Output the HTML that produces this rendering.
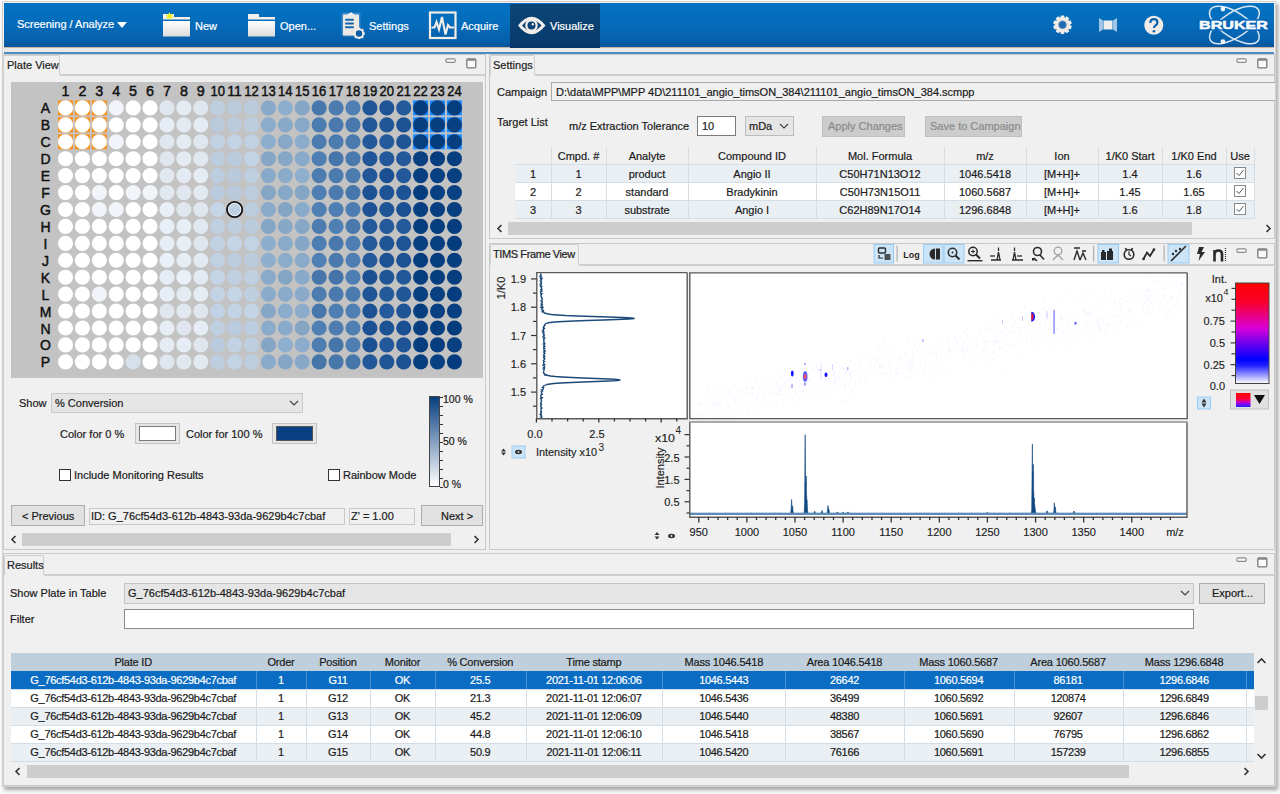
<!DOCTYPE html><html><head><meta charset="utf-8"><style>
*{box-sizing:border-box}
html,body{margin:0;padding:0;width:1280px;height:794px;overflow:hidden;background:#fbfbfb;font-family:"Liberation Sans", sans-serif;font-size:11px;color:#1a1a1a}
.a{position:absolute}
.t{position:absolute;white-space:nowrap;line-height:1;-webkit-text-stroke:0.2px currentColor}
.hb{position:absolute;white-space:nowrap;color:#fff;font-size:11px;line-height:1;-webkit-text-stroke:0.2px #fff}
.panel{position:absolute;border:1px solid #c9c9c9;background:#f0f0f0}
.tab{position:absolute;background:#f0f0f0;border:1px solid #cfcfcf;border-bottom:none;border-radius:2px 2px 0 0}
.tabline{position:absolute;height:2px;background:#d0d0d0}
.field{position:absolute;background:#f0f0f0;border:1px solid #c8c8c8}
.btn{position:absolute;background:#e1e1e1;border:1px solid #adadad;text-align:center}
.sb{position:absolute;background:#f0f0f0}
.thumb{position:absolute;background:#cdcdcd}
</style></head><body>
<div class="a" style="left:2px;top:1px;width:1274px;height:786px;background:#f0f0f0;border:1px solid #d9d2ce;box-shadow:2px 3px 4px rgba(0,0,0,0.35)"></div><div class="a" style="left:4px;top:3px;width:1270px;height:44px;background:linear-gradient(#0372c3 0%,#046cbb 45%,#0760ac 85%,#08559c 100%)"></div><div class="a" style="left:4px;top:47px;width:1270px;height:1px;background:#c9b8a8"></div><div class="a" style="left:4px;top:48px;width:1270px;height:4px;background:#e9e9e9"></div><div class="a" style="left:4px;top:52px;width:1270px;height:2px;background:#4a8cc4"></div><div class="a" style="left:510px;top:4px;width:90px;height:44px;background:linear-gradient(#0b4576,#083c6e 80%,#05346a)"></div><div class="hb" style="left:17px;top:19px">Screening / Analyze</div><svg class="a" style="left:117px;top:22px" width="10" height="6"><path d="M0 0H10L5 6Z" fill="#fff"/></svg><svg class="a" style="left:162px;top:12px" width="30" height="26"><defs><linearGradient id="fg" x1="0" y1="0" x2="0" y2="1"><stop offset="0" stop-color="#ffffff"/><stop offset="1" stop-color="#dcdcdc"/></linearGradient></defs><rect x="1" y="2" width="11" height="4" fill="#f4f0ec"/><rect x="1" y="5" width="27" height="2.5" fill="#f4efe9"/><rect x="1" y="9" width="27" height="15.5" fill="url(#fg)"/><path d="M7.5 0L8.6 2.6 11.3 1.8 9.6 4 11.8 5.6 9 5.6 8.4 8.3 7 6 4.6 7.2 5.6 4.8 3.4 3.2 6 3.1Z" fill="#e8f020"/></svg><div class="hb" style="left:195px;top:21px">New</div><svg class="a" style="left:247px;top:12px" width="30" height="26"><defs><linearGradient id="fg" x1="0" y1="0" x2="0" y2="1"><stop offset="0" stop-color="#ffffff"/><stop offset="1" stop-color="#dcdcdc"/></linearGradient></defs><rect x="1" y="2" width="11" height="4" fill="#f4f0ec"/><rect x="1" y="5" width="27" height="2.5" fill="#f4efe9"/><rect x="1" y="9" width="27" height="15.5" fill="url(#fg)"/></svg><div class="hb" style="left:280px;top:21px">Open...</div><svg class="a" style="left:340px;top:11px" width="26" height="28">
<rect x="1.5" y="1.5" width="19" height="24" rx="2" fill="#7fb0dc" opacity="0.45"/>
<rect x="3" y="3.5" width="16" height="21" rx="1" fill="#ece8e4"/>
<path d="M7 4L11 1.3 15 4Z" fill="#f4f4f4"/>
<rect x="5" y="7.8" width="9" height="2" rx="1" fill="#1466b0"/>
<rect x="5" y="11.6" width="9" height="2" rx="1" fill="#1466b0"/>
<rect x="5" y="15.3" width="9" height="2" rx="1" fill="#1466b0"/>
<g transform="translate(19,22.5)"><rect x="-1" y="-5.9" width="2" height="2" transform="rotate(0)" fill="#f0ebe6"/><rect x="-1" y="-5.9" width="2" height="2" transform="rotate(45)" fill="#f0ebe6"/><rect x="-1" y="-5.9" width="2" height="2" transform="rotate(90)" fill="#f0ebe6"/><rect x="-1" y="-5.9" width="2" height="2" transform="rotate(135)" fill="#f0ebe6"/><rect x="-1" y="-5.9" width="2" height="2" transform="rotate(180)" fill="#f0ebe6"/><rect x="-1" y="-5.9" width="2" height="2" transform="rotate(225)" fill="#f0ebe6"/><rect x="-1" y="-5.9" width="2" height="2" transform="rotate(270)" fill="#f0ebe6"/><rect x="-1" y="-5.9" width="2" height="2" transform="rotate(315)" fill="#f0ebe6"/><circle r="4.2" fill="#0a5ea8" stroke="#f0ebe6" stroke-width="2"/></g>
</svg><div class="hb" style="left:369px;top:21px">Settings</div><svg class="a" style="left:428px;top:11px" width="30" height="29">
<rect x="2" y="1.5" width="25.5" height="25.5" fill="none" stroke="#f3ede8" stroke-width="2.2"/>
<path d="M3.5 16.5H6.5L8.5 11 11 18.5 14 6 17.5 23.5 20 14 22 16.5H26" fill="none" stroke="#f3ede8" stroke-width="2.1" stroke-linejoin="miter"/>
</svg><div class="hb" style="left:461px;top:21px">Acquire</div><svg class="a" style="left:517px;top:16px" width="30" height="19">
<path d="M1 9.5Q14.5 -8 28.5 9.5Q14.5 27 1 9.5Z" fill="#f2eeeb"/>
<path d="M5 9.5Q14.5 -1.5 24.5 9.5Q14.5 20.5 5 9.5Z" fill="#0a4173"/>
<circle cx="14.5" cy="9.5" r="6.3" fill="#f2eeeb"/>
<circle cx="14.5" cy="9.5" r="4" fill="#0a4173"/>
<circle cx="15.8" cy="8.3" r="1.2" fill="#f2eeeb"/>
</svg><div class="hb" style="left:550px;top:21px">Visualize</div><svg class="a" style="left:1052px;top:14px" width="22" height="22"><g transform="translate(10.5,10.8)">
<path d="M-1.6 -9.3H1.6L2.4 -6H-2.4Z" transform="rotate(0)" fill="#f0ebe6"/><path d="M-1.6 -9.3H1.6L2.4 -6H-2.4Z" transform="rotate(36)" fill="#f0ebe6"/><path d="M-1.6 -9.3H1.6L2.4 -6H-2.4Z" transform="rotate(72)" fill="#f0ebe6"/><path d="M-1.6 -9.3H1.6L2.4 -6H-2.4Z" transform="rotate(108)" fill="#f0ebe6"/><path d="M-1.6 -9.3H1.6L2.4 -6H-2.4Z" transform="rotate(144)" fill="#f0ebe6"/><path d="M-1.6 -9.3H1.6L2.4 -6H-2.4Z" transform="rotate(180)" fill="#f0ebe6"/><path d="M-1.6 -9.3H1.6L2.4 -6H-2.4Z" transform="rotate(216)" fill="#f0ebe6"/><path d="M-1.6 -9.3H1.6L2.4 -6H-2.4Z" transform="rotate(252)" fill="#f0ebe6"/><path d="M-1.6 -9.3H1.6L2.4 -6H-2.4Z" transform="rotate(288)" fill="#f0ebe6"/><path d="M-1.6 -9.3H1.6L2.4 -6H-2.4Z" transform="rotate(324)" fill="#f0ebe6"/><circle r="7" fill="#f0ebe6"/><circle r="4" fill="#1c6cb2"/><circle r="4" fill="none" stroke="#9aa8b8" stroke-width="0.8"/></g></svg><svg class="a" style="left:1098px;top:17px" width="20" height="16">
<path d="M1 1L5 3.5V12.5L1 15Z" fill="#9fc6e8"/><path d="M19 1L15 3.5V12.5L19 15Z" fill="#9fc6e8"/>
<rect x="5.5" y="3.5" width="9" height="9" fill="#eeeeee"/></svg><svg class="a" style="left:1143px;top:15px" width="22" height="22">
<circle cx="10.8" cy="10.3" r="9.5" fill="#efebe7"/>
<path d="M7.3 8Q7.3 4.2 10.9 4.2Q14.4 4.2 14.4 7.4Q14.4 9.3 12.3 10.6Q11 11.4 11 13" fill="none" stroke="#0a62ad" stroke-width="2.2"/>
<circle cx="11" cy="16.2" r="1.3" fill="#0a62ad"/></svg><svg class="a" style="left:1190px;top:2px" width="86" height="46" viewBox="1190 2 86 46">
<g fill="none" stroke="#d8e6f4" stroke-width="1.5">
<ellipse cx="1234.4" cy="25" rx="28.5" ry="12.5" transform="rotate(33 1234.4 25)"/>
<ellipse cx="1234.4" cy="25" rx="28.5" ry="12.5" transform="rotate(-33 1234.4 25)"/>
</g>
<circle cx="1222.9" cy="9.1" r="2.3" fill="#f4f8fc"/><circle cx="1222.9" cy="41.6" r="2.3" fill="#f4f8fc"/>
<text x="1199" y="29.3" font-family="Liberation Sans" font-weight="bold" font-size="10.8" fill="#0865b5" stroke="#0865b5" stroke-width="3" textLength="69" lengthAdjust="spacingAndGlyphs">BRUKER</text><text x="1199" y="29.3" font-family="Liberation Sans" font-weight="bold" font-size="10.8" fill="#fafcff" stroke="#fafcff" stroke-width="0.45" textLength="69" lengthAdjust="spacingAndGlyphs">BRUKER</text>
</svg><div class="panel" style="left:3px;top:54px;width:483px;height:496px"></div><div class="tab" style="left:3px;top:55px;width:57px;height:20px"></div><div class="t" style="left:7px;top:60px;color:#222">Plate View</div><div class="a" style="left:60px;top:74px;width:425px;height:2px;background:#cfcfcf"></div><svg class="a" style="left:445px;top:58px" width="32" height="11"><rect x="0.8" y="0.8" width="9.5" height="3.6" rx="1.6" fill="#fafafa" stroke="#8a8a8a" stroke-width="1.2"/><rect x="21.8" y="0.8" width="9" height="9" rx="1" fill="#fafafa" stroke="#7a7a7a" stroke-width="1.3"/><rect x="22" y="1" width="8.6" height="1.8" fill="#8a8a8a"/></svg><div class="a" style="left:11px;top:82px;width:472px;height:296px;background:#c3c3c3"></div><svg class="a" style="left:11px;top:82px" width="472" height="296"><text x="54.5" y="13.700000000000003" text-anchor="middle" font-size="14.5" font-family="Liberation Sans" fill="#111" stroke="#111" stroke-width="0.45" textLength="8" lengthAdjust="spacingAndGlyphs">1</text><text x="71.4" y="13.700000000000003" text-anchor="middle" font-size="14.5" font-family="Liberation Sans" fill="#111" stroke="#111" stroke-width="0.45" textLength="8" lengthAdjust="spacingAndGlyphs">2</text><text x="88.3" y="13.700000000000003" text-anchor="middle" font-size="14.5" font-family="Liberation Sans" fill="#111" stroke="#111" stroke-width="0.45" textLength="8" lengthAdjust="spacingAndGlyphs">3</text><text x="105.2" y="13.700000000000003" text-anchor="middle" font-size="14.5" font-family="Liberation Sans" fill="#111" stroke="#111" stroke-width="0.45" textLength="8" lengthAdjust="spacingAndGlyphs">4</text><text x="122.1" y="13.700000000000003" text-anchor="middle" font-size="14.5" font-family="Liberation Sans" fill="#111" stroke="#111" stroke-width="0.45" textLength="8" lengthAdjust="spacingAndGlyphs">5</text><text x="139.1" y="13.700000000000003" text-anchor="middle" font-size="14.5" font-family="Liberation Sans" fill="#111" stroke="#111" stroke-width="0.45" textLength="8" lengthAdjust="spacingAndGlyphs">6</text><text x="156.0" y="13.700000000000003" text-anchor="middle" font-size="14.5" font-family="Liberation Sans" fill="#111" stroke="#111" stroke-width="0.45" textLength="8" lengthAdjust="spacingAndGlyphs">7</text><text x="172.9" y="13.700000000000003" text-anchor="middle" font-size="14.5" font-family="Liberation Sans" fill="#111" stroke="#111" stroke-width="0.45" textLength="8" lengthAdjust="spacingAndGlyphs">8</text><text x="189.8" y="13.700000000000003" text-anchor="middle" font-size="14.5" font-family="Liberation Sans" fill="#111" stroke="#111" stroke-width="0.45" textLength="8" lengthAdjust="spacingAndGlyphs">9</text><text x="206.7" y="13.700000000000003" text-anchor="middle" font-size="14.5" font-family="Liberation Sans" fill="#111" stroke="#111" stroke-width="0.45" textLength="14.5" lengthAdjust="spacingAndGlyphs">10</text><text x="223.6" y="13.700000000000003" text-anchor="middle" font-size="14.5" font-family="Liberation Sans" fill="#111" stroke="#111" stroke-width="0.45" textLength="14.5" lengthAdjust="spacingAndGlyphs">11</text><text x="240.5" y="13.700000000000003" text-anchor="middle" font-size="14.5" font-family="Liberation Sans" fill="#111" stroke="#111" stroke-width="0.45" textLength="14.5" lengthAdjust="spacingAndGlyphs">12</text><text x="257.4" y="13.700000000000003" text-anchor="middle" font-size="14.5" font-family="Liberation Sans" fill="#111" stroke="#111" stroke-width="0.45" textLength="14.5" lengthAdjust="spacingAndGlyphs">13</text><text x="274.3" y="13.700000000000003" text-anchor="middle" font-size="14.5" font-family="Liberation Sans" fill="#111" stroke="#111" stroke-width="0.45" textLength="14.5" lengthAdjust="spacingAndGlyphs">14</text><text x="291.2" y="13.700000000000003" text-anchor="middle" font-size="14.5" font-family="Liberation Sans" fill="#111" stroke="#111" stroke-width="0.45" textLength="14.5" lengthAdjust="spacingAndGlyphs">15</text><text x="308.1" y="13.700000000000003" text-anchor="middle" font-size="14.5" font-family="Liberation Sans" fill="#111" stroke="#111" stroke-width="0.45" textLength="14.5" lengthAdjust="spacingAndGlyphs">16</text><text x="325.1" y="13.700000000000003" text-anchor="middle" font-size="14.5" font-family="Liberation Sans" fill="#111" stroke="#111" stroke-width="0.45" textLength="14.5" lengthAdjust="spacingAndGlyphs">17</text><text x="342.0" y="13.700000000000003" text-anchor="middle" font-size="14.5" font-family="Liberation Sans" fill="#111" stroke="#111" stroke-width="0.45" textLength="14.5" lengthAdjust="spacingAndGlyphs">18</text><text x="358.9" y="13.700000000000003" text-anchor="middle" font-size="14.5" font-family="Liberation Sans" fill="#111" stroke="#111" stroke-width="0.45" textLength="14.5" lengthAdjust="spacingAndGlyphs">19</text><text x="375.8" y="13.700000000000003" text-anchor="middle" font-size="14.5" font-family="Liberation Sans" fill="#111" stroke="#111" stroke-width="0.45" textLength="14.5" lengthAdjust="spacingAndGlyphs">20</text><text x="392.7" y="13.700000000000003" text-anchor="middle" font-size="14.5" font-family="Liberation Sans" fill="#111" stroke="#111" stroke-width="0.45" textLength="14.5" lengthAdjust="spacingAndGlyphs">21</text><text x="409.6" y="13.700000000000003" text-anchor="middle" font-size="14.5" font-family="Liberation Sans" fill="#111" stroke="#111" stroke-width="0.45" textLength="14.5" lengthAdjust="spacingAndGlyphs">22</text><text x="426.5" y="13.700000000000003" text-anchor="middle" font-size="14.5" font-family="Liberation Sans" fill="#111" stroke="#111" stroke-width="0.45" textLength="14.5" lengthAdjust="spacingAndGlyphs">23</text><text x="443.4" y="13.700000000000003" text-anchor="middle" font-size="14.5" font-family="Liberation Sans" fill="#111" stroke="#111" stroke-width="0.45" textLength="14.5" lengthAdjust="spacingAndGlyphs">24</text><text x="34.5" y="31.4" text-anchor="middle" font-size="14" font-family="Liberation Sans" fill="#111" stroke="#111" stroke-width="0.45">A</text><text x="34.5" y="48.3" text-anchor="middle" font-size="14" font-family="Liberation Sans" fill="#111" stroke="#111" stroke-width="0.45">B</text><text x="34.5" y="65.3" text-anchor="middle" font-size="14" font-family="Liberation Sans" fill="#111" stroke="#111" stroke-width="0.45">C</text><text x="34.5" y="82.2" text-anchor="middle" font-size="14" font-family="Liberation Sans" fill="#111" stroke="#111" stroke-width="0.45">D</text><text x="34.5" y="99.1" text-anchor="middle" font-size="14" font-family="Liberation Sans" fill="#111" stroke="#111" stroke-width="0.45">E</text><text x="34.5" y="116.1" text-anchor="middle" font-size="14" font-family="Liberation Sans" fill="#111" stroke="#111" stroke-width="0.45">F</text><text x="34.5" y="133.0" text-anchor="middle" font-size="14" font-family="Liberation Sans" fill="#111" stroke="#111" stroke-width="0.45">G</text><text x="34.5" y="149.9" text-anchor="middle" font-size="14" font-family="Liberation Sans" fill="#111" stroke="#111" stroke-width="0.45">H</text><text x="34.5" y="166.8" text-anchor="middle" font-size="14" font-family="Liberation Sans" fill="#111" stroke="#111" stroke-width="0.45">I</text><text x="34.5" y="183.8" text-anchor="middle" font-size="14" font-family="Liberation Sans" fill="#111" stroke="#111" stroke-width="0.45">J</text><text x="34.5" y="200.7" text-anchor="middle" font-size="14" font-family="Liberation Sans" fill="#111" stroke="#111" stroke-width="0.45">K</text><text x="34.5" y="217.6" text-anchor="middle" font-size="14" font-family="Liberation Sans" fill="#111" stroke="#111" stroke-width="0.45">L</text><text x="34.5" y="234.6" text-anchor="middle" font-size="14" font-family="Liberation Sans" fill="#111" stroke="#111" stroke-width="0.45">M</text><text x="34.5" y="251.5" text-anchor="middle" font-size="14" font-family="Liberation Sans" fill="#111" stroke="#111" stroke-width="0.45">N</text><text x="34.5" y="268.4" text-anchor="middle" font-size="14" font-family="Liberation Sans" fill="#111" stroke="#111" stroke-width="0.45">O</text><text x="34.5" y="285.4" text-anchor="middle" font-size="14" font-family="Liberation Sans" fill="#111" stroke="#111" stroke-width="0.45">P</text><rect x="47.0" y="18.4" width="15" height="15" fill="#f7931e"/><circle cx="54.50" cy="25.90" r="7.55" fill="#ffffff"/><rect x="63.9" y="18.4" width="15" height="15" fill="#f7931e"/><circle cx="71.41" cy="25.90" r="7.55" fill="#ffffff"/><rect x="80.8" y="18.4" width="15" height="15" fill="#f7931e"/><circle cx="88.32" cy="25.90" r="7.55" fill="#ffffff"/><circle cx="105.23" cy="25.90" r="7.55" fill="#f1f5f9"/><circle cx="122.14" cy="25.90" r="7.55" fill="#ffffff"/><circle cx="139.05" cy="25.90" r="7.55" fill="#ffffff"/><circle cx="155.96" cy="25.90" r="7.55" fill="#dfe6ed"/><circle cx="172.87" cy="25.90" r="7.55" fill="#e4ebf2"/><circle cx="189.78" cy="25.90" r="7.55" fill="#dfe6ed"/><circle cx="206.69" cy="25.90" r="7.55" fill="#becfe1"/><circle cx="223.60" cy="25.90" r="7.55" fill="#bacbdd"/><circle cx="240.51" cy="25.90" r="7.55" fill="#bacbdd"/><circle cx="257.42" cy="25.90" r="7.55" fill="#89a9c9"/><circle cx="274.33" cy="25.90" r="7.55" fill="#8eaece"/><circle cx="291.24" cy="25.90" r="7.55" fill="#86a6c6"/><circle cx="308.15" cy="25.90" r="7.55" fill="#4777ab"/><circle cx="325.06" cy="25.90" r="7.55" fill="#4b7baf"/><circle cx="341.97" cy="25.90" r="7.55" fill="#4f7fb3"/><circle cx="358.88" cy="25.90" r="7.55" fill="#205697"/><circle cx="375.79" cy="25.90" r="7.55" fill="#1e5495"/><circle cx="392.70" cy="25.90" r="7.55" fill="#245a9b"/><rect x="402.1" y="18.4" width="15" height="15" fill="#1a8cff"/><circle cx="409.61" cy="25.90" r="7.55" fill="#053c7e"/><rect x="419.0" y="18.4" width="15" height="15" fill="#1a8cff"/><circle cx="426.52" cy="25.90" r="7.55" fill="#094082"/><rect x="435.9" y="18.4" width="15" height="15" fill="#1a8cff"/><circle cx="443.43" cy="25.90" r="7.55" fill="#063d7f"/><rect x="47.0" y="35.3" width="15" height="15" fill="#f7931e"/><circle cx="54.50" cy="42.83" r="7.55" fill="#ffffff"/><rect x="63.9" y="35.3" width="15" height="15" fill="#f7931e"/><circle cx="71.41" cy="42.83" r="7.55" fill="#ffffff"/><rect x="80.8" y="35.3" width="15" height="15" fill="#f7931e"/><circle cx="88.32" cy="42.83" r="7.55" fill="#ffffff"/><circle cx="105.23" cy="42.83" r="7.55" fill="#ffffff"/><circle cx="122.14" cy="42.83" r="7.55" fill="#ffffff"/><circle cx="139.05" cy="42.83" r="7.55" fill="#ffffff"/><circle cx="155.96" cy="42.83" r="7.55" fill="#e6edf4"/><circle cx="172.87" cy="42.83" r="7.55" fill="#e3eaf1"/><circle cx="189.78" cy="42.83" r="7.55" fill="#e5ecf3"/><circle cx="206.69" cy="42.83" r="7.55" fill="#bacbdd"/><circle cx="223.60" cy="42.83" r="7.55" fill="#bacbdd"/><circle cx="240.51" cy="42.83" r="7.55" fill="#bccddf"/><circle cx="257.42" cy="42.83" r="7.55" fill="#8caccc"/><circle cx="274.33" cy="42.83" r="7.55" fill="#89a9c9"/><circle cx="291.24" cy="42.83" r="7.55" fill="#88a8c8"/><circle cx="308.15" cy="42.83" r="7.55" fill="#4b7baf"/><circle cx="325.06" cy="42.83" r="7.55" fill="#4979ad"/><circle cx="341.97" cy="42.83" r="7.55" fill="#4878ac"/><circle cx="358.88" cy="42.83" r="7.55" fill="#225899"/><circle cx="375.79" cy="42.83" r="7.55" fill="#215798"/><circle cx="392.70" cy="42.83" r="7.55" fill="#1c5293"/><rect x="402.1" y="35.3" width="15" height="15" fill="#1a8cff"/><circle cx="409.61" cy="42.83" r="7.55" fill="#073e80"/><rect x="419.0" y="35.3" width="15" height="15" fill="#1a8cff"/><circle cx="426.52" cy="42.83" r="7.55" fill="#073e80"/><rect x="435.9" y="35.3" width="15" height="15" fill="#1a8cff"/><circle cx="443.43" cy="42.83" r="7.55" fill="#094082"/><rect x="47.0" y="52.3" width="15" height="15" fill="#f7931e"/><circle cx="54.50" cy="59.76" r="7.55" fill="#ffffff"/><rect x="63.9" y="52.3" width="15" height="15" fill="#f7931e"/><circle cx="71.41" cy="59.76" r="7.55" fill="#ffffff"/><rect x="80.8" y="52.3" width="15" height="15" fill="#f7931e"/><circle cx="88.32" cy="59.76" r="7.55" fill="#ffffff"/><circle cx="105.23" cy="59.76" r="7.55" fill="#f1f5f9"/><circle cx="122.14" cy="59.76" r="7.55" fill="#ffffff"/><circle cx="139.05" cy="59.76" r="7.55" fill="#ffffff"/><circle cx="155.96" cy="59.76" r="7.55" fill="#e0e7ee"/><circle cx="172.87" cy="59.76" r="7.55" fill="#e4ebf2"/><circle cx="189.78" cy="59.76" r="7.55" fill="#dfe6ed"/><circle cx="206.69" cy="59.76" r="7.55" fill="#c1d2e4"/><circle cx="223.60" cy="59.76" r="7.55" fill="#c2d3e5"/><circle cx="240.51" cy="59.76" r="7.55" fill="#c0d1e3"/><circle cx="257.42" cy="59.76" r="7.55" fill="#8eaece"/><circle cx="274.33" cy="59.76" r="7.55" fill="#88a8c8"/><circle cx="291.24" cy="59.76" r="7.55" fill="#8caccc"/><circle cx="308.15" cy="59.76" r="7.55" fill="#4b7baf"/><circle cx="325.06" cy="59.76" r="7.55" fill="#4b7baf"/><circle cx="341.97" cy="59.76" r="7.55" fill="#4a7aae"/><circle cx="358.88" cy="59.76" r="7.55" fill="#23599a"/><circle cx="375.79" cy="59.76" r="7.55" fill="#245a9b"/><circle cx="392.70" cy="59.76" r="7.55" fill="#1f5596"/><rect x="402.1" y="52.3" width="15" height="15" fill="#1a8cff"/><circle cx="409.61" cy="59.76" r="7.55" fill="#083f81"/><rect x="419.0" y="52.3" width="15" height="15" fill="#1a8cff"/><circle cx="426.52" cy="59.76" r="7.55" fill="#053c7e"/><rect x="435.9" y="52.3" width="15" height="15" fill="#1a8cff"/><circle cx="443.43" cy="59.76" r="7.55" fill="#083f81"/><circle cx="54.50" cy="76.69" r="7.55" fill="#ffffff"/><circle cx="71.41" cy="76.69" r="7.55" fill="#ffffff"/><circle cx="88.32" cy="76.69" r="7.55" fill="#ffffff"/><circle cx="105.23" cy="76.69" r="7.55" fill="#ffffff"/><circle cx="122.14" cy="76.69" r="7.55" fill="#ffffff"/><circle cx="139.05" cy="76.69" r="7.55" fill="#ffffff"/><circle cx="155.96" cy="76.69" r="7.55" fill="#dfe6ed"/><circle cx="172.87" cy="76.69" r="7.55" fill="#e4ebf2"/><circle cx="189.78" cy="76.69" r="7.55" fill="#e0e7ee"/><circle cx="206.69" cy="76.69" r="7.55" fill="#bbccde"/><circle cx="223.60" cy="76.69" r="7.55" fill="#bacbdd"/><circle cx="240.51" cy="76.69" r="7.55" fill="#c2d3e5"/><circle cx="257.42" cy="76.69" r="7.55" fill="#86a6c6"/><circle cx="274.33" cy="76.69" r="7.55" fill="#87a7c7"/><circle cx="291.24" cy="76.69" r="7.55" fill="#89a9c9"/><circle cx="308.15" cy="76.69" r="7.55" fill="#4e7eb2"/><circle cx="325.06" cy="76.69" r="7.55" fill="#4575a9"/><circle cx="341.97" cy="76.69" r="7.55" fill="#4979ad"/><circle cx="358.88" cy="76.69" r="7.55" fill="#205697"/><circle cx="375.79" cy="76.69" r="7.55" fill="#23599a"/><circle cx="392.70" cy="76.69" r="7.55" fill="#23599a"/><circle cx="409.61" cy="76.69" r="7.55" fill="#094082"/><circle cx="426.52" cy="76.69" r="7.55" fill="#063d7f"/><circle cx="443.43" cy="76.69" r="7.55" fill="#073e80"/><circle cx="54.50" cy="93.62" r="7.55" fill="#ffffff"/><circle cx="71.41" cy="93.62" r="7.55" fill="#ffffff"/><circle cx="88.32" cy="93.62" r="7.55" fill="#ffffff"/><circle cx="105.23" cy="93.62" r="7.55" fill="#ffffff"/><circle cx="122.14" cy="93.62" r="7.55" fill="#ffffff"/><circle cx="139.05" cy="93.62" r="7.55" fill="#ffffff"/><circle cx="155.96" cy="93.62" r="7.55" fill="#e1e8ef"/><circle cx="172.87" cy="93.62" r="7.55" fill="#e4ebf2"/><circle cx="189.78" cy="93.62" r="7.55" fill="#e5ecf3"/><circle cx="206.69" cy="93.62" r="7.55" fill="#bccddf"/><circle cx="223.60" cy="93.62" r="7.55" fill="#b9cadc"/><circle cx="240.51" cy="93.62" r="7.55" fill="#becfe1"/><circle cx="257.42" cy="93.62" r="7.55" fill="#89a9c9"/><circle cx="274.33" cy="93.62" r="7.55" fill="#8babcb"/><circle cx="291.24" cy="93.62" r="7.55" fill="#8fafcf"/><circle cx="308.15" cy="93.62" r="7.55" fill="#4c7cb0"/><circle cx="325.06" cy="93.62" r="7.55" fill="#4a7aae"/><circle cx="341.97" cy="93.62" r="7.55" fill="#4b7baf"/><circle cx="358.88" cy="93.62" r="7.55" fill="#215798"/><circle cx="375.79" cy="93.62" r="7.55" fill="#1a5091"/><circle cx="392.70" cy="93.62" r="7.55" fill="#23599a"/><circle cx="409.61" cy="93.62" r="7.55" fill="#083f81"/><circle cx="426.52" cy="93.62" r="7.55" fill="#094082"/><circle cx="443.43" cy="93.62" r="7.55" fill="#094082"/><circle cx="54.50" cy="110.55" r="7.55" fill="#ffffff"/><circle cx="71.41" cy="110.55" r="7.55" fill="#ffffff"/><circle cx="88.32" cy="110.55" r="7.55" fill="#f1f5f9"/><circle cx="105.23" cy="110.55" r="7.55" fill="#ffffff"/><circle cx="122.14" cy="110.55" r="7.55" fill="#f1f5f9"/><circle cx="139.05" cy="110.55" r="7.55" fill="#f1f5f9"/><circle cx="155.96" cy="110.55" r="7.55" fill="#e1e8ef"/><circle cx="172.87" cy="110.55" r="7.55" fill="#e0e7ee"/><circle cx="189.78" cy="110.55" r="7.55" fill="#e2e9f0"/><circle cx="206.69" cy="110.55" r="7.55" fill="#bacbdd"/><circle cx="223.60" cy="110.55" r="7.55" fill="#b9cadc"/><circle cx="240.51" cy="110.55" r="7.55" fill="#bbccde"/><circle cx="257.42" cy="110.55" r="7.55" fill="#86a6c6"/><circle cx="274.33" cy="110.55" r="7.55" fill="#88a8c8"/><circle cx="291.24" cy="110.55" r="7.55" fill="#85a5c5"/><circle cx="308.15" cy="110.55" r="7.55" fill="#4e7eb2"/><circle cx="325.06" cy="110.55" r="7.55" fill="#4b7baf"/><circle cx="341.97" cy="110.55" r="7.55" fill="#4676aa"/><circle cx="358.88" cy="110.55" r="7.55" fill="#1c5293"/><circle cx="375.79" cy="110.55" r="7.55" fill="#1d5394"/><circle cx="392.70" cy="110.55" r="7.55" fill="#1d5394"/><circle cx="409.61" cy="110.55" r="7.55" fill="#053c7e"/><circle cx="426.52" cy="110.55" r="7.55" fill="#094082"/><circle cx="443.43" cy="110.55" r="7.55" fill="#0a4183"/><circle cx="54.50" cy="127.48" r="7.55" fill="#ffffff"/><circle cx="71.41" cy="127.48" r="7.55" fill="#ffffff"/><circle cx="88.32" cy="127.48" r="7.55" fill="#f1f5f9"/><circle cx="105.23" cy="127.48" r="7.55" fill="#f1f5f9"/><circle cx="122.14" cy="127.48" r="7.55" fill="#ffffff"/><circle cx="139.05" cy="127.48" r="7.55" fill="#ffffff"/><circle cx="155.96" cy="127.48" r="7.55" fill="#e8eff6"/><circle cx="172.87" cy="127.48" r="7.55" fill="#e0e7ee"/><circle cx="189.78" cy="127.48" r="7.55" fill="#dfe6ed"/><circle cx="206.69" cy="127.48" r="7.55" fill="#c4d5e7"/><circle cx="223.60" cy="127.48" r="7.55" fill="#bfd0e2"/><circle cx="240.51" cy="127.48" r="7.55" fill="#bbccde"/><circle cx="257.42" cy="127.48" r="7.55" fill="#8aaaca"/><circle cx="274.33" cy="127.48" r="7.55" fill="#85a5c5"/><circle cx="291.24" cy="127.48" r="7.55" fill="#8aaaca"/><circle cx="308.15" cy="127.48" r="7.55" fill="#4f7fb3"/><circle cx="325.06" cy="127.48" r="7.55" fill="#4e7eb2"/><circle cx="341.97" cy="127.48" r="7.55" fill="#4c7cb0"/><circle cx="358.88" cy="127.48" r="7.55" fill="#1c5293"/><circle cx="375.79" cy="127.48" r="7.55" fill="#1e5495"/><circle cx="392.70" cy="127.48" r="7.55" fill="#1b5192"/><circle cx="409.61" cy="127.48" r="7.55" fill="#083f81"/><circle cx="426.52" cy="127.48" r="7.55" fill="#073e80"/><circle cx="443.43" cy="127.48" r="7.55" fill="#083f81"/><circle cx="54.50" cy="144.41" r="7.55" fill="#ffffff"/><circle cx="71.41" cy="144.41" r="7.55" fill="#ffffff"/><circle cx="88.32" cy="144.41" r="7.55" fill="#ffffff"/><circle cx="105.23" cy="144.41" r="7.55" fill="#ffffff"/><circle cx="122.14" cy="144.41" r="7.55" fill="#ffffff"/><circle cx="139.05" cy="144.41" r="7.55" fill="#ffffff"/><circle cx="155.96" cy="144.41" r="7.55" fill="#e8eff6"/><circle cx="172.87" cy="144.41" r="7.55" fill="#e7eef5"/><circle cx="189.78" cy="144.41" r="7.55" fill="#e1e8ef"/><circle cx="206.69" cy="144.41" r="7.55" fill="#bfd0e2"/><circle cx="223.60" cy="144.41" r="7.55" fill="#bdcee0"/><circle cx="240.51" cy="144.41" r="7.55" fill="#bacbdd"/><circle cx="257.42" cy="144.41" r="7.55" fill="#85a5c5"/><circle cx="274.33" cy="144.41" r="7.55" fill="#88a8c8"/><circle cx="291.24" cy="144.41" r="7.55" fill="#87a7c7"/><circle cx="308.15" cy="144.41" r="7.55" fill="#4c7cb0"/><circle cx="325.06" cy="144.41" r="7.55" fill="#4f7fb3"/><circle cx="341.97" cy="144.41" r="7.55" fill="#4979ad"/><circle cx="358.88" cy="144.41" r="7.55" fill="#245a9b"/><circle cx="375.79" cy="144.41" r="7.55" fill="#245a9b"/><circle cx="392.70" cy="144.41" r="7.55" fill="#245a9b"/><circle cx="409.61" cy="144.41" r="7.55" fill="#063d7f"/><circle cx="426.52" cy="144.41" r="7.55" fill="#063d7f"/><circle cx="443.43" cy="144.41" r="7.55" fill="#063d7f"/><circle cx="54.50" cy="161.34" r="7.55" fill="#ffffff"/><circle cx="71.41" cy="161.34" r="7.55" fill="#ffffff"/><circle cx="88.32" cy="161.34" r="7.55" fill="#ffffff"/><circle cx="105.23" cy="161.34" r="7.55" fill="#ffffff"/><circle cx="122.14" cy="161.34" r="7.55" fill="#ffffff"/><circle cx="139.05" cy="161.34" r="7.55" fill="#ffffff"/><circle cx="155.96" cy="161.34" r="7.55" fill="#e6edf4"/><circle cx="172.87" cy="161.34" r="7.55" fill="#e7eef5"/><circle cx="189.78" cy="161.34" r="7.55" fill="#dfe6ed"/><circle cx="206.69" cy="161.34" r="7.55" fill="#c1d2e4"/><circle cx="223.60" cy="161.34" r="7.55" fill="#c4d5e7"/><circle cx="240.51" cy="161.34" r="7.55" fill="#c2d3e5"/><circle cx="257.42" cy="161.34" r="7.55" fill="#8dadcd"/><circle cx="274.33" cy="161.34" r="7.55" fill="#8aaaca"/><circle cx="291.24" cy="161.34" r="7.55" fill="#86a6c6"/><circle cx="308.15" cy="161.34" r="7.55" fill="#4d7db1"/><circle cx="325.06" cy="161.34" r="7.55" fill="#4878ac"/><circle cx="341.97" cy="161.34" r="7.55" fill="#4d7db1"/><circle cx="358.88" cy="161.34" r="7.55" fill="#245a9b"/><circle cx="375.79" cy="161.34" r="7.55" fill="#1e5495"/><circle cx="392.70" cy="161.34" r="7.55" fill="#1e5495"/><circle cx="409.61" cy="161.34" r="7.55" fill="#094082"/><circle cx="426.52" cy="161.34" r="7.55" fill="#083f81"/><circle cx="443.43" cy="161.34" r="7.55" fill="#053c7e"/><circle cx="54.50" cy="178.27" r="7.55" fill="#ffffff"/><circle cx="71.41" cy="178.27" r="7.55" fill="#ffffff"/><circle cx="88.32" cy="178.27" r="7.55" fill="#ffffff"/><circle cx="105.23" cy="178.27" r="7.55" fill="#ffffff"/><circle cx="122.14" cy="178.27" r="7.55" fill="#ffffff"/><circle cx="139.05" cy="178.27" r="7.55" fill="#ffffff"/><circle cx="155.96" cy="178.27" r="7.55" fill="#e9f0f7"/><circle cx="172.87" cy="178.27" r="7.55" fill="#e6edf4"/><circle cx="189.78" cy="178.27" r="7.55" fill="#e2e9f0"/><circle cx="206.69" cy="178.27" r="7.55" fill="#c0d1e3"/><circle cx="223.60" cy="178.27" r="7.55" fill="#bbccde"/><circle cx="240.51" cy="178.27" r="7.55" fill="#bacbdd"/><circle cx="257.42" cy="178.27" r="7.55" fill="#8fafcf"/><circle cx="274.33" cy="178.27" r="7.55" fill="#8caccc"/><circle cx="291.24" cy="178.27" r="7.55" fill="#8aaaca"/><circle cx="308.15" cy="178.27" r="7.55" fill="#4f7fb3"/><circle cx="325.06" cy="178.27" r="7.55" fill="#4979ad"/><circle cx="341.97" cy="178.27" r="7.55" fill="#4e7eb2"/><circle cx="358.88" cy="178.27" r="7.55" fill="#23599a"/><circle cx="375.79" cy="178.27" r="7.55" fill="#1c5293"/><circle cx="392.70" cy="178.27" r="7.55" fill="#1c5293"/><circle cx="409.61" cy="178.27" r="7.55" fill="#063d7f"/><circle cx="426.52" cy="178.27" r="7.55" fill="#063d7f"/><circle cx="443.43" cy="178.27" r="7.55" fill="#073e80"/><circle cx="54.50" cy="195.20" r="7.55" fill="#ffffff"/><circle cx="71.41" cy="195.20" r="7.55" fill="#ffffff"/><circle cx="88.32" cy="195.20" r="7.55" fill="#ffffff"/><circle cx="105.23" cy="195.20" r="7.55" fill="#ffffff"/><circle cx="122.14" cy="195.20" r="7.55" fill="#ffffff"/><circle cx="139.05" cy="195.20" r="7.55" fill="#ffffff"/><circle cx="155.96" cy="195.20" r="7.55" fill="#e5ecf3"/><circle cx="172.87" cy="195.20" r="7.55" fill="#e9f0f7"/><circle cx="189.78" cy="195.20" r="7.55" fill="#e3eaf1"/><circle cx="206.69" cy="195.20" r="7.55" fill="#c4d5e7"/><circle cx="223.60" cy="195.20" r="7.55" fill="#bfd0e2"/><circle cx="240.51" cy="195.20" r="7.55" fill="#bfd0e2"/><circle cx="257.42" cy="195.20" r="7.55" fill="#8aaaca"/><circle cx="274.33" cy="195.20" r="7.55" fill="#85a5c5"/><circle cx="291.24" cy="195.20" r="7.55" fill="#89a9c9"/><circle cx="308.15" cy="195.20" r="7.55" fill="#4676aa"/><circle cx="325.06" cy="195.20" r="7.55" fill="#4474a8"/><circle cx="341.97" cy="195.20" r="7.55" fill="#4d7db1"/><circle cx="358.88" cy="195.20" r="7.55" fill="#1b5192"/><circle cx="375.79" cy="195.20" r="7.55" fill="#1f5596"/><circle cx="392.70" cy="195.20" r="7.55" fill="#225899"/><circle cx="409.61" cy="195.20" r="7.55" fill="#073e80"/><circle cx="426.52" cy="195.20" r="7.55" fill="#063d7f"/><circle cx="443.43" cy="195.20" r="7.55" fill="#073e80"/><circle cx="54.50" cy="212.13" r="7.55" fill="#ffffff"/><circle cx="71.41" cy="212.13" r="7.55" fill="#ffffff"/><circle cx="88.32" cy="212.13" r="7.55" fill="#f1f5f9"/><circle cx="105.23" cy="212.13" r="7.55" fill="#ffffff"/><circle cx="122.14" cy="212.13" r="7.55" fill="#ffffff"/><circle cx="139.05" cy="212.13" r="7.55" fill="#ffffff"/><circle cx="155.96" cy="212.13" r="7.55" fill="#e7eef5"/><circle cx="172.87" cy="212.13" r="7.55" fill="#e4ebf2"/><circle cx="189.78" cy="212.13" r="7.55" fill="#e5ecf3"/><circle cx="206.69" cy="212.13" r="7.55" fill="#c2d3e5"/><circle cx="223.60" cy="212.13" r="7.55" fill="#c4d5e7"/><circle cx="240.51" cy="212.13" r="7.55" fill="#becfe1"/><circle cx="257.42" cy="212.13" r="7.55" fill="#8babcb"/><circle cx="274.33" cy="212.13" r="7.55" fill="#8aaaca"/><circle cx="291.24" cy="212.13" r="7.55" fill="#8aaaca"/><circle cx="308.15" cy="212.13" r="7.55" fill="#4c7cb0"/><circle cx="325.06" cy="212.13" r="7.55" fill="#4979ad"/><circle cx="341.97" cy="212.13" r="7.55" fill="#4a7aae"/><circle cx="358.88" cy="212.13" r="7.55" fill="#1f5596"/><circle cx="375.79" cy="212.13" r="7.55" fill="#245a9b"/><circle cx="392.70" cy="212.13" r="7.55" fill="#215798"/><circle cx="409.61" cy="212.13" r="7.55" fill="#094082"/><circle cx="426.52" cy="212.13" r="7.55" fill="#094082"/><circle cx="443.43" cy="212.13" r="7.55" fill="#063d7f"/><circle cx="54.50" cy="229.06" r="7.55" fill="#ffffff"/><circle cx="71.41" cy="229.06" r="7.55" fill="#ffffff"/><circle cx="88.32" cy="229.06" r="7.55" fill="#ffffff"/><circle cx="105.23" cy="229.06" r="7.55" fill="#ffffff"/><circle cx="122.14" cy="229.06" r="7.55" fill="#ffffff"/><circle cx="139.05" cy="229.06" r="7.55" fill="#ffffff"/><circle cx="155.96" cy="229.06" r="7.55" fill="#dfe6ed"/><circle cx="172.87" cy="229.06" r="7.55" fill="#e1e8ef"/><circle cx="189.78" cy="229.06" r="7.55" fill="#dfe6ed"/><circle cx="206.69" cy="229.06" r="7.55" fill="#c1d2e4"/><circle cx="223.60" cy="229.06" r="7.55" fill="#c2d3e5"/><circle cx="240.51" cy="229.06" r="7.55" fill="#c3d4e6"/><circle cx="257.42" cy="229.06" r="7.55" fill="#86a6c6"/><circle cx="274.33" cy="229.06" r="7.55" fill="#8caccc"/><circle cx="291.24" cy="229.06" r="7.55" fill="#8caccc"/><circle cx="308.15" cy="229.06" r="7.55" fill="#4676aa"/><circle cx="325.06" cy="229.06" r="7.55" fill="#4e7eb2"/><circle cx="341.97" cy="229.06" r="7.55" fill="#4f7fb3"/><circle cx="358.88" cy="229.06" r="7.55" fill="#1c5293"/><circle cx="375.79" cy="229.06" r="7.55" fill="#245a9b"/><circle cx="392.70" cy="229.06" r="7.55" fill="#1e5495"/><circle cx="409.61" cy="229.06" r="7.55" fill="#073e80"/><circle cx="426.52" cy="229.06" r="7.55" fill="#094082"/><circle cx="443.43" cy="229.06" r="7.55" fill="#094082"/><circle cx="54.50" cy="245.99" r="7.55" fill="#ffffff"/><circle cx="71.41" cy="245.99" r="7.55" fill="#ffffff"/><circle cx="88.32" cy="245.99" r="7.55" fill="#ffffff"/><circle cx="105.23" cy="245.99" r="7.55" fill="#ffffff"/><circle cx="122.14" cy="245.99" r="7.55" fill="#ffffff"/><circle cx="139.05" cy="245.99" r="7.55" fill="#ffffff"/><circle cx="155.96" cy="245.99" r="7.55" fill="#e6edf4"/><circle cx="172.87" cy="245.99" r="7.55" fill="#dfe6ed"/><circle cx="189.78" cy="245.99" r="7.55" fill="#e5ecf3"/><circle cx="206.69" cy="245.99" r="7.55" fill="#becfe1"/><circle cx="223.60" cy="245.99" r="7.55" fill="#bacbdd"/><circle cx="240.51" cy="245.99" r="7.55" fill="#bdcee0"/><circle cx="257.42" cy="245.99" r="7.55" fill="#8babcb"/><circle cx="274.33" cy="245.99" r="7.55" fill="#8aaaca"/><circle cx="291.24" cy="245.99" r="7.55" fill="#85a5c5"/><circle cx="308.15" cy="245.99" r="7.55" fill="#4f7fb3"/><circle cx="325.06" cy="245.99" r="7.55" fill="#4d7db1"/><circle cx="341.97" cy="245.99" r="7.55" fill="#4f7fb3"/><circle cx="358.88" cy="245.99" r="7.55" fill="#1b5192"/><circle cx="375.79" cy="245.99" r="7.55" fill="#1c5293"/><circle cx="392.70" cy="245.99" r="7.55" fill="#1a5091"/><circle cx="409.61" cy="245.99" r="7.55" fill="#083f81"/><circle cx="426.52" cy="245.99" r="7.55" fill="#063d7f"/><circle cx="443.43" cy="245.99" r="7.55" fill="#053c7e"/><circle cx="54.50" cy="262.92" r="7.55" fill="#ffffff"/><circle cx="71.41" cy="262.92" r="7.55" fill="#ffffff"/><circle cx="88.32" cy="262.92" r="7.55" fill="#ffffff"/><circle cx="105.23" cy="262.92" r="7.55" fill="#ffffff"/><circle cx="122.14" cy="262.92" r="7.55" fill="#ffffff"/><circle cx="139.05" cy="262.92" r="7.55" fill="#ffffff"/><circle cx="155.96" cy="262.92" r="7.55" fill="#e5ecf3"/><circle cx="172.87" cy="262.92" r="7.55" fill="#e6edf4"/><circle cx="189.78" cy="262.92" r="7.55" fill="#dfe6ed"/><circle cx="206.69" cy="262.92" r="7.55" fill="#bacbdd"/><circle cx="223.60" cy="262.92" r="7.55" fill="#c1d2e4"/><circle cx="240.51" cy="262.92" r="7.55" fill="#becfe1"/><circle cx="257.42" cy="262.92" r="7.55" fill="#85a5c5"/><circle cx="274.33" cy="262.92" r="7.55" fill="#8fafcf"/><circle cx="291.24" cy="262.92" r="7.55" fill="#8caccc"/><circle cx="308.15" cy="262.92" r="7.55" fill="#4d7db1"/><circle cx="325.06" cy="262.92" r="7.55" fill="#4575a9"/><circle cx="341.97" cy="262.92" r="7.55" fill="#4e7eb2"/><circle cx="358.88" cy="262.92" r="7.55" fill="#1a5091"/><circle cx="375.79" cy="262.92" r="7.55" fill="#23599a"/><circle cx="392.70" cy="262.92" r="7.55" fill="#1e5495"/><circle cx="409.61" cy="262.92" r="7.55" fill="#063d7f"/><circle cx="426.52" cy="262.92" r="7.55" fill="#073e80"/><circle cx="443.43" cy="262.92" r="7.55" fill="#094082"/><circle cx="54.50" cy="279.85" r="7.55" fill="#ffffff"/><circle cx="71.41" cy="279.85" r="7.55" fill="#ffffff"/><circle cx="88.32" cy="279.85" r="7.55" fill="#ffffff"/><circle cx="105.23" cy="279.85" r="7.55" fill="#ffffff"/><circle cx="122.14" cy="279.85" r="7.55" fill="#d6e0ea"/><circle cx="139.05" cy="279.85" r="7.55" fill="#ffffff"/><circle cx="155.96" cy="279.85" r="7.55" fill="#dfe6ed"/><circle cx="172.87" cy="279.85" r="7.55" fill="#e1e8ef"/><circle cx="189.78" cy="279.85" r="7.55" fill="#e2e9f0"/><circle cx="206.69" cy="279.85" r="7.55" fill="#bdcee0"/><circle cx="223.60" cy="279.85" r="7.55" fill="#c2d3e5"/><circle cx="240.51" cy="279.85" r="7.55" fill="#bdcee0"/><circle cx="257.42" cy="279.85" r="7.55" fill="#8aaaca"/><circle cx="274.33" cy="279.85" r="7.55" fill="#86a6c6"/><circle cx="291.24" cy="279.85" r="7.55" fill="#88a8c8"/><circle cx="308.15" cy="279.85" r="7.55" fill="#4575a9"/><circle cx="325.06" cy="279.85" r="7.55" fill="#4777ab"/><circle cx="341.97" cy="279.85" r="7.55" fill="#4575a9"/><circle cx="358.88" cy="279.85" r="7.55" fill="#225899"/><circle cx="375.79" cy="279.85" r="7.55" fill="#205697"/><circle cx="392.70" cy="279.85" r="7.55" fill="#1c5293"/><circle cx="409.61" cy="279.85" r="7.55" fill="#073e80"/><circle cx="426.52" cy="279.85" r="7.55" fill="#094082"/><circle cx="443.43" cy="279.85" r="7.55" fill="#053c7e"/><circle cx="223.60" cy="127.48" r="7.6" fill="none" stroke="#111" stroke-width="1.9"/><circle cx="223.60" cy="127.48" r="6.2" fill="none" stroke="#e6eef6" stroke-width="1"/></svg><div class="t" style="left:19px;top:398px">Show</div><div class="a" style="left:51px;top:393px;width:252px;height:20px;background:#e5e5e5;border:1px solid #cacaca"></div><div class="t" style="left:55px;top:398px">% Conversion</div><svg class="a" style="left:289px;top:400px" width="10" height="6"><path d="M1 1L5 5 9 1" fill="none" stroke="#444" stroke-width="1.2"/></svg><div class="t" style="left:60px;top:429px">Color for 0 %</div><div class="a" style="left:135px;top:423px;width:45px;height:21px;background:#e5e5e5;border:1px solid #c4c4c4"></div><div class="a" style="left:139px;top:426px;width:37px;height:15px;background:#fff;border:1px solid #7a7a7a"></div><div class="t" style="left:186px;top:429px">Color for 100 %</div><div class="a" style="left:272px;top:423px;width:45px;height:21px;background:#e5e5e5;border:1px solid #c4c4c4"></div><div class="a" style="left:276px;top:426px;width:37px;height:15px;background:#0b3f84;border:1px solid #555"></div><div class="a" style="left:59px;top:469px;width:12px;height:12px;background:#fff;border:1px solid #333"></div><div class="t" style="left:74px;top:470px">Include Monitoring Results</div><div class="a" style="left:328px;top:469px;width:12px;height:12px;background:#fff;border:1px solid #333"></div><div class="t" style="left:343px;top:470px">Rainbow Mode</div><div class="a" style="left:429px;top:396px;width:11px;height:91px;background:linear-gradient(#073e80,#ffffff);border:1px solid #444"></div><svg class="a" style="left:440px;top:396px" width="4" height="92"><rect x="0" y="1.0" width="3" height="1" fill="#333"/><rect x="0" y="10.0" width="3" height="1" fill="#333"/><rect x="0" y="19.0" width="3" height="1" fill="#333"/><rect x="0" y="28.0" width="3" height="1" fill="#333"/><rect x="0" y="37.0" width="3" height="1" fill="#333"/><rect x="0" y="46.0" width="3" height="1" fill="#333"/><rect x="0" y="55.0" width="3" height="1" fill="#333"/><rect x="0" y="64.0" width="3" height="1" fill="#333"/><rect x="0" y="73.0" width="3" height="1" fill="#333"/><rect x="0" y="82.0" width="3" height="1" fill="#333"/><rect x="0" y="91.0" width="3" height="1" fill="#333"/></svg><div class="t" style="left:443px;top:394px;font-size:10.5px">100 %</div><div class="t" style="left:443px;top:436px;font-size:10.5px">50 %</div><div class="t" style="left:443px;top:479px;font-size:10.5px">0 %</div><div class="btn" style="left:11px;top:505px;width:74px;height:21px"></div><div class="t" style="left:22px;top:511px">&lt; Previous</div><div class="field" style="left:89px;top:508px;width:256px;height:17px"></div><div class="t" style="left:91px;top:511px">ID: G_76cf54d3-612b-4843-93da-9629b4c7cbaf</div><div class="field" style="left:349px;top:508px;width:66px;height:17px"></div><div class="t" style="left:351px;top:511px">Z' = 1.00</div><div class="btn" style="left:421px;top:505px;width:62px;height:21px"></div><div class="t" style="left:441px;top:511px">Next &gt;</div><div class="a" style="left:4px;top:532px;width:481px;height:15px;background:#f0f0f0"></div><div class="thumb" style="left:22px;top:533px;width:429px;height:13px"></div><svg class="a" style="left:10px;top:535px" width="8" height="9"><path d="M5.5 1L2 4.5 5.5 8" fill="none" stroke="#333" stroke-width="1.6"/></svg><svg class="a" style="left:472px;top:535px" width="8" height="9"><path d="M2.5 1L6 4.5 2.5 8" fill="none" stroke="#333" stroke-width="1.6"/></svg><div class="panel" style="left:489px;top:54px;width:786px;height:185px"></div><div class="tab" style="left:490px;top:55px;width:45px;height:20px"></div><div class="t" style="left:493px;top:60px;color:#222">Settings</div><div class="a" style="left:535px;top:74px;width:739px;height:2px;background:#cfcfcf"></div><svg class="a" style="left:1236px;top:58px" width="32" height="11"><rect x="0.8" y="0.8" width="9.5" height="3.6" rx="1.6" fill="#fafafa" stroke="#8a8a8a" stroke-width="1.2"/><rect x="21.8" y="0.8" width="9" height="9" rx="1" fill="#fafafa" stroke="#7a7a7a" stroke-width="1.3"/><rect x="22" y="1" width="8.6" height="1.8" fill="#8a8a8a"/></svg><div class="t" style="left:497px;top:87px">Campaign</div><div class="a" style="left:551px;top:82px;width:724px;height:19px;background:#f0f0f0;border:1px solid #a9a9a9;border-right:none"></div><div class="t" style="left:556px;top:87px">D:\data\MPP\MPP 4D\211101_angio_timsON_384\211101_angio_timsON_384.scmpp</div><div class="t" style="left:497px;top:117px">Target List</div><div class="t" style="left:569px;top:121px">m/z Extraction Tolerance</div><div class="a" style="left:697px;top:116px;width:39px;height:20px;background:#fff;border:1px solid #7a7a7a"></div><div class="t" style="left:702px;top:121px">10</div><div class="a" style="left:745px;top:116px;width:49px;height:20px;background:#e5e5e5;border:1px solid #bdbdbd"></div><div class="t" style="left:749px;top:121px">mDa</div><svg class="a" style="left:779px;top:123px" width="10" height="6"><path d="M1 1L5 5 9 1" fill="none" stroke="#444" stroke-width="1.2"/></svg><div class="a" style="left:822px;top:116px;width:83px;height:21px;background:#cccccc;border:1px solid #bfbfbf"></div><div class="t" style="left:828px;top:121px;color:#8a8a8a">Apply Changes</div><div class="a" style="left:925px;top:116px;width:97px;height:21px;background:#cccccc;border:1px solid #bfbfbf"></div><div class="t" style="left:930px;top:121px;color:#8a8a8a">Save to Campaign</div><div class="a" style="left:515px;top:164px;width:739px;height:55px;background:#fff"></div><div class="a" style="left:515px;top:164px;width:739px;height:18px;background:#eaeff3"></div><div class="a" style="left:515px;top:200px;width:739px;height:19px;background:#eaeff3"></div><div class="a" style="left:515px;top:164px;width:739px;height:1px;background:#d6dee5"></div><div class="a" style="left:515px;top:182px;width:739px;height:1px;background:#d6dee5"></div><div class="a" style="left:515px;top:200px;width:739px;height:1px;background:#d6dee5"></div><div class="a" style="left:515px;top:218px;width:739px;height:1px;background:#d6dee5"></div><div class="a" style="left:551px;top:147px;width:1px;height:72px;background:#d6dee5"></div><div class="a" style="left:606px;top:147px;width:1px;height:72px;background:#d6dee5"></div><div class="a" style="left:688px;top:147px;width:1px;height:72px;background:#d6dee5"></div><div class="a" style="left:816px;top:147px;width:1px;height:72px;background:#d6dee5"></div><div class="a" style="left:944px;top:147px;width:1px;height:72px;background:#d6dee5"></div><div class="a" style="left:1026px;top:147px;width:1px;height:72px;background:#d6dee5"></div><div class="a" style="left:1098px;top:147px;width:1px;height:72px;background:#d6dee5"></div><div class="a" style="left:1162px;top:147px;width:1px;height:72px;background:#d6dee5"></div><div class="a" style="left:1226px;top:147px;width:1px;height:72px;background:#d6dee5"></div><div class="a" style="left:1254px;top:147px;width:1px;height:72px;background:#d6dee5"></div><div class="t" style="left:473.0px;width:120px;text-align:center;top:151px"></div><div class="t" style="left:518.5px;width:120px;text-align:center;top:151px">Cmpd. #</div><div class="t" style="left:587.0px;width:120px;text-align:center;top:151px">Analyte</div><div class="t" style="left:692.0px;width:120px;text-align:center;top:151px">Compound ID</div><div class="t" style="left:820.0px;width:120px;text-align:center;top:151px">Mol. Formula</div><div class="t" style="left:925.0px;width:120px;text-align:center;top:151px">m/z</div><div class="t" style="left:1002.0px;width:120px;text-align:center;top:151px">Ion</div><div class="t" style="left:1070.0px;width:120px;text-align:center;top:151px">1/K0 Start</div><div class="t" style="left:1134.0px;width:120px;text-align:center;top:151px">1/K0 End</div><div class="t" style="left:1180.0px;width:120px;text-align:center;top:151px">Use</div><div class="t" style="left:473.0px;width:120px;text-align:center;top:169px">1</div><div class="t" style="left:518.5px;width:120px;text-align:center;top:169px">1</div><div class="t" style="left:587.0px;width:120px;text-align:center;top:169px">product</div><div class="t" style="left:692.0px;width:120px;text-align:center;top:169px">Angio II</div><div class="t" style="left:820.0px;width:120px;text-align:center;top:169px">C50H71N13O12</div><div class="t" style="left:925.0px;width:120px;text-align:center;top:169px">1046.5418</div><div class="t" style="left:1002.0px;width:120px;text-align:center;top:169px">[M+H]+</div><div class="t" style="left:1070.0px;width:120px;text-align:center;top:169px">1.4</div><div class="t" style="left:1134.0px;width:120px;text-align:center;top:169px">1.6</div><svg class="a" style="left:1234px;top:167px" width="13" height="13"><rect x="0.5" y="0.5" width="11" height="11" fill="#fff" stroke="#8a8a8a"/><path d="M2.5 6L5 8.5 9.5 3" fill="none" stroke="#555" stroke-width="1"/></svg><div class="t" style="left:473.0px;width:120px;text-align:center;top:187px">2</div><div class="t" style="left:518.5px;width:120px;text-align:center;top:187px">2</div><div class="t" style="left:587.0px;width:120px;text-align:center;top:187px">standard</div><div class="t" style="left:692.0px;width:120px;text-align:center;top:187px">Bradykinin</div><div class="t" style="left:820.0px;width:120px;text-align:center;top:187px">C50H73N15O11</div><div class="t" style="left:925.0px;width:120px;text-align:center;top:187px">1060.5687</div><div class="t" style="left:1002.0px;width:120px;text-align:center;top:187px">[M+H]+</div><div class="t" style="left:1070.0px;width:120px;text-align:center;top:187px">1.45</div><div class="t" style="left:1134.0px;width:120px;text-align:center;top:187px">1.65</div><svg class="a" style="left:1234px;top:185px" width="13" height="13"><rect x="0.5" y="0.5" width="11" height="11" fill="#fff" stroke="#8a8a8a"/><path d="M2.5 6L5 8.5 9.5 3" fill="none" stroke="#555" stroke-width="1"/></svg><div class="t" style="left:473.0px;width:120px;text-align:center;top:205px">3</div><div class="t" style="left:518.5px;width:120px;text-align:center;top:205px">3</div><div class="t" style="left:587.0px;width:120px;text-align:center;top:205px">substrate</div><div class="t" style="left:692.0px;width:120px;text-align:center;top:205px">Angio I</div><div class="t" style="left:820.0px;width:120px;text-align:center;top:205px">C62H89N17O14</div><div class="t" style="left:925.0px;width:120px;text-align:center;top:205px">1296.6848</div><div class="t" style="left:1002.0px;width:120px;text-align:center;top:205px">[M+H]+</div><div class="t" style="left:1070.0px;width:120px;text-align:center;top:205px">1.6</div><div class="t" style="left:1134.0px;width:120px;text-align:center;top:205px">1.8</div><svg class="a" style="left:1234px;top:203px" width="13" height="13"><rect x="0.5" y="0.5" width="11" height="11" fill="#fff" stroke="#8a8a8a"/><path d="M2.5 6L5 8.5 9.5 3" fill="none" stroke="#555" stroke-width="1"/></svg><div class="thumb" style="left:508px;top:222px;width:684px;height:13px"></div><svg class="a" style="left:496px;top:224px" width="8" height="9"><path d="M5.5 1L2 4.5 5.5 8" fill="none" stroke="#333" stroke-width="1.6"/></svg><svg class="a" style="left:1264px;top:224px" width="8" height="9"><path d="M2.5 1L6 4.5 2.5 8" fill="none" stroke="#333" stroke-width="1.6"/></svg><div class="panel" style="left:489px;top:243px;width:786px;height:307px"></div><div class="tab" style="left:490px;top:244px;width:89px;height:21px"></div><div class="t" style="left:493px;top:249px;color:#222;letter-spacing:-0.4px">TIMS Frame View</div><div class="a" style="left:579px;top:264px;width:695px;height:2px;background:#cfcfcf"></div><svg class="a" style="left:860px;top:243px" width="415" height="22" viewBox="860 243 415 22"><rect x="874.0" y="244.5" width="19.5" height="18.5" fill="#cce4f7" stroke="#99ccf5" stroke-width="1"/><rect x="923.5" y="244.5" width="19.5" height="18.5" fill="#cce4f7" stroke="#99ccf5" stroke-width="1"/><rect x="944.0" y="244.5" width="20.0" height="18.5" fill="#cce4f7" stroke="#99ccf5" stroke-width="1"/><rect x="1098.0" y="244.5" width="20.5" height="18.5" fill="#cce4f7" stroke="#99ccf5" stroke-width="1"/><rect x="1168.0" y="244.5" width="21.0" height="18.5" fill="#cce4f7" stroke="#99ccf5" stroke-width="1"/><rect x="896.5" y="245.5" width="1.2" height="16" fill="#b0b0b0"/><rect x="1093" y="245.5" width="1.2" height="16" fill="#b0b0b0"/><rect x="1163.5" y="245.5" width="1.2" height="16" fill="#b0b0b0"/><rect x="878.5" y="248" width="7" height="5" rx="1" fill="none" stroke="#2a2a2a" stroke-width="1.4"/><rect x="884.5" y="254" width="6" height="6" fill="#2a2a2a" opacity="0.8"/><path d="M879 255V258H883" fill="none" stroke="#2a2a2a" stroke-width="1.2"/><text x="911.5" y="258" text-anchor="middle" font-family="Liberation Sans" font-weight="bold" font-size="9" fill="#2a2a2a">Log</text><path d="M936 248.5H940V259.5H936Z" fill="#2a2a2a"/><path d="M935 248.5A5.5 5.5 0 0 0 935 259.5Z" fill="#2a2a2a"/><path d="M936 249.5A4.5 5 0 0 1 936 258.5" fill="none" stroke="#2a2a2a" stroke-width="1.6"/><circle cx="952.5" cy="252.5" r="4.2" fill="none" stroke="#2a2a2a" stroke-width="1.5"/><path d="M955.5 255.5L959.5 259.5" stroke="#2a2a2a" stroke-width="2"/><circle cx="952.5" cy="252.5" r="0.9" fill="#2a2a2a"/><circle cx="973" cy="251.5" r="4.2" fill="none" stroke="#2a2a2a" stroke-width="1.5"/><path d="M976 254.5L980 258.5" stroke="#2a2a2a" stroke-width="2"/><path d="M971 251.5H975M973 249.5V253.5" stroke="#2a2a2a" stroke-width="1"/><rect x="967.5" y="260" width="15" height="1.4" fill="#2a2a2a"/><path d="M991 260H1001M997 260L998.5 252 1000 260" fill="none" stroke="#2a2a2a" stroke-width="1.3"/><path d="M998.5 247.5V251" stroke="#2a2a2a" stroke-width="1.3"/><path d="M990 256H995" stroke="#2a2a2a" stroke-width="1.3"/><path d="M1012 260H1023M1013 260L1014.5 252 1016 260" fill="none" stroke="#2a2a2a" stroke-width="1.3"/><path d="M1014.5 247.5V251" stroke="#2a2a2a" stroke-width="1.3"/><path d="M1017 256H1022" stroke="#2a2a2a" stroke-width="1.3"/><circle cx="1037.5" cy="251.5" r="4" fill="none" stroke="#2a2a2a" stroke-width="1.6"/><path d="M1040 255L1044 259.5M1034 258L1037 261" stroke="#2a2a2a" stroke-width="1.6"/><rect x="1032" y="258" width="2.5" height="2.5" fill="#2a2a2a"/><circle cx="1058" cy="251" r="3.8" fill="none" stroke="#a0a0a0" stroke-width="1.3"/><path d="M1053 260L1058 255 1063 260" fill="none" stroke="#a0a0a0" stroke-width="1.3"/><path d="M1074 260L1077 251 1080 260M1080 260L1083 253 1086 260M1074 248H1080M1082 251H1086" fill="none" stroke="#2a2a2a" stroke-width="1.4"/><rect x="1101" y="252" width="5" height="8" fill="#2a2a2a"/><rect x="1107" y="251" width="6" height="9" fill="#2a2a2a"/><rect x="1109" y="248.5" width="3" height="2.5" fill="#2a2a2a"/><rect x="1102" y="250" width="2.5" height="2" fill="#2a2a2a"/><circle cx="1129" cy="254.5" r="4.8" fill="none" stroke="#2a2a2a" stroke-width="1.6"/><path d="M1129 251.5V254.5L1131 256" fill="none" stroke="#2a2a2a" stroke-width="1.2"/><path d="M1125 248.5L1127 249.5M1133 248.5L1131 249.5" stroke="#2a2a2a" stroke-width="1.4"/><path d="M1143.5 259L1147 252.5 1150 256 1154 249.5" fill="none" stroke="#2a2a2a" stroke-width="1.8"/><circle cx="1143.5" cy="259" r="1.3" fill="#2a2a2a"/><circle cx="1154" cy="249.5" r="1.3" fill="#2a2a2a"/><path d="M1171 261L1186 246" stroke="#2a2a2a" stroke-width="1.6"/><circle cx="1173" cy="254" r="1.2" fill="#2a2a2a"/><circle cx="1176" cy="251" r="1.2" fill="#2a2a2a"/><circle cx="1180" cy="249" r="1.2" fill="#2a2a2a"/><path d="M1199 247H1204L1201.5 252H1205L1198.5 261 1200 254H1197Z" fill="#2a2a2a"/><path d="M1214.5 261.5V250M1214.5 254Q1215 250.5 1218.5 250.5Q1222 250.5 1222 254V261.5" fill="none" stroke="#2a2a2a" stroke-width="2.6"/><path d="M1225.5 248V262" stroke="#2a2a2a" stroke-width="1.2" stroke-dasharray="1 1"/></svg><svg class="a" style="left:1236px;top:248px" width="32" height="11"><rect x="0.8" y="0.8" width="9.5" height="3.6" rx="1.6" fill="#fafafa" stroke="#8a8a8a" stroke-width="1.2"/><rect x="21.8" y="0.8" width="9" height="9" rx="1" fill="#fafafa" stroke="#7a7a7a" stroke-width="1.3"/><rect x="22" y="1" width="8.6" height="1.8" fill="#8a8a8a"/></svg><svg class="a" style="left:489px;top:266px" width="786" height="283" viewBox="489 266 786 283"><rect x="536.5" y="273" width="150.5" height="145.5" fill="#fff"/><polyline points="540.4,273.5 540.9,274.0 540.6,274.5 541.1,275.0 541.1,275.5 540.1,276.0 540.0,276.5 541.5,277.0 540.5,277.5 540.4,278.0 541.8,278.5 540.9,279.0 541.5,279.5 540.9,280.0 541.2,280.5 540.3,281.0 541.2,281.5 541.6,282.0 541.0,282.5 541.4,283.0 541.3,283.5 540.2,284.0 541.4,284.5 541.2,285.0 540.6,285.5 540.2,286.0 541.7,286.5 541.0,287.0 541.4,287.5 541.7,288.0 541.4,288.5 541.8,289.0 540.9,289.5 541.6,290.0 541.0,290.5 541.9,291.0 541.8,291.5 540.4,292.0 540.5,292.5 540.7,293.0 542.0,293.5 541.1,294.0 541.4,294.5 540.9,295.0 541.3,295.5 541.1,296.0 541.0,296.5 541.5,297.0 541.5,297.5 542.1,298.0 541.7,298.5 542.2,299.0 542.0,299.5 542.3,300.0 541.8,300.5 540.9,301.0 542.1,301.5 542.3,302.0 542.3,302.5 541.7,303.0 542.0,303.5 541.1,304.0 542.3,304.5 541.8,305.0 541.3,305.5 541.0,306.0 542.5,306.5 542.8,307.0 541.2,307.5 542.6,308.0 542.0,308.5 541.6,309.0 542.0,309.5 543.0,310.0 543.4,310.5 542.1,311.0 543.3,311.5 542.6,312.0 544.2,312.5 544.2,313.0 546.3,313.5 548.5,314.0 551.2,314.5 557.9,315.0 565.6,315.5 577.4,316.0 593.2,316.5 608.0,317.0 622.3,317.5 631.9,318.0 634.6,318.5 628.6,319.0 617.0,319.5 603.5,320.0 586.8,320.5 574.1,321.0 563.2,321.5 554.7,322.0 550.1,322.5 547.4,323.0 546.1,323.5 545.2,324.0 544.7,324.5 544.5,325.0 544.9,325.5 544.0,326.0 543.7,326.5 544.1,327.0 543.2,327.5 543.3,328.0 544.4,328.5 543.6,329.0 543.6,329.5 542.7,330.0 543.4,330.5 543.7,331.0 542.7,331.5 543.8,332.0 543.9,332.5 542.9,333.0 543.9,333.5 543.7,334.0 544.1,334.5 543.5,335.0 544.2,335.5 544.3,336.0 543.0,336.5 543.1,337.0 544.3,337.5 544.8,338.0 543.5,338.5 543.9,339.0 544.2,339.5 543.7,340.0 543.8,340.5 543.8,341.0 543.9,341.5 544.3,342.0 543.8,342.5 544.0,343.0 544.7,343.5 543.4,344.0 544.4,344.5 544.7,345.0 543.9,345.5 543.8,346.0 544.8,346.5 543.8,347.0 543.7,347.5 544.2,348.0 544.7,348.5 543.6,349.0 544.0,349.5 544.0,350.0 544.9,350.5 544.2,351.0 544.9,351.5 543.7,352.0 544.0,352.5 544.5,353.0 545.0,353.5 544.2,354.0 543.8,354.5 543.6,355.0 544.3,355.5 543.7,356.0 544.8,356.5 544.8,357.0 543.6,357.5 543.7,358.0 544.7,358.5 544.4,359.0 544.6,359.5 543.8,360.0 543.4,360.5 543.6,361.0 544.5,361.5 543.6,362.0 543.7,362.5 543.8,363.0 543.7,363.5 543.7,364.0 544.6,364.5 543.2,365.0 542.9,365.5 544.5,366.0 544.4,366.5 544.6,367.0 543.6,367.5 544.5,368.0 544.4,368.5 543.2,369.0 544.1,369.5 544.3,370.0 544.0,370.5 543.8,371.0 543.5,371.5 543.7,372.0 543.6,372.5 543.5,373.0 544.6,373.5 544.4,374.0 545.8,374.5 545.2,375.0 548.2,375.5 550.5,376.0 555.4,376.5 562.3,377.0 572.0,377.5 583.5,378.0 595.7,378.5 609.3,379.0 617.0,379.5 620.3,380.0 617.8,380.5 608.7,381.0 596.2,381.5 583.8,382.0 571.1,382.5 560.8,383.0 553.6,383.5 550.2,384.0 546.8,384.5 545.8,385.0 544.1,385.5 543.3,386.0 543.5,386.5 543.8,387.0 542.4,387.5 543.3,388.0 543.4,388.5 543.0,389.0 542.9,389.5 541.3,390.0 542.3,390.5 542.7,391.0 541.2,391.5 541.5,392.0 541.4,392.5 541.9,393.0 541.6,393.5 541.7,394.0 542.2,394.5 540.8,395.0 540.8,395.5 540.9,396.0 540.9,396.5 540.8,397.0 542.4,397.5 542.1,398.0 540.7,398.5 541.5,399.0 541.1,399.5 541.1,400.0 541.1,400.5 541.6,401.0 541.5,401.5 541.1,402.0 540.8,402.5 541.0,403.0 540.6,403.5 541.4,404.0 541.6,404.5 541.0,405.0 540.5,405.5 540.6,406.0 541.0,406.5 541.4,407.0 541.7,407.5 540.9,408.0 541.7,408.5 541.3,409.0 541.0,409.5 540.9,410.0 541.1,410.5 541.4,411.0 540.9,411.5 541.4,412.0 541.0,412.5 540.6,413.0 541.1,413.5 541.4,414.0 540.2,414.5 540.9,415.0 540.8,415.5 541.7,416.0 541.7,416.5 540.7,417.0 541.7,417.5 541.5,418.0" fill="none" stroke="#1b4a78" stroke-width="1.3"/><path d="M536.8 272.5V418.8H687.2V272.5" fill="none" stroke="#5a5a5a" stroke-width="1.4"/><path d="M536 272.6H687" stroke="#5a5a5a" stroke-width="1.2"/><path d="M531 278.9H536.5" stroke="#333" stroke-width="1.2"/><text x="526" y="282.9" text-anchor="end" font-family="Liberation Sans" font-size="11" fill="#222" stroke="#222" stroke-width="0.15">1.9</text><path d="M531 307.2H536.5" stroke="#333" stroke-width="1.2"/><text x="526" y="311.2" text-anchor="end" font-family="Liberation Sans" font-size="11" fill="#222" stroke="#222" stroke-width="0.15">1.8</text><path d="M531 335.5H536.5" stroke="#333" stroke-width="1.2"/><text x="526" y="339.5" text-anchor="end" font-family="Liberation Sans" font-size="11" fill="#222" stroke="#222" stroke-width="0.15">1.7</text><path d="M531 363.8H536.5" stroke="#333" stroke-width="1.2"/><text x="526" y="367.8" text-anchor="end" font-family="Liberation Sans" font-size="11" fill="#222" stroke="#222" stroke-width="0.15">1.6</text><path d="M531 392.1H536.5" stroke="#333" stroke-width="1.2"/><text x="526" y="396.1" text-anchor="end" font-family="Liberation Sans" font-size="11" fill="#222" stroke="#222" stroke-width="0.15">1.5</text><path d="M533 293.1H536.5" stroke="#333" stroke-width="1.2"/><path d="M533 321.4H536.5" stroke="#333" stroke-width="1.2"/><path d="M533 349.6H536.5" stroke="#333" stroke-width="1.2"/><path d="M533 377.9H536.5" stroke="#333" stroke-width="1.2"/><path d="M533 406.2H536.5" stroke="#333" stroke-width="1.2"/><text transform="translate(505,288) rotate(-90)" text-anchor="middle" font-family="Liberation Sans" font-size="11" fill="#222" stroke="#222" stroke-width="0.15">1/K0</text><path d="M536.4 418.5V422.5" stroke="#333" stroke-width="1.3"/><path d="M552.0 418.5V421.5" stroke="#333" stroke-width="1.3"/><path d="M567.6 418.5V421.5" stroke="#333" stroke-width="1.3"/><path d="M583.2 418.5V421.5" stroke="#333" stroke-width="1.3"/><path d="M598.8 418.5V422.5" stroke="#333" stroke-width="1.3"/><path d="M614.4 418.5V421.5" stroke="#333" stroke-width="1.3"/><path d="M630.0 418.5V421.5" stroke="#333" stroke-width="1.3"/><path d="M645.6 418.5V421.5" stroke="#333" stroke-width="1.3"/><path d="M661.2 418.5V422.5" stroke="#333" stroke-width="1.3"/><path d="M676.8 418.5V421.5" stroke="#333" stroke-width="1.3"/><text x="535" y="437.5" text-anchor="middle" font-family="Liberation Sans" font-size="11" fill="#222" stroke="#222" stroke-width="0.15">0.0</text><text x="597" y="437.5" text-anchor="middle" font-family="Liberation Sans" font-size="11" fill="#222" stroke="#222" stroke-width="0.15">2.5</text><text x="536" y="455.5" font-family="Liberation Sans" font-size="11" fill="#222" stroke="#222" stroke-width="0.15" textLength="61" lengthAdjust="spacingAndGlyphs">Intensity x10</text><text x="598.5" y="450.5" font-family="Liberation Sans" font-size="10" fill="#222">3</text><rect x="512" y="446" width="13" height="12" fill="#cce4f7" stroke="#99ccf5"/><path d="M503.5 448.5L501 451.5H506ZM503.5 455.5L501 452.5H506Z" fill="#333"/><ellipse cx="518.5" cy="452" rx="3.5" ry="2.2" fill="#333"/><circle cx="518.5" cy="452" r="0.9" fill="#cce4f7"/><rect x="689.5" y="273" width="498" height="145.5" fill="#fff"/><rect x="915.5" y="333.4" width="1" height="2" fill="#5050ff" opacity="0.043"/><rect x="783.2" y="379.0" width="1" height="2" fill="#5050ff" opacity="0.046"/><rect x="738.5" y="397.3" width="1" height="1" fill="#5050ff" opacity="0.060"/><rect x="986.1" y="344.3" width="1" height="3" fill="#5050ff" opacity="0.040"/><rect x="1015.0" y="328.0" width="1" height="1" fill="#5050ff" opacity="0.021"/><rect x="721.4" y="398.7" width="1" height="2" fill="#5050ff" opacity="0.030"/><rect x="988.2" y="341.0" width="1" height="2" fill="#5050ff" opacity="0.050"/><rect x="948.4" y="339.1" width="1" height="3" fill="#5050ff" opacity="0.052"/><rect x="892.9" y="370.2" width="1" height="1" fill="#5050ff" opacity="0.048"/><rect x="1041.7" y="323.3" width="1" height="1" fill="#5050ff" opacity="0.034"/><rect x="970.2" y="350.8" width="1" height="1" fill="#5050ff" opacity="0.025"/><rect x="1110.2" y="289.2" width="1" height="1" fill="#5050ff" opacity="0.062"/><rect x="797.5" y="402.9" width="1" height="1" fill="#5050ff" opacity="0.066"/><rect x="924.2" y="365.5" width="1" height="2" fill="#5050ff" opacity="0.024"/><rect x="1076.6" y="316.8" width="1" height="1" fill="#5050ff" opacity="0.033"/><rect x="845.7" y="384.5" width="1" height="2" fill="#5050ff" opacity="0.066"/><rect x="813.7" y="382.0" width="1" height="1" fill="#5050ff" opacity="0.025"/><rect x="921.7" y="338.5" width="1" height="2" fill="#5050ff" opacity="0.029"/><rect x="1178.7" y="295.1" width="1" height="3" fill="#5050ff" opacity="0.058"/><rect x="1010.0" y="342.6" width="1" height="2" fill="#5050ff" opacity="0.031"/><rect x="1119.0" y="315.7" width="1" height="2" fill="#5050ff" opacity="0.069"/><rect x="1185.0" y="299.3" width="1" height="1" fill="#5050ff" opacity="0.070"/><rect x="712.8" y="405.9" width="1" height="3" fill="#5050ff" opacity="0.027"/><rect x="819.6" y="380.9" width="1" height="1" fill="#5050ff" opacity="0.035"/><rect x="728.7" y="391.5" width="1" height="2" fill="#5050ff" opacity="0.030"/><rect x="699.7" y="397.8" width="1" height="3" fill="#5050ff" opacity="0.026"/><rect x="1103.2" y="323.1" width="1" height="3" fill="#5050ff" opacity="0.027"/><rect x="782.3" y="402.1" width="1" height="2" fill="#5050ff" opacity="0.061"/><rect x="1050.3" y="344.2" width="1" height="2" fill="#5050ff" opacity="0.028"/><rect x="1031.4" y="319.3" width="1" height="1" fill="#5050ff" opacity="0.024"/><rect x="743.3" y="405.9" width="1" height="2" fill="#5050ff" opacity="0.022"/><rect x="809.8" y="379.5" width="1" height="3" fill="#5050ff" opacity="0.061"/><rect x="837.0" y="367.2" width="1" height="1" fill="#5050ff" opacity="0.029"/><rect x="754.4" y="379.2" width="1" height="1" fill="#5050ff" opacity="0.051"/><rect x="830.4" y="379.0" width="1" height="2" fill="#5050ff" opacity="0.066"/><rect x="1062.0" y="331.9" width="1" height="1" fill="#5050ff" opacity="0.032"/><rect x="779.1" y="394.0" width="1" height="2" fill="#5050ff" opacity="0.038"/><rect x="737.5" y="406.9" width="1" height="2" fill="#5050ff" opacity="0.037"/><rect x="983.4" y="349.6" width="1" height="3" fill="#5050ff" opacity="0.066"/><rect x="1141.6" y="294.0" width="1" height="1" fill="#5050ff" opacity="0.021"/><rect x="930.2" y="326.2" width="1" height="2" fill="#5050ff" opacity="0.057"/><rect x="759.5" y="404.7" width="1" height="1" fill="#5050ff" opacity="0.038"/><rect x="1136.7" y="309.1" width="1" height="2" fill="#5050ff" opacity="0.057"/><rect x="1083.9" y="325.2" width="1" height="1" fill="#5050ff" opacity="0.054"/><rect x="1122.3" y="302.0" width="1" height="1" fill="#5050ff" opacity="0.041"/><rect x="1118.6" y="294.3" width="1" height="1" fill="#5050ff" opacity="0.039"/><rect x="992.8" y="331.3" width="1" height="1" fill="#5050ff" opacity="0.024"/><rect x="1182.7" y="305.7" width="1" height="3" fill="#5050ff" opacity="0.039"/><rect x="909.6" y="345.8" width="1" height="1" fill="#5050ff" opacity="0.062"/><rect x="948.2" y="339.4" width="1" height="1" fill="#5050ff" opacity="0.024"/><rect x="805.7" y="382.0" width="1" height="3" fill="#5050ff" opacity="0.055"/><rect x="1077.3" y="311.2" width="1" height="2" fill="#5050ff" opacity="0.065"/><rect x="840.7" y="363.8" width="1" height="2" fill="#5050ff" opacity="0.054"/><rect x="948.1" y="349.1" width="1" height="3" fill="#5050ff" opacity="0.067"/><rect x="1132.5" y="294.7" width="1" height="2" fill="#5050ff" opacity="0.036"/><rect x="790.1" y="368.5" width="1" height="2" fill="#5050ff" opacity="0.066"/><rect x="881.9" y="373.0" width="1" height="2" fill="#5050ff" opacity="0.049"/><rect x="795.7" y="392.0" width="1" height="1" fill="#5050ff" opacity="0.065"/><rect x="1043.3" y="333.7" width="1" height="2" fill="#5050ff" opacity="0.068"/><rect x="1098.0" y="322.4" width="1" height="3" fill="#5050ff" opacity="0.066"/><rect x="881.0" y="372.9" width="1" height="2" fill="#5050ff" opacity="0.046"/><rect x="1045.8" y="333.9" width="1" height="1" fill="#5050ff" opacity="0.036"/><rect x="829.4" y="364.3" width="1" height="2" fill="#5050ff" opacity="0.050"/><rect x="973.9" y="335.6" width="1" height="2" fill="#5050ff" opacity="0.021"/><rect x="892.2" y="380.3" width="1" height="2" fill="#5050ff" opacity="0.029"/><rect x="809.3" y="384.1" width="1" height="3" fill="#5050ff" opacity="0.051"/><rect x="745.9" y="399.8" width="1" height="2" fill="#5050ff" opacity="0.047"/><rect x="1165.5" y="294.0" width="1" height="2" fill="#5050ff" opacity="0.044"/><rect x="1044.8" y="319.0" width="1" height="1" fill="#5050ff" opacity="0.058"/><rect x="780.5" y="387.4" width="1" height="2" fill="#5050ff" opacity="0.055"/><rect x="886.4" y="373.6" width="1" height="2" fill="#5050ff" opacity="0.060"/><rect x="735.1" y="415.8" width="1" height="3" fill="#5050ff" opacity="0.026"/><rect x="789.3" y="379.5" width="1" height="1" fill="#5050ff" opacity="0.064"/><rect x="878.1" y="345.0" width="1" height="2" fill="#5050ff" opacity="0.060"/><rect x="921.1" y="345.8" width="1" height="2" fill="#5050ff" opacity="0.053"/><rect x="740.9" y="411.4" width="1" height="1" fill="#5050ff" opacity="0.066"/><rect x="797.4" y="370.2" width="1" height="1" fill="#5050ff" opacity="0.065"/><rect x="1174.8" y="275.7" width="1" height="1" fill="#5050ff" opacity="0.036"/><rect x="864.2" y="364.4" width="1" height="3" fill="#5050ff" opacity="0.024"/><rect x="861.0" y="361.9" width="1" height="2" fill="#5050ff" opacity="0.066"/><rect x="1091.7" y="318.7" width="1" height="1" fill="#5050ff" opacity="0.023"/><rect x="777.4" y="379.7" width="1" height="2" fill="#5050ff" opacity="0.027"/><rect x="1185.9" y="308.7" width="1" height="3" fill="#5050ff" opacity="0.065"/><rect x="734.5" y="401.1" width="1" height="2" fill="#5050ff" opacity="0.031"/><rect x="1102.6" y="305.8" width="1" height="2" fill="#5050ff" opacity="0.046"/><rect x="846.0" y="370.7" width="1" height="2" fill="#5050ff" opacity="0.039"/><rect x="842.4" y="382.8" width="1" height="3" fill="#5050ff" opacity="0.034"/><rect x="791.3" y="397.0" width="1" height="1" fill="#5050ff" opacity="0.047"/><rect x="991.0" y="367.2" width="1" height="3" fill="#5050ff" opacity="0.046"/><rect x="960.7" y="350.8" width="1" height="1" fill="#5050ff" opacity="0.069"/><rect x="934.6" y="350.6" width="1" height="3" fill="#5050ff" opacity="0.047"/><rect x="1146.9" y="297.6" width="1" height="3" fill="#5050ff" opacity="0.060"/><rect x="825.0" y="372.6" width="1" height="3" fill="#5050ff" opacity="0.042"/><rect x="951.3" y="349.0" width="1" height="3" fill="#5050ff" opacity="0.025"/><rect x="997.2" y="342.3" width="1" height="1" fill="#5050ff" opacity="0.059"/><rect x="709.6" y="403.2" width="1" height="1" fill="#5050ff" opacity="0.028"/><rect x="1031.4" y="324.4" width="1" height="1" fill="#5050ff" opacity="0.051"/><rect x="938.8" y="360.3" width="1" height="2" fill="#5050ff" opacity="0.049"/><rect x="1046.5" y="318.5" width="1" height="3" fill="#5050ff" opacity="0.021"/><rect x="1099.6" y="291.1" width="1" height="2" fill="#5050ff" opacity="0.051"/><rect x="1118.7" y="300.5" width="1" height="2" fill="#5050ff" opacity="0.031"/><rect x="806.9" y="380.9" width="1" height="2" fill="#5050ff" opacity="0.057"/><rect x="1137.9" y="299.6" width="1" height="2" fill="#5050ff" opacity="0.066"/><rect x="1076.5" y="326.9" width="1" height="1" fill="#5050ff" opacity="0.030"/><rect x="758.2" y="395.4" width="1" height="1" fill="#5050ff" opacity="0.033"/><rect x="906.8" y="376.4" width="1" height="2" fill="#5050ff" opacity="0.067"/><rect x="791.1" y="372.7" width="1" height="2" fill="#5050ff" opacity="0.025"/><rect x="1142.2" y="288.3" width="1" height="1" fill="#5050ff" opacity="0.068"/><rect x="1040.1" y="320.2" width="1" height="2" fill="#5050ff" opacity="0.070"/><rect x="1088.6" y="307.7" width="1" height="1" fill="#5050ff" opacity="0.044"/><rect x="710.5" y="393.0" width="1" height="2" fill="#5050ff" opacity="0.048"/><rect x="785.6" y="383.4" width="1" height="2" fill="#5050ff" opacity="0.026"/><rect x="1107.1" y="336.0" width="1" height="1" fill="#5050ff" opacity="0.025"/><rect x="758.4" y="392.6" width="1" height="1" fill="#5050ff" opacity="0.054"/><rect x="1069.8" y="314.0" width="1" height="3" fill="#5050ff" opacity="0.046"/><rect x="795.8" y="396.1" width="1" height="1" fill="#5050ff" opacity="0.039"/><rect x="1109.1" y="315.4" width="1" height="3" fill="#5050ff" opacity="0.057"/><rect x="1147.4" y="312.2" width="1" height="1" fill="#5050ff" opacity="0.050"/><rect x="945.2" y="372.7" width="1" height="3" fill="#5050ff" opacity="0.060"/><rect x="973.4" y="345.0" width="1" height="2" fill="#5050ff" opacity="0.030"/><rect x="1089.6" y="313.8" width="1" height="2" fill="#5050ff" opacity="0.057"/><rect x="1094.4" y="338.1" width="1" height="2" fill="#5050ff" opacity="0.040"/><rect x="1126.6" y="299.8" width="1" height="3" fill="#5050ff" opacity="0.058"/><rect x="794.2" y="367.9" width="1" height="2" fill="#5050ff" opacity="0.029"/><rect x="841.0" y="393.0" width="1" height="1" fill="#5050ff" opacity="0.070"/><rect x="806.7" y="396.2" width="1" height="2" fill="#5050ff" opacity="0.067"/><rect x="858.9" y="362.5" width="1" height="3" fill="#5050ff" opacity="0.047"/><rect x="946.3" y="337.2" width="1" height="2" fill="#5050ff" opacity="0.045"/><rect x="1038.4" y="329.5" width="1" height="1" fill="#5050ff" opacity="0.021"/><rect x="1057.0" y="292.1" width="1" height="3" fill="#5050ff" opacity="0.033"/><rect x="941.4" y="351.6" width="1" height="2" fill="#5050ff" opacity="0.021"/><rect x="815.9" y="364.5" width="1" height="3" fill="#5050ff" opacity="0.065"/><rect x="1007.2" y="319.9" width="1" height="1" fill="#5050ff" opacity="0.060"/><rect x="963.4" y="331.7" width="1" height="2" fill="#5050ff" opacity="0.039"/><rect x="882.6" y="340.6" width="1" height="3" fill="#5050ff" opacity="0.069"/><rect x="959.7" y="336.5" width="1" height="2" fill="#5050ff" opacity="0.045"/><rect x="952.2" y="341.2" width="1" height="2" fill="#5050ff" opacity="0.050"/><rect x="954.0" y="338.7" width="1" height="2" fill="#5050ff" opacity="0.066"/><rect x="705.3" y="407.7" width="1" height="1" fill="#5050ff" opacity="0.059"/><rect x="1004.7" y="321.3" width="1" height="2" fill="#5050ff" opacity="0.023"/><rect x="1061.7" y="330.7" width="1" height="2" fill="#5050ff" opacity="0.023"/><rect x="728.3" y="411.0" width="1" height="2" fill="#5050ff" opacity="0.044"/><rect x="714.4" y="398.1" width="1" height="3" fill="#5050ff" opacity="0.025"/><rect x="763.3" y="401.0" width="1" height="1" fill="#5050ff" opacity="0.055"/><rect x="1000.4" y="334.3" width="1" height="2" fill="#5050ff" opacity="0.043"/><rect x="1117.4" y="304.4" width="1" height="2" fill="#5050ff" opacity="0.038"/><rect x="1021.9" y="336.2" width="1" height="2" fill="#5050ff" opacity="0.043"/><rect x="1008.0" y="330.2" width="1" height="2" fill="#5050ff" opacity="0.057"/><rect x="1162.6" y="288.1" width="1" height="2" fill="#5050ff" opacity="0.057"/><rect x="929.7" y="343.8" width="1" height="2" fill="#5050ff" opacity="0.045"/><rect x="827.7" y="377.4" width="1" height="2" fill="#5050ff" opacity="0.050"/><rect x="1004.8" y="335.4" width="1" height="2" fill="#5050ff" opacity="0.032"/><rect x="1126.1" y="299.2" width="1" height="1" fill="#5050ff" opacity="0.022"/><rect x="696.7" y="408.7" width="1" height="2" fill="#5050ff" opacity="0.022"/><rect x="959.6" y="348.6" width="1" height="1" fill="#5050ff" opacity="0.024"/><rect x="1143.0" y="306.6" width="1" height="3" fill="#5050ff" opacity="0.069"/><rect x="928.4" y="360.3" width="1" height="2" fill="#5050ff" opacity="0.031"/><rect x="936.2" y="366.5" width="1" height="3" fill="#5050ff" opacity="0.060"/><rect x="1091.7" y="331.0" width="1" height="2" fill="#5050ff" opacity="0.051"/><rect x="911.5" y="357.4" width="1" height="2" fill="#5050ff" opacity="0.028"/><rect x="1014.9" y="321.9" width="1" height="2" fill="#5050ff" opacity="0.069"/><rect x="835.7" y="376.8" width="1" height="2" fill="#5050ff" opacity="0.029"/><rect x="978.8" y="320.9" width="1" height="2" fill="#5050ff" opacity="0.043"/><rect x="730.8" y="413.0" width="1" height="3" fill="#5050ff" opacity="0.044"/><rect x="839.6" y="381.8" width="1" height="1" fill="#5050ff" opacity="0.059"/><rect x="845.2" y="386.1" width="1" height="3" fill="#5050ff" opacity="0.055"/><rect x="1050.1" y="316.5" width="1" height="2" fill="#5050ff" opacity="0.055"/><rect x="1127.6" y="309.1" width="1" height="1" fill="#5050ff" opacity="0.036"/><rect x="851.3" y="387.7" width="1" height="2" fill="#5050ff" opacity="0.042"/><rect x="908.4" y="361.4" width="1" height="3" fill="#5050ff" opacity="0.036"/><rect x="1170.1" y="286.9" width="1" height="2" fill="#5050ff" opacity="0.056"/><rect x="733.6" y="401.2" width="1" height="3" fill="#5050ff" opacity="0.054"/><rect x="1085.3" y="313.9" width="1" height="2" fill="#5050ff" opacity="0.057"/><rect x="1085.8" y="295.7" width="1" height="2" fill="#5050ff" opacity="0.048"/><rect x="736.3" y="394.1" width="1" height="2" fill="#5050ff" opacity="0.043"/><rect x="1093.1" y="314.9" width="1" height="2" fill="#5050ff" opacity="0.028"/><rect x="1169.4" y="299.7" width="1" height="3" fill="#5050ff" opacity="0.053"/><rect x="723.6" y="383.9" width="1" height="1" fill="#5050ff" opacity="0.024"/><rect x="827.2" y="372.1" width="1" height="2" fill="#5050ff" opacity="0.025"/><rect x="733.8" y="395.9" width="1" height="3" fill="#5050ff" opacity="0.057"/><rect x="813.3" y="376.5" width="1" height="2" fill="#5050ff" opacity="0.031"/><rect x="1069.8" y="311.9" width="1" height="2" fill="#5050ff" opacity="0.068"/><rect x="935.9" y="357.9" width="1" height="1" fill="#5050ff" opacity="0.047"/><rect x="1041.8" y="336.2" width="1" height="2" fill="#5050ff" opacity="0.061"/><rect x="1113.6" y="303.5" width="1" height="1" fill="#5050ff" opacity="0.060"/><rect x="1131.0" y="320.3" width="1" height="1" fill="#5050ff" opacity="0.046"/><rect x="1088.3" y="311.2" width="1" height="3" fill="#5050ff" opacity="0.041"/><rect x="1144.3" y="302.1" width="1" height="2" fill="#5050ff" opacity="0.052"/><rect x="850.5" y="378.7" width="1" height="2" fill="#5050ff" opacity="0.039"/><rect x="827.4" y="387.0" width="1" height="2" fill="#5050ff" opacity="0.057"/><rect x="1012.1" y="325.4" width="1" height="2" fill="#5050ff" opacity="0.059"/><rect x="1142.6" y="302.4" width="1" height="1" fill="#5050ff" opacity="0.044"/><rect x="846.4" y="371.1" width="1" height="2" fill="#5050ff" opacity="0.030"/><rect x="799.4" y="386.0" width="1" height="2" fill="#5050ff" opacity="0.050"/><rect x="910.3" y="375.3" width="1" height="3" fill="#5050ff" opacity="0.065"/><rect x="777.2" y="390.1" width="1" height="3" fill="#5050ff" opacity="0.047"/><rect x="1113.6" y="299.8" width="1" height="3" fill="#5050ff" opacity="0.044"/><rect x="1143.6" y="294.5" width="1" height="3" fill="#5050ff" opacity="0.068"/><rect x="1118.1" y="319.8" width="1" height="2" fill="#5050ff" opacity="0.040"/><rect x="1160.1" y="301.6" width="1" height="2" fill="#5050ff" opacity="0.046"/><rect x="1081.1" y="306.8" width="1" height="2" fill="#5050ff" opacity="0.023"/><rect x="1132.7" y="321.5" width="1" height="2" fill="#5050ff" opacity="0.043"/><rect x="1044.4" y="308.8" width="1" height="2" fill="#5050ff" opacity="0.050"/><rect x="897.4" y="361.8" width="1" height="2" fill="#5050ff" opacity="0.065"/><rect x="1006.7" y="328.7" width="1" height="2" fill="#5050ff" opacity="0.070"/><rect x="946.9" y="362.7" width="1" height="2" fill="#5050ff" opacity="0.029"/><rect x="1097.8" y="317.8" width="1" height="2" fill="#5050ff" opacity="0.062"/><rect x="732.7" y="398.1" width="1" height="3" fill="#5050ff" opacity="0.025"/><rect x="1034.7" y="345.5" width="1" height="2" fill="#5050ff" opacity="0.024"/><rect x="701.4" y="410.5" width="1" height="3" fill="#5050ff" opacity="0.054"/><rect x="795.0" y="392.1" width="1" height="3" fill="#5050ff" opacity="0.047"/><rect x="769.8" y="396.1" width="1" height="1" fill="#5050ff" opacity="0.036"/><rect x="966.9" y="336.1" width="1" height="1" fill="#5050ff" opacity="0.070"/><rect x="869.7" y="365.6" width="1" height="3" fill="#5050ff" opacity="0.040"/><rect x="1060.8" y="317.1" width="1" height="1" fill="#5050ff" opacity="0.059"/><rect x="1015.0" y="343.5" width="1" height="2" fill="#5050ff" opacity="0.056"/><rect x="837.0" y="376.2" width="1" height="1" fill="#5050ff" opacity="0.026"/><rect x="1114.9" y="318.8" width="1" height="2" fill="#5050ff" opacity="0.065"/><rect x="835.5" y="361.2" width="1" height="2" fill="#5050ff" opacity="0.039"/><rect x="1163.3" y="297.9" width="1" height="2" fill="#5050ff" opacity="0.024"/><rect x="790.8" y="372.4" width="1" height="2" fill="#5050ff" opacity="0.057"/><rect x="845.0" y="371.6" width="1" height="3" fill="#5050ff" opacity="0.052"/><rect x="1100.5" y="324.7" width="1" height="2" fill="#5050ff" opacity="0.025"/><rect x="999.1" y="347.2" width="1" height="2" fill="#5050ff" opacity="0.029"/><rect x="890.7" y="373.9" width="1" height="1" fill="#5050ff" opacity="0.062"/><rect x="906.3" y="365.4" width="1" height="2" fill="#5050ff" opacity="0.059"/><rect x="1146.8" y="289.6" width="1" height="2" fill="#5050ff" opacity="0.052"/><rect x="1097.6" y="318.9" width="1" height="2" fill="#5050ff" opacity="0.039"/><rect x="1147.1" y="288.6" width="1" height="2" fill="#5050ff" opacity="0.051"/><rect x="1177.1" y="281.8" width="1" height="1" fill="#5050ff" opacity="0.059"/><rect x="820.8" y="382.8" width="1" height="3" fill="#5050ff" opacity="0.042"/><rect x="793.2" y="394.6" width="1" height="2" fill="#5050ff" opacity="0.037"/><rect x="1099.6" y="307.7" width="1" height="2" fill="#5050ff" opacity="0.058"/><rect x="962.8" y="341.1" width="1" height="2" fill="#5050ff" opacity="0.038"/><rect x="975.6" y="350.4" width="1" height="2" fill="#5050ff" opacity="0.070"/><rect x="972.3" y="367.3" width="1" height="2" fill="#5050ff" opacity="0.021"/><rect x="1075.6" y="326.6" width="1" height="2" fill="#5050ff" opacity="0.041"/><rect x="854.6" y="380.6" width="1" height="2" fill="#5050ff" opacity="0.066"/><rect x="823.5" y="387.5" width="1" height="2" fill="#5050ff" opacity="0.056"/><rect x="1138.6" y="295.2" width="1" height="1" fill="#5050ff" opacity="0.047"/><rect x="968.8" y="341.7" width="1" height="2" fill="#5050ff" opacity="0.070"/><rect x="989.1" y="363.0" width="1" height="1" fill="#5050ff" opacity="0.026"/><rect x="834.6" y="382.5" width="1" height="2" fill="#5050ff" opacity="0.049"/><rect x="783.7" y="383.2" width="1" height="1" fill="#5050ff" opacity="0.047"/><rect x="916.4" y="340.6" width="1" height="2" fill="#5050ff" opacity="0.066"/><rect x="844.0" y="384.7" width="1" height="3" fill="#5050ff" opacity="0.054"/><rect x="995.9" y="325.5" width="1" height="3" fill="#5050ff" opacity="0.028"/><rect x="923.2" y="340.4" width="1" height="3" fill="#5050ff" opacity="0.027"/><rect x="750.4" y="387.8" width="1" height="2" fill="#5050ff" opacity="0.027"/><rect x="972.6" y="348.5" width="1" height="1" fill="#5050ff" opacity="0.037"/><rect x="1048.5" y="327.5" width="1" height="1" fill="#5050ff" opacity="0.045"/><rect x="924.1" y="343.7" width="1" height="3" fill="#5050ff" opacity="0.041"/><rect x="1063.3" y="285.9" width="1" height="3" fill="#5050ff" opacity="0.062"/><rect x="1099.6" y="315.8" width="1" height="1" fill="#5050ff" opacity="0.026"/><rect x="1139.2" y="289.9" width="1" height="1" fill="#5050ff" opacity="0.042"/><rect x="850.4" y="370.0" width="1" height="3" fill="#5050ff" opacity="0.023"/><rect x="1053.6" y="308.6" width="1" height="1" fill="#5050ff" opacity="0.035"/><rect x="812.7" y="370.6" width="1" height="2" fill="#5050ff" opacity="0.062"/><rect x="940.3" y="347.8" width="1" height="2" fill="#5050ff" opacity="0.055"/><rect x="961.2" y="347.9" width="1" height="2" fill="#5050ff" opacity="0.053"/><rect x="1126.6" y="324.0" width="1" height="2" fill="#5050ff" opacity="0.064"/><rect x="1120.0" y="307.7" width="1" height="2" fill="#5050ff" opacity="0.041"/><rect x="801.6" y="383.5" width="1" height="1" fill="#5050ff" opacity="0.065"/><rect x="948.7" y="334.5" width="1" height="3" fill="#5050ff" opacity="0.026"/><rect x="692.3" y="410.3" width="1" height="1" fill="#5050ff" opacity="0.036"/><rect x="909.7" y="367.3" width="1" height="3" fill="#5050ff" opacity="0.043"/><rect x="761.8" y="390.5" width="1" height="3" fill="#5050ff" opacity="0.035"/><rect x="1135.9" y="296.5" width="1" height="3" fill="#5050ff" opacity="0.035"/><rect x="762.8" y="396.3" width="1" height="2" fill="#5050ff" opacity="0.064"/><rect x="837.9" y="356.4" width="1" height="1" fill="#5050ff" opacity="0.066"/><rect x="788.6" y="392.3" width="1" height="2" fill="#5050ff" opacity="0.044"/><rect x="1005.9" y="326.3" width="1" height="2" fill="#5050ff" opacity="0.055"/><rect x="955.3" y="349.4" width="1" height="1" fill="#5050ff" opacity="0.069"/><rect x="843.2" y="400.7" width="1" height="2" fill="#5050ff" opacity="0.061"/><rect x="1121.6" y="306.0" width="1" height="3" fill="#5050ff" opacity="0.055"/><rect x="897.1" y="355.2" width="1" height="2" fill="#5050ff" opacity="0.028"/><rect x="751.6" y="392.6" width="1" height="2" fill="#5050ff" opacity="0.056"/><rect x="1082.5" y="308.6" width="1" height="1" fill="#5050ff" opacity="0.039"/><rect x="983.4" y="341.6" width="1" height="2" fill="#5050ff" opacity="0.066"/><rect x="828.8" y="386.6" width="1" height="1" fill="#5050ff" opacity="0.052"/><rect x="920.6" y="377.2" width="1" height="1" fill="#5050ff" opacity="0.024"/><rect x="981.8" y="329.6" width="1" height="2" fill="#5050ff" opacity="0.048"/><rect x="832.9" y="373.7" width="1" height="2" fill="#5050ff" opacity="0.058"/><rect x="780.6" y="388.6" width="1" height="2" fill="#5050ff" opacity="0.060"/><rect x="1179.9" y="290.8" width="1" height="3" fill="#5050ff" opacity="0.022"/><rect x="1144.7" y="301.2" width="1" height="1" fill="#5050ff" opacity="0.065"/><rect x="780.9" y="388.4" width="1" height="2" fill="#5050ff" opacity="0.048"/><rect x="850.5" y="369.4" width="1" height="2" fill="#5050ff" opacity="0.035"/><rect x="985.4" y="340.2" width="1" height="1" fill="#5050ff" opacity="0.059"/><rect x="992.4" y="339.3" width="1" height="2" fill="#5050ff" opacity="0.059"/><rect x="820.3" y="391.2" width="1" height="3" fill="#5050ff" opacity="0.047"/><rect x="821.1" y="387.8" width="1" height="3" fill="#5050ff" opacity="0.023"/><rect x="1123.2" y="334.9" width="1" height="2" fill="#5050ff" opacity="0.029"/><rect x="992.5" y="322.8" width="1" height="2" fill="#5050ff" opacity="0.045"/><rect x="1115.2" y="296.4" width="1" height="1" fill="#5050ff" opacity="0.022"/><rect x="1140.2" y="290.4" width="1" height="2" fill="#5050ff" opacity="0.060"/><rect x="999.9" y="330.7" width="1" height="3" fill="#5050ff" opacity="0.023"/><rect x="712.9" y="399.0" width="1" height="2" fill="#5050ff" opacity="0.046"/><rect x="1070.1" y="333.8" width="1" height="2" fill="#5050ff" opacity="0.045"/><rect x="879.2" y="365.4" width="1" height="3" fill="#5050ff" opacity="0.053"/><rect x="722.2" y="415.7" width="1" height="2" fill="#5050ff" opacity="0.041"/><rect x="1037.1" y="319.6" width="1" height="2" fill="#5050ff" opacity="0.026"/><rect x="763.4" y="366.5" width="1" height="1" fill="#5050ff" opacity="0.043"/><rect x="693.7" y="398.3" width="1" height="2" fill="#5050ff" opacity="0.025"/><rect x="925.1" y="361.5" width="1" height="1" fill="#5050ff" opacity="0.067"/><rect x="1027.8" y="323.6" width="1" height="2" fill="#5050ff" opacity="0.051"/><rect x="817.1" y="350.7" width="1" height="2" fill="#5050ff" opacity="0.048"/><rect x="898.7" y="367.4" width="1" height="2" fill="#5050ff" opacity="0.035"/><rect x="711.6" y="409.4" width="1" height="1" fill="#5050ff" opacity="0.040"/><rect x="1056.3" y="300.9" width="1" height="2" fill="#5050ff" opacity="0.064"/><rect x="920.5" y="345.4" width="1" height="2" fill="#5050ff" opacity="0.040"/><rect x="880.3" y="366.5" width="1" height="2" fill="#5050ff" opacity="0.037"/><rect x="1083.9" y="308.9" width="1" height="3" fill="#5050ff" opacity="0.060"/><rect x="792.6" y="388.7" width="1" height="3" fill="#5050ff" opacity="0.035"/><rect x="934.2" y="364.2" width="1" height="2" fill="#5050ff" opacity="0.051"/><rect x="1118.2" y="311.2" width="1" height="2" fill="#5050ff" opacity="0.024"/><rect x="871.2" y="377.6" width="1" height="1" fill="#5050ff" opacity="0.034"/><rect x="948.3" y="348.1" width="1" height="2" fill="#5050ff" opacity="0.048"/><rect x="824.7" y="365.1" width="1" height="2" fill="#5050ff" opacity="0.038"/><rect x="1051.7" y="325.1" width="1" height="1" fill="#5050ff" opacity="0.032"/><rect x="702.1" y="401.7" width="1" height="3" fill="#5050ff" opacity="0.036"/><rect x="914.3" y="363.5" width="1" height="1" fill="#5050ff" opacity="0.033"/><rect x="841.3" y="365.8" width="1" height="3" fill="#5050ff" opacity="0.050"/><rect x="712.2" y="413.8" width="1" height="2" fill="#5050ff" opacity="0.022"/><rect x="894.9" y="373.6" width="1" height="2" fill="#5050ff" opacity="0.044"/><rect x="947.4" y="339.9" width="1" height="3" fill="#5050ff" opacity="0.043"/><rect x="764.7" y="389.8" width="1" height="2" fill="#5050ff" opacity="0.030"/><rect x="956.3" y="341.2" width="1" height="2" fill="#5050ff" opacity="0.046"/><rect x="803.7" y="385.2" width="1" height="2" fill="#5050ff" opacity="0.035"/><rect x="994.0" y="351.4" width="1" height="3" fill="#5050ff" opacity="0.057"/><rect x="971.6" y="359.7" width="1" height="2" fill="#5050ff" opacity="0.060"/><rect x="1018.2" y="351.7" width="1" height="2" fill="#5050ff" opacity="0.048"/><rect x="1021.3" y="340.1" width="1" height="2" fill="#5050ff" opacity="0.068"/><rect x="807.9" y="379.1" width="1" height="3" fill="#5050ff" opacity="0.041"/><rect x="935.5" y="348.3" width="1" height="2" fill="#5050ff" opacity="0.044"/><rect x="832.6" y="374.2" width="1" height="2" fill="#5050ff" opacity="0.066"/><rect x="926.8" y="346.5" width="1" height="2" fill="#5050ff" opacity="0.028"/><rect x="949.1" y="347.5" width="1" height="3" fill="#5050ff" opacity="0.060"/><rect x="979.8" y="317.3" width="1" height="2" fill="#5050ff" opacity="0.055"/><rect x="1037.9" y="338.2" width="1" height="1" fill="#5050ff" opacity="0.038"/><rect x="1142.7" y="303.9" width="1" height="3" fill="#5050ff" opacity="0.034"/><rect x="936.8" y="340.9" width="1" height="2" fill="#5050ff" opacity="0.036"/><rect x="727.7" y="395.1" width="1" height="2" fill="#5050ff" opacity="0.022"/><rect x="1132.5" y="296.9" width="1" height="2" fill="#5050ff" opacity="0.053"/><rect x="1009.3" y="330.8" width="1" height="2" fill="#5050ff" opacity="0.039"/><rect x="1163.6" y="288.0" width="1" height="1" fill="#5050ff" opacity="0.067"/><rect x="1001.9" y="346.9" width="1" height="3" fill="#5050ff" opacity="0.051"/><rect x="994.7" y="341.5" width="1" height="3" fill="#5050ff" opacity="0.043"/><rect x="880.6" y="366.5" width="1" height="1" fill="#5050ff" opacity="0.065"/><rect x="1089.1" y="311.6" width="1" height="3" fill="#5050ff" opacity="0.045"/><rect x="1174.6" y="286.7" width="1" height="2" fill="#5050ff" opacity="0.027"/><rect x="825.3" y="377.8" width="1" height="3" fill="#5050ff" opacity="0.046"/><rect x="962.2" y="356.4" width="1" height="2" fill="#5050ff" opacity="0.024"/><rect x="822.4" y="363.6" width="1" height="1" fill="#5050ff" opacity="0.025"/><rect x="846.8" y="369.4" width="1" height="2" fill="#5050ff" opacity="0.054"/><rect x="1099.2" y="296.1" width="1" height="3" fill="#5050ff" opacity="0.028"/><rect x="1089.7" y="311.9" width="1" height="3" fill="#5050ff" opacity="0.038"/><rect x="809.1" y="393.0" width="1" height="2" fill="#5050ff" opacity="0.032"/><rect x="1040.9" y="342.3" width="1" height="1" fill="#5050ff" opacity="0.064"/><rect x="1096.0" y="304.6" width="1" height="2" fill="#5050ff" opacity="0.064"/><rect x="747.7" y="378.6" width="1" height="2" fill="#5050ff" opacity="0.044"/><rect x="999.1" y="342.3" width="1" height="3" fill="#5050ff" opacity="0.041"/><rect x="718.4" y="403.4" width="1" height="3" fill="#5050ff" opacity="0.060"/><rect x="817.0" y="393.2" width="1" height="2" fill="#5050ff" opacity="0.052"/><rect x="1045.6" y="320.9" width="1" height="2" fill="#5050ff" opacity="0.058"/><rect x="972.3" y="351.8" width="1" height="2" fill="#5050ff" opacity="0.041"/><rect x="999.8" y="346.1" width="1" height="3" fill="#5050ff" opacity="0.026"/><rect x="998.9" y="319.4" width="1" height="2" fill="#5050ff" opacity="0.035"/><rect x="1173.1" y="278.4" width="1" height="2" fill="#5050ff" opacity="0.060"/><rect x="824.4" y="381.4" width="1" height="2" fill="#5050ff" opacity="0.034"/><rect x="1003.9" y="315.1" width="1" height="1" fill="#5050ff" opacity="0.069"/><rect x="769.7" y="406.9" width="1" height="1" fill="#5050ff" opacity="0.070"/><rect x="787.7" y="378.6" width="1" height="3" fill="#5050ff" opacity="0.060"/><rect x="855.0" y="381.8" width="1" height="3" fill="#5050ff" opacity="0.021"/><rect x="776.6" y="400.6" width="1" height="2" fill="#5050ff" opacity="0.063"/><rect x="802.5" y="388.5" width="1" height="3" fill="#5050ff" opacity="0.056"/><rect x="1070.1" y="330.5" width="1" height="2" fill="#5050ff" opacity="0.055"/><rect x="1087.3" y="314.3" width="1" height="2" fill="#5050ff" opacity="0.027"/><rect x="1103.9" y="289.6" width="1" height="3" fill="#5050ff" opacity="0.064"/><rect x="751.5" y="387.7" width="1" height="1" fill="#5050ff" opacity="0.036"/><rect x="825.5" y="370.1" width="1" height="2" fill="#5050ff" opacity="0.040"/><rect x="804.4" y="379.5" width="1" height="2" fill="#5050ff" opacity="0.044"/><rect x="964.4" y="339.0" width="1" height="2" fill="#5050ff" opacity="0.020"/><rect x="1023.1" y="328.6" width="1" height="2" fill="#5050ff" opacity="0.020"/><rect x="930.8" y="360.3" width="1" height="3" fill="#5050ff" opacity="0.063"/><rect x="707.9" y="406.1" width="1" height="3" fill="#5050ff" opacity="0.038"/><rect x="967.3" y="347.6" width="1" height="2" fill="#5050ff" opacity="0.061"/><rect x="828.9" y="392.2" width="1" height="2" fill="#5050ff" opacity="0.067"/><rect x="1050.1" y="331.7" width="1" height="1" fill="#5050ff" opacity="0.029"/><rect x="1158.7" y="282.5" width="1" height="1" fill="#5050ff" opacity="0.034"/><rect x="1064.3" y="317.1" width="1" height="3" fill="#5050ff" opacity="0.036"/><rect x="697.2" y="415.7" width="1" height="2" fill="#5050ff" opacity="0.021"/><rect x="1092.2" y="341.4" width="1" height="3" fill="#5050ff" opacity="0.060"/><rect x="889.2" y="369.6" width="1" height="1" fill="#5050ff" opacity="0.058"/><rect x="1154.5" y="280.0" width="1" height="3" fill="#5050ff" opacity="0.044"/><rect x="815.7" y="382.5" width="1" height="2" fill="#5050ff" opacity="0.049"/><rect x="851.9" y="370.5" width="1" height="2" fill="#5050ff" opacity="0.056"/><rect x="1092.5" y="304.0" width="1" height="2" fill="#5050ff" opacity="0.038"/><rect x="724.9" y="413.9" width="1" height="1" fill="#5050ff" opacity="0.053"/><rect x="822.7" y="380.3" width="1" height="2" fill="#5050ff" opacity="0.022"/><rect x="961.8" y="352.3" width="1" height="2" fill="#5050ff" opacity="0.054"/><rect x="863.7" y="374.9" width="1" height="1" fill="#5050ff" opacity="0.029"/><rect x="940.3" y="342.7" width="1" height="2" fill="#5050ff" opacity="0.047"/><rect x="702.3" y="413.1" width="1" height="1" fill="#5050ff" opacity="0.029"/><rect x="1064.5" y="346.3" width="1" height="2" fill="#5050ff" opacity="0.042"/><rect x="938.7" y="371.6" width="1" height="2" fill="#5050ff" opacity="0.059"/><rect x="1093.4" y="324.0" width="1" height="2" fill="#5050ff" opacity="0.066"/><rect x="1076.2" y="322.9" width="1" height="1" fill="#5050ff" opacity="0.046"/><rect x="765.2" y="385.4" width="1" height="2" fill="#5050ff" opacity="0.052"/><rect x="996.5" y="329.2" width="1" height="3" fill="#5050ff" opacity="0.037"/><rect x="1115.0" y="299.9" width="1" height="1" fill="#5050ff" opacity="0.048"/><rect x="752.0" y="386.2" width="1" height="3" fill="#5050ff" opacity="0.057"/><rect x="907.5" y="338.0" width="1" height="3" fill="#5050ff" opacity="0.045"/><rect x="988.7" y="343.4" width="1" height="1" fill="#5050ff" opacity="0.049"/><rect x="952.9" y="339.1" width="1" height="1" fill="#5050ff" opacity="0.022"/><rect x="1152.2" y="302.8" width="1" height="3" fill="#5050ff" opacity="0.028"/><rect x="854.1" y="370.7" width="1" height="3" fill="#5050ff" opacity="0.029"/><rect x="1180.8" y="308.6" width="1" height="2" fill="#5050ff" opacity="0.040"/><rect x="1063.9" y="325.4" width="1" height="2" fill="#5050ff" opacity="0.029"/><rect x="1101.7" y="308.9" width="1" height="2" fill="#5050ff" opacity="0.060"/><rect x="1182.9" y="313.2" width="1" height="2" fill="#5050ff" opacity="0.056"/><rect x="947.7" y="357.7" width="1" height="2" fill="#5050ff" opacity="0.037"/><rect x="956.9" y="351.5" width="1" height="2" fill="#5050ff" opacity="0.034"/><rect x="728.3" y="395.9" width="1" height="3" fill="#5050ff" opacity="0.048"/><rect x="1125.1" y="318.1" width="1" height="1" fill="#5050ff" opacity="0.023"/><rect x="1085.6" y="321.6" width="1" height="2" fill="#5050ff" opacity="0.028"/><rect x="780.2" y="376.2" width="1" height="2" fill="#5050ff" opacity="0.068"/><rect x="1103.9" y="333.5" width="1" height="2" fill="#5050ff" opacity="0.026"/><rect x="995.5" y="353.8" width="1" height="3" fill="#5050ff" opacity="0.043"/><rect x="727.5" y="404.8" width="1" height="2" fill="#5050ff" opacity="0.069"/><rect x="954.9" y="336.0" width="1" height="3" fill="#5050ff" opacity="0.069"/><rect x="878.8" y="390.6" width="1" height="2" fill="#5050ff" opacity="0.061"/><rect x="1109.3" y="325.5" width="1" height="2" fill="#5050ff" opacity="0.030"/><rect x="781.3" y="383.3" width="1" height="3" fill="#5050ff" opacity="0.026"/><rect x="712.4" y="403.6" width="1" height="2" fill="#5050ff" opacity="0.037"/><rect x="843.8" y="382.1" width="1" height="1" fill="#5050ff" opacity="0.020"/><rect x="1033.7" y="327.5" width="1" height="3" fill="#5050ff" opacity="0.036"/><rect x="790.9" y="376.0" width="1" height="2" fill="#5050ff" opacity="0.024"/><rect x="901.8" y="364.7" width="1" height="1" fill="#5050ff" opacity="0.043"/><rect x="1157.2" y="288.7" width="1" height="3" fill="#5050ff" opacity="0.037"/><rect x="808.1" y="374.3" width="1" height="2" fill="#5050ff" opacity="0.064"/><rect x="1162.3" y="293.4" width="1" height="3" fill="#5050ff" opacity="0.024"/><rect x="803.5" y="376.1" width="1" height="2" fill="#5050ff" opacity="0.041"/><rect x="913.5" y="358.1" width="1" height="3" fill="#5050ff" opacity="0.023"/><rect x="856.6" y="356.8" width="1" height="1" fill="#5050ff" opacity="0.033"/><rect x="1024.0" y="322.6" width="1" height="3" fill="#5050ff" opacity="0.032"/><rect x="877.2" y="347.4" width="1" height="2" fill="#5050ff" opacity="0.039"/><rect x="860.7" y="357.5" width="1" height="1" fill="#5050ff" opacity="0.061"/><rect x="961.7" y="364.6" width="1" height="2" fill="#5050ff" opacity="0.024"/><rect x="707.0" y="392.1" width="1" height="1" fill="#5050ff" opacity="0.069"/><rect x="1022.0" y="322.0" width="1" height="1" fill="#5050ff" opacity="0.028"/><rect x="870.7" y="358.0" width="1" height="1" fill="#5050ff" opacity="0.054"/><rect x="1171.4" y="297.6" width="1" height="3" fill="#5050ff" opacity="0.069"/><rect x="906.1" y="360.6" width="1" height="1" fill="#5050ff" opacity="0.026"/><rect x="724.9" y="415.8" width="1" height="3" fill="#5050ff" opacity="0.043"/><rect x="1082.4" y="328.8" width="1" height="3" fill="#5050ff" opacity="0.049"/><rect x="874.7" y="360.8" width="1" height="3" fill="#5050ff" opacity="0.027"/><rect x="739.4" y="398.9" width="1" height="2" fill="#5050ff" opacity="0.068"/><rect x="1019.7" y="330.8" width="1" height="3" fill="#5050ff" opacity="0.068"/><rect x="1075.3" y="327.5" width="1" height="2" fill="#5050ff" opacity="0.021"/><rect x="1158.6" y="307.0" width="1" height="1" fill="#5050ff" opacity="0.065"/><rect x="745.8" y="385.1" width="1" height="1" fill="#5050ff" opacity="0.069"/><rect x="841.0" y="381.8" width="1" height="1" fill="#5050ff" opacity="0.045"/><rect x="725.5" y="403.2" width="1" height="2" fill="#5050ff" opacity="0.045"/><rect x="837.2" y="391.5" width="1" height="2" fill="#5050ff" opacity="0.059"/><rect x="983.8" y="307.7" width="1" height="2" fill="#5050ff" opacity="0.049"/><rect x="967.7" y="351.1" width="1" height="1" fill="#5050ff" opacity="0.043"/><rect x="1092.0" y="308.3" width="1" height="2" fill="#5050ff" opacity="0.048"/><rect x="892.8" y="361.9" width="1" height="1" fill="#5050ff" opacity="0.051"/><rect x="896.2" y="367.6" width="1" height="3" fill="#5050ff" opacity="0.061"/><rect x="769.3" y="392.0" width="1" height="1" fill="#5050ff" opacity="0.047"/><rect x="892.0" y="338.0" width="1" height="1" fill="#5050ff" opacity="0.047"/><rect x="884.5" y="365.0" width="1" height="2" fill="#5050ff" opacity="0.035"/><rect x="820.8" y="398.0" width="1" height="3" fill="#5050ff" opacity="0.036"/><rect x="792.6" y="401.9" width="1" height="2" fill="#5050ff" opacity="0.070"/><rect x="972.5" y="319.2" width="1" height="2" fill="#5050ff" opacity="0.040"/><rect x="824.1" y="378.3" width="1" height="2" fill="#5050ff" opacity="0.050"/><rect x="873.7" y="355.3" width="1" height="3" fill="#5050ff" opacity="0.038"/><rect x="856.9" y="376.0" width="1" height="2" fill="#5050ff" opacity="0.026"/><rect x="1104.8" y="323.9" width="1" height="3" fill="#5050ff" opacity="0.047"/><rect x="1096.4" y="318.5" width="1" height="2" fill="#5050ff" opacity="0.054"/><rect x="708.0" y="389.0" width="1" height="3" fill="#5050ff" opacity="0.046"/><rect x="1054.2" y="344.3" width="1" height="1" fill="#5050ff" opacity="0.039"/><rect x="695.5" y="385.8" width="1" height="2" fill="#5050ff" opacity="0.038"/><rect x="1107.0" y="295.4" width="1" height="1" fill="#5050ff" opacity="0.030"/><rect x="847.7" y="359.6" width="1" height="1" fill="#5050ff" opacity="0.058"/><rect x="1114.8" y="309.2" width="1" height="2" fill="#5050ff" opacity="0.031"/><rect x="1091.0" y="329.6" width="1" height="1" fill="#5050ff" opacity="0.039"/><rect x="833.2" y="370.8" width="1" height="1" fill="#5050ff" opacity="0.054"/><rect x="888.0" y="364.5" width="1" height="2" fill="#5050ff" opacity="0.022"/><rect x="1096.8" y="321.6" width="1" height="2" fill="#5050ff" opacity="0.059"/><rect x="720.0" y="403.6" width="1" height="2" fill="#5050ff" opacity="0.051"/><rect x="1150.1" y="297.1" width="1" height="1" fill="#5050ff" opacity="0.052"/><rect x="996.8" y="334.1" width="1" height="3" fill="#5050ff" opacity="0.047"/><rect x="898.7" y="353.7" width="1" height="1" fill="#5050ff" opacity="0.054"/><rect x="777.2" y="404.1" width="1" height="3" fill="#5050ff" opacity="0.027"/><rect x="1026.5" y="338.5" width="1" height="3" fill="#5050ff" opacity="0.060"/><rect x="850.0" y="371.8" width="1" height="2" fill="#5050ff" opacity="0.026"/><rect x="1021.1" y="327.2" width="1" height="1" fill="#5050ff" opacity="0.047"/><rect x="1039.3" y="313.6" width="1" height="1" fill="#5050ff" opacity="0.053"/><rect x="1147.6" y="311.3" width="1" height="3" fill="#5050ff" opacity="0.031"/><rect x="852.1" y="388.8" width="1" height="2" fill="#5050ff" opacity="0.028"/><rect x="925.4" y="374.8" width="1" height="3" fill="#5050ff" opacity="0.022"/><rect x="1151.7" y="305.5" width="1" height="3" fill="#5050ff" opacity="0.045"/><rect x="1032.6" y="344.9" width="1" height="3" fill="#5050ff" opacity="0.039"/><rect x="744.0" y="397.3" width="1" height="2" fill="#5050ff" opacity="0.049"/><rect x="699.3" y="401.6" width="1" height="2" fill="#5050ff" opacity="0.061"/><rect x="878.2" y="371.0" width="1" height="3" fill="#5050ff" opacity="0.043"/><rect x="869.0" y="351.9" width="1" height="3" fill="#5050ff" opacity="0.049"/><rect x="1039.7" y="323.1" width="1" height="2" fill="#5050ff" opacity="0.044"/><rect x="865.3" y="371.5" width="1" height="1" fill="#5050ff" opacity="0.041"/><rect x="819.0" y="398.6" width="1" height="2" fill="#5050ff" opacity="0.039"/><rect x="905.8" y="367.0" width="1" height="2" fill="#5050ff" opacity="0.051"/><rect x="1174.0" y="305.1" width="1" height="2" fill="#5050ff" opacity="0.044"/><rect x="784.0" y="381.5" width="1" height="2" fill="#5050ff" opacity="0.051"/><rect x="939.3" y="371.4" width="1" height="2" fill="#5050ff" opacity="0.038"/><rect x="964.4" y="373.2" width="1" height="2" fill="#5050ff" opacity="0.037"/><rect x="912.7" y="367.4" width="1" height="2" fill="#5050ff" opacity="0.035"/><rect x="1079.3" y="315.6" width="1" height="2" fill="#5050ff" opacity="0.031"/><rect x="1117.4" y="307.6" width="1" height="2" fill="#5050ff" opacity="0.028"/><rect x="979.7" y="331.2" width="1" height="2" fill="#5050ff" opacity="0.065"/><rect x="1032.5" y="310.9" width="1" height="2" fill="#5050ff" opacity="0.056"/><rect x="992.5" y="358.6" width="1" height="2" fill="#5050ff" opacity="0.062"/><rect x="746.6" y="392.7" width="1" height="2" fill="#5050ff" opacity="0.064"/><rect x="833.5" y="381.5" width="1" height="2" fill="#5050ff" opacity="0.048"/><rect x="931.5" y="351.5" width="1" height="2" fill="#5050ff" opacity="0.034"/><rect x="1123.7" y="315.8" width="1" height="2" fill="#5050ff" opacity="0.028"/><rect x="993.0" y="320.9" width="1" height="2" fill="#5050ff" opacity="0.047"/><rect x="843.4" y="369.0" width="1" height="2" fill="#5050ff" opacity="0.041"/><rect x="1014.0" y="320.9" width="1" height="2" fill="#5050ff" opacity="0.054"/><rect x="1052.2" y="320.6" width="1" height="2" fill="#5050ff" opacity="0.067"/><rect x="971.6" y="338.6" width="1" height="1" fill="#5050ff" opacity="0.067"/><rect x="976.0" y="348.7" width="1" height="1" fill="#5050ff" opacity="0.066"/><rect x="841.4" y="399.9" width="1" height="2" fill="#5050ff" opacity="0.068"/><rect x="1180.5" y="293.7" width="1" height="2" fill="#5050ff" opacity="0.035"/><rect x="722.3" y="400.7" width="1" height="2" fill="#5050ff" opacity="0.021"/><rect x="1177.5" y="290.5" width="1" height="1" fill="#5050ff" opacity="0.054"/><rect x="907.8" y="356.5" width="1" height="3" fill="#5050ff" opacity="0.055"/><rect x="1149.1" y="296.6" width="1" height="1" fill="#5050ff" opacity="0.064"/><rect x="898.1" y="356.3" width="1" height="1" fill="#5050ff" opacity="0.044"/><rect x="758.6" y="394.5" width="1" height="2" fill="#5050ff" opacity="0.035"/><rect x="800.4" y="383.2" width="1" height="2" fill="#5050ff" opacity="0.047"/><rect x="1116.2" y="314.9" width="1" height="1" fill="#5050ff" opacity="0.067"/><rect x="992.8" y="348.6" width="1" height="2" fill="#5050ff" opacity="0.049"/><rect x="734.7" y="372.2" width="1" height="1" fill="#5050ff" opacity="0.022"/><rect x="839.2" y="371.5" width="1" height="1" fill="#5050ff" opacity="0.035"/><rect x="896.6" y="365.3" width="1" height="1" fill="#5050ff" opacity="0.050"/><rect x="692.3" y="415.6" width="1" height="2" fill="#5050ff" opacity="0.023"/><rect x="1173.8" y="300.5" width="1" height="2" fill="#5050ff" opacity="0.037"/><rect x="885.6" y="354.0" width="1" height="2" fill="#5050ff" opacity="0.065"/><rect x="821.6" y="367.5" width="1" height="2" fill="#5050ff" opacity="0.037"/><rect x="916.7" y="349.4" width="1" height="3" fill="#5050ff" opacity="0.032"/><rect x="778.8" y="394.2" width="1" height="2" fill="#5050ff" opacity="0.044"/><rect x="783.3" y="395.0" width="1" height="2" fill="#5050ff" opacity="0.054"/><rect x="986.2" y="326.9" width="1" height="2" fill="#5050ff" opacity="0.021"/><rect x="806.7" y="376.1" width="1" height="2" fill="#5050ff" opacity="0.035"/><rect x="1057.2" y="323.6" width="1" height="1" fill="#5050ff" opacity="0.032"/><rect x="730.8" y="403.5" width="1" height="2" fill="#5050ff" opacity="0.058"/><rect x="910.2" y="371.4" width="1" height="2" fill="#5050ff" opacity="0.027"/><rect x="726.5" y="405.7" width="1" height="3" fill="#5050ff" opacity="0.024"/><rect x="1186.0" y="277.7" width="1" height="2" fill="#5050ff" opacity="0.032"/><rect x="879.5" y="373.2" width="1" height="1" fill="#5050ff" opacity="0.034"/><rect x="927.1" y="354.6" width="1" height="3" fill="#5050ff" opacity="0.045"/><rect x="1163.4" y="295.7" width="1" height="2" fill="#5050ff" opacity="0.041"/><rect x="762.9" y="399.3" width="1" height="2" fill="#5050ff" opacity="0.068"/><rect x="860.9" y="391.4" width="1" height="2" fill="#5050ff" opacity="0.067"/><rect x="1089.0" y="313.8" width="1" height="2" fill="#5050ff" opacity="0.032"/><rect x="1128.0" y="308.8" width="1" height="3" fill="#5050ff" opacity="0.056"/><rect x="873.5" y="363.0" width="1" height="1" fill="#5050ff" opacity="0.027"/><rect x="1050.4" y="321.9" width="1" height="1" fill="#5050ff" opacity="0.036"/><rect x="827.3" y="372.6" width="1" height="3" fill="#5050ff" opacity="0.046"/><rect x="1068.6" y="293.8" width="1" height="2" fill="#5050ff" opacity="0.024"/><rect x="700.2" y="403.6" width="1" height="2" fill="#5050ff" opacity="0.066"/><rect x="771.2" y="384.2" width="1" height="3" fill="#5050ff" opacity="0.035"/><rect x="865.0" y="381.1" width="1" height="3" fill="#5050ff" opacity="0.070"/><rect x="921.7" y="364.7" width="1" height="1" fill="#5050ff" opacity="0.069"/><rect x="908.8" y="382.8" width="1" height="1" fill="#5050ff" opacity="0.049"/><rect x="831.2" y="387.4" width="1" height="1" fill="#5050ff" opacity="0.061"/><rect x="704.0" y="410.3" width="1" height="3" fill="#5050ff" opacity="0.041"/><rect x="994.4" y="340.0" width="1" height="2" fill="#5050ff" opacity="0.037"/><rect x="842.3" y="375.0" width="1" height="2" fill="#5050ff" opacity="0.022"/><rect x="1110.9" y="294.4" width="1" height="2" fill="#5050ff" opacity="0.033"/><rect x="774.2" y="384.0" width="1" height="3" fill="#5050ff" opacity="0.027"/><rect x="904.2" y="352.1" width="1" height="3" fill="#5050ff" opacity="0.067"/><rect x="807.3" y="378.1" width="1" height="2" fill="#5050ff" opacity="0.067"/><rect x="923.4" y="331.9" width="1" height="2" fill="#5050ff" opacity="0.058"/><rect x="808.1" y="373.0" width="1" height="2" fill="#5050ff" opacity="0.049"/><rect x="1038.8" y="318.8" width="1" height="1" fill="#5050ff" opacity="0.052"/><rect x="863.5" y="382.3" width="1" height="3" fill="#5050ff" opacity="0.048"/><rect x="1060.1" y="327.0" width="1" height="3" fill="#5050ff" opacity="0.054"/><rect x="890.0" y="347.5" width="1" height="3" fill="#5050ff" opacity="0.045"/><rect x="719.8" y="396.7" width="1" height="2" fill="#5050ff" opacity="0.023"/><rect x="1171.2" y="309.8" width="1" height="3" fill="#5050ff" opacity="0.034"/><rect x="716.8" y="403.4" width="1" height="3" fill="#5050ff" opacity="0.049"/><rect x="1086.2" y="319.3" width="1" height="1" fill="#5050ff" opacity="0.033"/><rect x="902.5" y="334.7" width="1" height="3" fill="#5050ff" opacity="0.044"/><rect x="766.8" y="383.1" width="1" height="2" fill="#5050ff" opacity="0.036"/><rect x="1149.6" y="290.5" width="1" height="2" fill="#5050ff" opacity="0.042"/><rect x="1175.5" y="281.1" width="1" height="2" fill="#5050ff" opacity="0.066"/><rect x="1085.9" y="311.1" width="1" height="2" fill="#5050ff" opacity="0.060"/><rect x="750.1" y="376.7" width="1" height="2" fill="#5050ff" opacity="0.044"/><rect x="713.8" y="414.7" width="1" height="3" fill="#5050ff" opacity="0.053"/><rect x="1083.1" y="290.9" width="1" height="3" fill="#5050ff" opacity="0.051"/><rect x="1152.7" y="297.5" width="1" height="1" fill="#5050ff" opacity="0.053"/><rect x="820.3" y="376.2" width="1" height="3" fill="#5050ff" opacity="0.034"/><rect x="845.5" y="380.0" width="1" height="2" fill="#5050ff" opacity="0.058"/><rect x="1062.1" y="337.2" width="1" height="3" fill="#5050ff" opacity="0.053"/><rect x="1120.7" y="309.9" width="1" height="2" fill="#5050ff" opacity="0.064"/><rect x="1158.1" y="279.5" width="1" height="3" fill="#5050ff" opacity="0.052"/><rect x="803.1" y="382.7" width="1" height="3" fill="#5050ff" opacity="0.064"/><rect x="1085.1" y="313.1" width="1" height="1" fill="#5050ff" opacity="0.031"/><rect x="1035.1" y="318.5" width="1" height="2" fill="#5050ff" opacity="0.034"/><rect x="705.3" y="405.9" width="1" height="1" fill="#5050ff" opacity="0.033"/><rect x="855.3" y="392.7" width="1" height="2" fill="#5050ff" opacity="0.035"/><rect x="1167.5" y="285.7" width="1" height="2" fill="#5050ff" opacity="0.059"/><rect x="745.9" y="404.0" width="1" height="1" fill="#5050ff" opacity="0.023"/><rect x="1118.1" y="341.6" width="1" height="3" fill="#5050ff" opacity="0.047"/><rect x="1065.7" y="311.8" width="1" height="2" fill="#5050ff" opacity="0.067"/><rect x="811.2" y="380.0" width="1" height="1" fill="#5050ff" opacity="0.036"/><rect x="859.9" y="378.8" width="1" height="3" fill="#5050ff" opacity="0.063"/><rect x="798.4" y="382.2" width="1" height="3" fill="#5050ff" opacity="0.066"/><rect x="1144.8" y="312.1" width="1" height="3" fill="#5050ff" opacity="0.044"/><rect x="1068.6" y="325.6" width="1" height="2" fill="#5050ff" opacity="0.048"/><rect x="981.6" y="339.3" width="1" height="2" fill="#5050ff" opacity="0.024"/><rect x="1070.4" y="320.4" width="1" height="2" fill="#5050ff" opacity="0.023"/><rect x="782.7" y="407.3" width="1" height="2" fill="#5050ff" opacity="0.049"/><rect x="824.5" y="374.6" width="1" height="1" fill="#5050ff" opacity="0.060"/><rect x="1040.8" y="315.4" width="1" height="3" fill="#5050ff" opacity="0.025"/><rect x="787.8" y="390.3" width="1" height="1" fill="#5050ff" opacity="0.033"/><rect x="963.9" y="357.4" width="1" height="2" fill="#5050ff" opacity="0.051"/><rect x="1183.7" y="292.7" width="1" height="2" fill="#5050ff" opacity="0.045"/><rect x="891.1" y="352.6" width="1" height="1" fill="#5050ff" opacity="0.051"/><rect x="734.9" y="386.3" width="1" height="2" fill="#5050ff" opacity="0.048"/><rect x="719.0" y="401.5" width="1" height="3" fill="#5050ff" opacity="0.024"/><rect x="1052.8" y="324.1" width="1" height="2" fill="#5050ff" opacity="0.051"/><rect x="1163.1" y="305.1" width="1" height="2" fill="#5050ff" opacity="0.049"/><rect x="1149.5" y="290.5" width="1" height="2" fill="#5050ff" opacity="0.052"/><rect x="842.3" y="378.1" width="1" height="3" fill="#5050ff" opacity="0.045"/><rect x="1057.1" y="344.5" width="1" height="2" fill="#5050ff" opacity="0.063"/><rect x="819.2" y="384.1" width="1" height="2" fill="#5050ff" opacity="0.042"/><rect x="1019.4" y="315.1" width="1" height="3" fill="#5050ff" opacity="0.030"/><rect x="847.9" y="364.7" width="1" height="1" fill="#5050ff" opacity="0.035"/><rect x="916.8" y="348.3" width="1" height="3" fill="#5050ff" opacity="0.044"/><rect x="1017.7" y="326.5" width="1" height="3" fill="#5050ff" opacity="0.060"/><rect x="1129.7" y="293.7" width="1" height="2" fill="#5050ff" opacity="0.024"/><rect x="838.4" y="370.7" width="1" height="3" fill="#5050ff" opacity="0.053"/><rect x="906.9" y="332.1" width="1" height="2" fill="#5050ff" opacity="0.053"/><rect x="988.8" y="351.7" width="1" height="3" fill="#5050ff" opacity="0.056"/><rect x="700.3" y="415.5" width="1" height="3" fill="#5050ff" opacity="0.041"/><rect x="820.2" y="373.5" width="1" height="2" fill="#5050ff" opacity="0.040"/><rect x="1061.2" y="316.7" width="1" height="3" fill="#5050ff" opacity="0.042"/><rect x="980.0" y="350.3" width="1" height="2" fill="#5050ff" opacity="0.040"/><rect x="1060.8" y="303.0" width="1" height="2" fill="#5050ff" opacity="0.049"/><rect x="818.6" y="375.0" width="1" height="1" fill="#5050ff" opacity="0.028"/><rect x="759.4" y="383.7" width="1" height="2" fill="#5050ff" opacity="0.059"/><rect x="1092.0" y="312.2" width="1" height="2" fill="#5050ff" opacity="0.058"/><rect x="953.0" y="347.5" width="1" height="2" fill="#5050ff" opacity="0.045"/><rect x="1147.7" y="304.6" width="1" height="3" fill="#5050ff" opacity="0.044"/><rect x="1025.9" y="317.9" width="1" height="1" fill="#5050ff" opacity="0.025"/><rect x="919.4" y="322.4" width="1" height="2" fill="#5050ff" opacity="0.048"/><rect x="866.2" y="362.1" width="1" height="1" fill="#5050ff" opacity="0.058"/><rect x="696.5" y="402.5" width="1" height="2" fill="#5050ff" opacity="0.038"/><rect x="879.8" y="363.2" width="1" height="2" fill="#5050ff" opacity="0.034"/><rect x="977.7" y="328.1" width="1" height="3" fill="#5050ff" opacity="0.040"/><rect x="765.4" y="391.3" width="1" height="2" fill="#5050ff" opacity="0.036"/><rect x="794.1" y="409.5" width="1" height="1" fill="#5050ff" opacity="0.052"/><rect x="1057.1" y="326.6" width="1" height="3" fill="#5050ff" opacity="0.033"/><rect x="720.4" y="389.1" width="1" height="2" fill="#5050ff" opacity="0.035"/><rect x="796.4" y="377.0" width="1" height="2" fill="#5050ff" opacity="0.055"/><rect x="858.5" y="375.8" width="1" height="2" fill="#5050ff" opacity="0.044"/><rect x="705.7" y="401.4" width="1" height="2" fill="#5050ff" opacity="0.066"/><rect x="993.0" y="345.9" width="1" height="2" fill="#5050ff" opacity="0.031"/><rect x="766.2" y="391.6" width="1" height="2" fill="#5050ff" opacity="0.068"/><rect x="1081.3" y="322.2" width="1" height="2" fill="#5050ff" opacity="0.029"/><rect x="925.7" y="349.7" width="1" height="2" fill="#5050ff" opacity="0.050"/><rect x="798.7" y="401.0" width="1" height="2" fill="#5050ff" opacity="0.031"/><rect x="721.2" y="388.0" width="1" height="1" fill="#5050ff" opacity="0.045"/><rect x="1112.0" y="309.2" width="1" height="1" fill="#5050ff" opacity="0.054"/><rect x="739.0" y="380.0" width="1" height="2" fill="#5050ff" opacity="0.022"/><rect x="1068.3" y="306.6" width="1" height="1" fill="#5050ff" opacity="0.039"/><rect x="898.3" y="361.4" width="1" height="2" fill="#5050ff" opacity="0.065"/><rect x="965.5" y="350.8" width="1" height="1" fill="#5050ff" opacity="0.054"/><rect x="922.9" y="356.6" width="1" height="1" fill="#5050ff" opacity="0.034"/><rect x="867.8" y="362.7" width="1" height="2" fill="#5050ff" opacity="0.035"/><rect x="699.4" y="414.6" width="1" height="3" fill="#5050ff" opacity="0.038"/><rect x="984.5" y="339.5" width="1" height="3" fill="#5050ff" opacity="0.062"/><rect x="1026.6" y="335.4" width="1" height="3" fill="#5050ff" opacity="0.029"/><rect x="1034.0" y="316.9" width="1" height="2" fill="#5050ff" opacity="0.040"/><rect x="923.5" y="354.7" width="1" height="2" fill="#5050ff" opacity="0.046"/><rect x="832.8" y="373.2" width="1" height="1" fill="#5050ff" opacity="0.052"/><rect x="998.5" y="347.3" width="1" height="2" fill="#5050ff" opacity="0.034"/><rect x="873.5" y="379.1" width="1" height="2" fill="#5050ff" opacity="0.043"/><rect x="1059.8" y="315.6" width="1" height="3" fill="#5050ff" opacity="0.043"/><rect x="939.6" y="353.0" width="1" height="2" fill="#5050ff" opacity="0.053"/><rect x="728.7" y="415.6" width="1" height="2" fill="#5050ff" opacity="0.032"/><rect x="960.5" y="336.4" width="1" height="2" fill="#5050ff" opacity="0.063"/><rect x="1181.2" y="292.3" width="1" height="1" fill="#5050ff" opacity="0.024"/><rect x="698.6" y="414.9" width="1" height="1" fill="#5050ff" opacity="0.052"/><rect x="913.1" y="365.9" width="1" height="3" fill="#5050ff" opacity="0.069"/><rect x="984.2" y="336.6" width="1" height="1" fill="#5050ff" opacity="0.055"/><rect x="921.2" y="354.2" width="1" height="3" fill="#5050ff" opacity="0.065"/><rect x="799.1" y="371.4" width="1" height="1" fill="#5050ff" opacity="0.037"/><rect x="698.1" y="413.1" width="1" height="2" fill="#5050ff" opacity="0.056"/><rect x="990.4" y="339.2" width="1" height="1" fill="#5050ff" opacity="0.029"/><rect x="1174.4" y="304.3" width="1" height="2" fill="#5050ff" opacity="0.029"/><rect x="1094.3" y="310.9" width="1" height="1" fill="#5050ff" opacity="0.023"/><rect x="1050.7" y="306.0" width="1" height="2" fill="#5050ff" opacity="0.056"/><rect x="1005.4" y="333.7" width="1" height="2" fill="#5050ff" opacity="0.052"/><rect x="1089.7" y="292.1" width="1" height="2" fill="#5050ff" opacity="0.065"/><rect x="849.9" y="373.2" width="1" height="2" fill="#5050ff" opacity="0.054"/><rect x="881.1" y="365.7" width="1" height="2" fill="#5050ff" opacity="0.061"/><rect x="883.5" y="357.4" width="1" height="1" fill="#5050ff" opacity="0.053"/><rect x="810.5" y="372.6" width="1" height="2" fill="#5050ff" opacity="0.034"/><rect x="1025.2" y="336.9" width="1" height="2" fill="#5050ff" opacity="0.032"/><rect x="1154.3" y="302.4" width="1" height="1" fill="#5050ff" opacity="0.053"/><rect x="1176.0" y="286.9" width="1" height="2" fill="#5050ff" opacity="0.039"/><rect x="935.8" y="338.2" width="1" height="3" fill="#5050ff" opacity="0.023"/><rect x="982.6" y="346.7" width="1" height="2" fill="#5050ff" opacity="0.026"/><rect x="1177.5" y="299.9" width="1" height="2" fill="#5050ff" opacity="0.039"/><rect x="884.3" y="378.9" width="1" height="2" fill="#5050ff" opacity="0.050"/><rect x="939.1" y="345.4" width="1" height="2" fill="#5050ff" opacity="0.045"/><rect x="913.5" y="353.8" width="1" height="1" fill="#5050ff" opacity="0.047"/><rect x="756.2" y="395.0" width="1" height="2" fill="#5050ff" opacity="0.039"/><rect x="1108.9" y="297.1" width="1" height="1" fill="#5050ff" opacity="0.058"/><rect x="865.3" y="356.2" width="1" height="2" fill="#5050ff" opacity="0.023"/><rect x="772.2" y="393.4" width="1" height="3" fill="#5050ff" opacity="0.064"/><rect x="763.6" y="393.5" width="1" height="2" fill="#5050ff" opacity="0.056"/><rect x="1110.1" y="290.4" width="1" height="1" fill="#5050ff" opacity="0.022"/><rect x="805.6" y="368.3" width="1" height="3" fill="#5050ff" opacity="0.029"/><rect x="747.4" y="401.6" width="1" height="2" fill="#5050ff" opacity="0.028"/><rect x="1100.3" y="327.5" width="1" height="3" fill="#5050ff" opacity="0.060"/><rect x="765.9" y="380.4" width="1" height="3" fill="#5050ff" opacity="0.039"/><rect x="843.9" y="368.3" width="1" height="1" fill="#5050ff" opacity="0.069"/><rect x="787.5" y="386.4" width="1" height="3" fill="#5050ff" opacity="0.064"/><rect x="835.1" y="377.1" width="1" height="2" fill="#5050ff" opacity="0.034"/><rect x="771.3" y="398.1" width="1" height="1" fill="#5050ff" opacity="0.066"/><rect x="1140.7" y="281.2" width="1" height="2" fill="#5050ff" opacity="0.022"/><rect x="838.7" y="376.3" width="1" height="2" fill="#5050ff" opacity="0.025"/><rect x="1002.3" y="373.2" width="1" height="2" fill="#5050ff" opacity="0.063"/><rect x="1070.2" y="343.0" width="1" height="2" fill="#5050ff" opacity="0.057"/><rect x="983.8" y="360.3" width="1" height="2" fill="#5050ff" opacity="0.054"/><rect x="1185.5" y="300.7" width="1" height="2" fill="#5050ff" opacity="0.068"/><rect x="820.3" y="365.8" width="1" height="1" fill="#5050ff" opacity="0.045"/><rect x="757.0" y="395.2" width="1" height="2" fill="#5050ff" opacity="0.051"/><rect x="795.0" y="381.5" width="1" height="3" fill="#5050ff" opacity="0.068"/><rect x="786.6" y="366.9" width="1" height="2" fill="#5050ff" opacity="0.069"/><rect x="784.4" y="395.0" width="1" height="2" fill="#5050ff" opacity="0.045"/><rect x="959.9" y="345.1" width="1" height="1" fill="#5050ff" opacity="0.050"/><rect x="748.9" y="407.1" width="1" height="2" fill="#5050ff" opacity="0.054"/><rect x="1008.8" y="321.5" width="1" height="3" fill="#5050ff" opacity="0.021"/><rect x="1045.7" y="328.0" width="1" height="3" fill="#5050ff" opacity="0.032"/><rect x="779.9" y="376.9" width="1" height="2" fill="#5050ff" opacity="0.054"/><rect x="849.0" y="375.4" width="1" height="2" fill="#5050ff" opacity="0.040"/><rect x="1049.4" y="327.3" width="1" height="2" fill="#5050ff" opacity="0.051"/><rect x="754.1" y="381.8" width="1" height="1" fill="#5050ff" opacity="0.050"/><rect x="900.4" y="368.0" width="1" height="2" fill="#5050ff" opacity="0.030"/><rect x="1170.2" y="284.3" width="1" height="1" fill="#5050ff" opacity="0.023"/><rect x="1153.1" y="310.5" width="1" height="2" fill="#5050ff" opacity="0.033"/><rect x="962.6" y="358.0" width="1" height="2" fill="#5050ff" opacity="0.063"/><rect x="1156.8" y="313.8" width="1" height="1" fill="#5050ff" opacity="0.044"/><rect x="706.7" y="412.1" width="1" height="1" fill="#5050ff" opacity="0.028"/><rect x="771.2" y="388.3" width="1" height="2" fill="#5050ff" opacity="0.055"/><rect x="1145.8" y="305.6" width="1" height="2" fill="#5050ff" opacity="0.039"/><rect x="1128.7" y="292.0" width="1" height="2" fill="#5050ff" opacity="0.063"/><rect x="833.8" y="371.3" width="1" height="3" fill="#5050ff" opacity="0.059"/><rect x="923.4" y="367.2" width="1" height="2" fill="#5050ff" opacity="0.033"/><rect x="944.1" y="350.6" width="1" height="2" fill="#5050ff" opacity="0.023"/><rect x="869.6" y="364.3" width="1" height="2" fill="#5050ff" opacity="0.068"/><rect x="728.5" y="405.0" width="1" height="3" fill="#5050ff" opacity="0.050"/><rect x="1089.2" y="295.6" width="1" height="3" fill="#5050ff" opacity="0.044"/><rect x="1029.0" y="344.7" width="1" height="1" fill="#5050ff" opacity="0.063"/><rect x="1185.8" y="302.7" width="1" height="2" fill="#5050ff" opacity="0.024"/><rect x="911.4" y="360.8" width="1" height="1" fill="#5050ff" opacity="0.048"/><rect x="989.4" y="340.0" width="1" height="2" fill="#5050ff" opacity="0.035"/><rect x="881.6" y="352.8" width="1" height="1" fill="#5050ff" opacity="0.066"/><rect x="693.6" y="412.6" width="1" height="1" fill="#5050ff" opacity="0.028"/><rect x="1131.9" y="310.3" width="1" height="1" fill="#5050ff" opacity="0.057"/><rect x="971.8" y="348.7" width="1" height="1" fill="#5050ff" opacity="0.029"/><rect x="831.0" y="385.0" width="1" height="2" fill="#5050ff" opacity="0.022"/><rect x="901.8" y="372.3" width="1" height="2" fill="#5050ff" opacity="0.069"/><rect x="924.2" y="360.9" width="1" height="2" fill="#5050ff" opacity="0.065"/><rect x="1101.3" y="318.1" width="1" height="2" fill="#5050ff" opacity="0.045"/><rect x="1144.9" y="298.2" width="1" height="1" fill="#5050ff" opacity="0.030"/><rect x="899.1" y="367.2" width="1" height="1" fill="#5050ff" opacity="0.029"/><rect x="1049.6" y="334.7" width="1" height="1" fill="#5050ff" opacity="0.065"/><rect x="1095.4" y="315.2" width="1" height="2" fill="#5050ff" opacity="0.046"/><rect x="814.9" y="401.8" width="1" height="2" fill="#5050ff" opacity="0.048"/><rect x="1124.1" y="299.7" width="1" height="3" fill="#5050ff" opacity="0.032"/><rect x="1121.1" y="302.7" width="1" height="2" fill="#5050ff" opacity="0.067"/><rect x="921.0" y="358.9" width="1" height="3" fill="#5050ff" opacity="0.028"/><rect x="937.2" y="354.8" width="1" height="2" fill="#5050ff" opacity="0.052"/><rect x="790.0" y="393.5" width="1" height="2" fill="#5050ff" opacity="0.050"/><rect x="755.5" y="398.5" width="1" height="3" fill="#5050ff" opacity="0.055"/><rect x="892.9" y="355.7" width="1" height="2" fill="#5050ff" opacity="0.041"/><rect x="752.9" y="386.9" width="1" height="3" fill="#5050ff" opacity="0.033"/><rect x="865.9" y="379.7" width="1" height="2" fill="#5050ff" opacity="0.054"/><rect x="882.7" y="348.3" width="1" height="2" fill="#5050ff" opacity="0.052"/><rect x="881.9" y="338.3" width="1" height="2" fill="#5050ff" opacity="0.029"/><rect x="984.3" y="328.0" width="1" height="2" fill="#5050ff" opacity="0.052"/><rect x="1176.3" y="279.1" width="1" height="3" fill="#5050ff" opacity="0.047"/><rect x="803.6" y="380.3" width="1" height="2" fill="#5050ff" opacity="0.064"/><rect x="1037.5" y="345.9" width="1" height="2" fill="#5050ff" opacity="0.067"/><rect x="842.9" y="367.0" width="1" height="2" fill="#5050ff" opacity="0.044"/><rect x="1007.6" y="337.8" width="1" height="1" fill="#5050ff" opacity="0.030"/><rect x="899.1" y="351.3" width="1" height="1" fill="#5050ff" opacity="0.024"/><rect x="811.6" y="369.0" width="1" height="3" fill="#5050ff" opacity="0.036"/><rect x="908.5" y="360.9" width="1" height="2" fill="#5050ff" opacity="0.033"/><rect x="869.7" y="387.1" width="1" height="2" fill="#5050ff" opacity="0.049"/><rect x="860.8" y="359.3" width="1" height="2" fill="#5050ff" opacity="0.051"/><rect x="967.3" y="348.2" width="1" height="2" fill="#5050ff" opacity="0.041"/><rect x="839.8" y="377.5" width="1" height="2" fill="#5050ff" opacity="0.036"/><rect x="1135.2" y="322.0" width="1" height="3" fill="#5050ff" opacity="0.052"/><rect x="757.6" y="389.3" width="1" height="1" fill="#5050ff" opacity="0.036"/><rect x="770.1" y="380.2" width="1" height="3" fill="#5050ff" opacity="0.046"/><rect x="737.6" y="397.0" width="1" height="1" fill="#5050ff" opacity="0.027"/><rect x="1117.6" y="326.9" width="1" height="2" fill="#5050ff" opacity="0.026"/><rect x="921.9" y="350.6" width="1" height="2" fill="#5050ff" opacity="0.048"/><rect x="1002.4" y="331.9" width="1" height="3" fill="#5050ff" opacity="0.037"/><rect x="692.6" y="406.6" width="1" height="1" fill="#5050ff" opacity="0.047"/><rect x="1139.0" y="305.7" width="1" height="2" fill="#5050ff" opacity="0.052"/><rect x="896.0" y="371.1" width="1" height="2" fill="#5050ff" opacity="0.046"/><rect x="903.4" y="363.2" width="1" height="2" fill="#5050ff" opacity="0.043"/><rect x="986.6" y="340.6" width="1" height="3" fill="#5050ff" opacity="0.048"/><rect x="879.6" y="363.5" width="1" height="3" fill="#5050ff" opacity="0.028"/><rect x="780.0" y="389.8" width="1" height="2" fill="#5050ff" opacity="0.067"/><rect x="1011.1" y="313.5" width="1" height="3" fill="#5050ff" opacity="0.038"/><rect x="806.2" y="402.2" width="1" height="2" fill="#5050ff" opacity="0.044"/><rect x="1140.6" y="288.7" width="1" height="2" fill="#5050ff" opacity="0.025"/><rect x="1012.3" y="329.9" width="1" height="3" fill="#5050ff" opacity="0.042"/><rect x="705.5" y="388.1" width="1" height="3" fill="#5050ff" opacity="0.059"/><rect x="941.8" y="371.8" width="1" height="2" fill="#5050ff" opacity="0.069"/><rect x="768.1" y="385.1" width="1" height="2" fill="#5050ff" opacity="0.046"/><rect x="1150.7" y="278.2" width="1" height="2" fill="#5050ff" opacity="0.053"/><rect x="1105.7" y="304.0" width="1" height="2" fill="#5050ff" opacity="0.022"/><rect x="802.6" y="398.1" width="1" height="3" fill="#5050ff" opacity="0.023"/><rect x="858.2" y="383.0" width="1" height="2" fill="#5050ff" opacity="0.029"/><rect x="699.5" y="409.0" width="1" height="1" fill="#5050ff" opacity="0.056"/><rect x="790.7" y="378.5" width="1" height="3" fill="#5050ff" opacity="0.039"/><rect x="1071.8" y="318.5" width="1" height="2" fill="#5050ff" opacity="0.043"/><rect x="736.0" y="390.2" width="1" height="2" fill="#5050ff" opacity="0.025"/><rect x="1153.4" y="308.3" width="1" height="1" fill="#5050ff" opacity="0.037"/><rect x="776.5" y="393.4" width="1" height="2" fill="#5050ff" opacity="0.070"/><rect x="1151.4" y="302.3" width="1" height="1" fill="#5050ff" opacity="0.065"/><rect x="1106.6" y="323.0" width="1" height="2" fill="#5050ff" opacity="0.054"/><rect x="735.2" y="382.4" width="1" height="2" fill="#5050ff" opacity="0.022"/><rect x="833.1" y="386.4" width="1" height="3" fill="#5050ff" opacity="0.035"/><rect x="888.9" y="382.1" width="1" height="3" fill="#5050ff" opacity="0.041"/><rect x="813.3" y="391.1" width="1" height="2" fill="#5050ff" opacity="0.057"/><rect x="908.2" y="339.4" width="1" height="2" fill="#5050ff" opacity="0.035"/><rect x="961.9" y="345.6" width="1" height="2" fill="#5050ff" opacity="0.040"/><rect x="874.3" y="363.2" width="1" height="3" fill="#5050ff" opacity="0.049"/><rect x="737.8" y="400.0" width="1" height="1" fill="#5050ff" opacity="0.051"/><rect x="838.5" y="373.4" width="1" height="3" fill="#5050ff" opacity="0.021"/><rect x="985.9" y="345.0" width="1" height="1" fill="#5050ff" opacity="0.057"/><rect x="870.0" y="354.9" width="1" height="1" fill="#5050ff" opacity="0.021"/><rect x="890.5" y="367.2" width="1" height="3" fill="#5050ff" opacity="0.062"/><rect x="740.0" y="392.0" width="1" height="2" fill="#5050ff" opacity="0.040"/><rect x="1024.9" y="336.2" width="1" height="1" fill="#5050ff" opacity="0.043"/><rect x="1103.5" y="318.0" width="1" height="1" fill="#5050ff" opacity="0.048"/><rect x="988.0" y="327.2" width="1" height="1" fill="#5050ff" opacity="0.027"/><rect x="1160.5" y="305.3" width="1" height="3" fill="#5050ff" opacity="0.027"/><rect x="747.6" y="408.9" width="1" height="3" fill="#5050ff" opacity="0.052"/><rect x="695.5" y="412.0" width="1" height="2" fill="#5050ff" opacity="0.064"/><rect x="1166.5" y="314.3" width="1" height="3" fill="#5050ff" opacity="0.040"/><rect x="1053.3" y="347.6" width="1" height="1" fill="#5050ff" opacity="0.046"/><rect x="910.4" y="367.4" width="1" height="2" fill="#5050ff" opacity="0.032"/><rect x="743.5" y="417.0" width="1" height="3" fill="#5050ff" opacity="0.026"/><rect x="754.1" y="378.2" width="1" height="1" fill="#5050ff" opacity="0.048"/><rect x="781.9" y="378.6" width="1" height="2" fill="#5050ff" opacity="0.046"/><rect x="986.4" y="348.5" width="1" height="2" fill="#5050ff" opacity="0.067"/><rect x="1041.6" y="334.3" width="1" height="2" fill="#5050ff" opacity="0.044"/><rect x="1016.3" y="355.6" width="1" height="1" fill="#5050ff" opacity="0.035"/><rect x="1162.1" y="283.9" width="1" height="2" fill="#5050ff" opacity="0.067"/><rect x="741.3" y="401.6" width="1" height="1" fill="#5050ff" opacity="0.064"/><rect x="911.6" y="360.6" width="1" height="3" fill="#5050ff" opacity="0.034"/><rect x="755.2" y="380.6" width="1" height="2" fill="#5050ff" opacity="0.058"/><rect x="1058.5" y="341.8" width="1" height="2" fill="#5050ff" opacity="0.027"/><rect x="1171.6" y="297.3" width="1" height="1" fill="#5050ff" opacity="0.068"/><rect x="1149.1" y="308.5" width="1" height="2" fill="#5050ff" opacity="0.062"/><rect x="971.9" y="359.1" width="1" height="1" fill="#5050ff" opacity="0.062"/><rect x="713.5" y="412.9" width="1" height="3" fill="#5050ff" opacity="0.023"/><rect x="715.5" y="390.0" width="1" height="2" fill="#5050ff" opacity="0.063"/><rect x="1020.6" y="323.0" width="1" height="2" fill="#5050ff" opacity="0.055"/><rect x="879.1" y="363.6" width="1" height="3" fill="#5050ff" opacity="0.056"/><rect x="920.4" y="358.8" width="1" height="1" fill="#5050ff" opacity="0.054"/><rect x="769.2" y="403.1" width="1" height="2" fill="#5050ff" opacity="0.069"/><rect x="1104.7" y="330.2" width="1" height="2" fill="#5050ff" opacity="0.061"/><rect x="1026.3" y="352.1" width="1" height="2" fill="#5050ff" opacity="0.021"/><rect x="1053.5" y="315.9" width="1" height="1" fill="#5050ff" opacity="0.037"/><rect x="864.3" y="362.1" width="1" height="1" fill="#5050ff" opacity="0.069"/><rect x="1021.9" y="315.5" width="1" height="3" fill="#5050ff" opacity="0.068"/><rect x="919.0" y="343.4" width="1" height="2" fill="#5050ff" opacity="0.021"/><rect x="1118.3" y="300.2" width="1" height="2" fill="#5050ff" opacity="0.020"/><rect x="1000.6" y="329.5" width="1" height="2" fill="#5050ff" opacity="0.069"/><rect x="1113.2" y="314.1" width="1" height="3" fill="#5050ff" opacity="0.043"/><rect x="1042.0" y="293.0" width="1" height="2" fill="#5050ff" opacity="0.048"/><rect x="721.9" y="394.2" width="1" height="1" fill="#5050ff" opacity="0.023"/><rect x="976.4" y="338.0" width="1" height="1" fill="#5050ff" opacity="0.057"/><rect x="737.3" y="388.9" width="1" height="2" fill="#5050ff" opacity="0.022"/><rect x="976.8" y="341.3" width="1" height="2" fill="#5050ff" opacity="0.035"/><rect x="699.0" y="400.9" width="1" height="3" fill="#5050ff" opacity="0.035"/><rect x="1114.3" y="331.3" width="1" height="2" fill="#5050ff" opacity="0.051"/><rect x="724.3" y="397.0" width="1" height="2" fill="#5050ff" opacity="0.061"/><rect x="1120.0" y="315.1" width="1" height="1" fill="#5050ff" opacity="0.057"/><rect x="863.2" y="369.2" width="1" height="2" fill="#5050ff" opacity="0.062"/><rect x="1100.0" y="317.5" width="1" height="3" fill="#5050ff" opacity="0.025"/><rect x="990.7" y="357.8" width="1" height="2" fill="#5050ff" opacity="0.046"/><rect x="909.5" y="365.9" width="1" height="1" fill="#5050ff" opacity="0.021"/><rect x="799.8" y="368.1" width="1" height="3" fill="#5050ff" opacity="0.035"/><rect x="850.0" y="360.1" width="1" height="2" fill="#5050ff" opacity="0.070"/><rect x="1137.6" y="283.0" width="1" height="1" fill="#5050ff" opacity="0.038"/><rect x="930.2" y="336.3" width="1" height="1" fill="#5050ff" opacity="0.031"/><rect x="1099.6" y="311.3" width="1" height="3" fill="#5050ff" opacity="0.027"/><rect x="1115.5" y="296.8" width="1" height="1" fill="#5050ff" opacity="0.033"/><rect x="1149.1" y="301.2" width="1" height="1" fill="#5050ff" opacity="0.054"/><rect x="854.1" y="376.4" width="1" height="2" fill="#5050ff" opacity="0.056"/><rect x="896.3" y="371.4" width="1" height="2" fill="#5050ff" opacity="0.046"/><rect x="1118.6" y="304.6" width="1" height="3" fill="#5050ff" opacity="0.024"/><rect x="873.2" y="358.2" width="1" height="1" fill="#5050ff" opacity="0.030"/><rect x="1075.6" y="336.9" width="1" height="3" fill="#5050ff" opacity="0.044"/><rect x="772.7" y="405.2" width="1" height="2" fill="#5050ff" opacity="0.051"/><rect x="826.2" y="382.6" width="1" height="1" fill="#5050ff" opacity="0.024"/><rect x="764.7" y="405.3" width="1" height="2" fill="#5050ff" opacity="0.041"/><rect x="962.7" y="347.6" width="1" height="2" fill="#5050ff" opacity="0.064"/><rect x="1100.6" y="307.4" width="1" height="1" fill="#5050ff" opacity="0.021"/><rect x="812.4" y="380.2" width="1" height="2" fill="#5050ff" opacity="0.026"/><rect x="1031.4" y="337.8" width="1" height="2" fill="#5050ff" opacity="0.032"/><rect x="940.6" y="335.2" width="1" height="1" fill="#5050ff" opacity="0.045"/><rect x="1148.2" y="297.6" width="1" height="2" fill="#5050ff" opacity="0.038"/><rect x="725.1" y="401.2" width="1" height="1" fill="#5050ff" opacity="0.035"/><rect x="1120.2" y="296.7" width="1" height="3" fill="#5050ff" opacity="0.022"/><rect x="810.0" y="386.6" width="1" height="2" fill="#5050ff" opacity="0.038"/><rect x="719.7" y="397.1" width="1" height="2" fill="#5050ff" opacity="0.042"/><rect x="909.5" y="368.3" width="1" height="2" fill="#5050ff" opacity="0.061"/><rect x="965.7" y="327.7" width="1" height="3" fill="#5050ff" opacity="0.067"/><rect x="802.4" y="379.6" width="1" height="3" fill="#5050ff" opacity="0.030"/><rect x="1112.0" y="315.1" width="1" height="2" fill="#5050ff" opacity="0.045"/><rect x="897.8" y="393.2" width="1" height="1" fill="#5050ff" opacity="0.022"/><rect x="717.4" y="395.6" width="1" height="2" fill="#5050ff" opacity="0.056"/><rect x="776.0" y="380.9" width="1" height="2" fill="#5050ff" opacity="0.056"/><rect x="1183.8" y="293.1" width="1" height="3" fill="#5050ff" opacity="0.037"/><rect x="897.6" y="373.3" width="1" height="1" fill="#5050ff" opacity="0.068"/><rect x="759.6" y="403.7" width="1" height="2" fill="#5050ff" opacity="0.052"/><rect x="981.1" y="351.9" width="1" height="3" fill="#5050ff" opacity="0.043"/><rect x="934.6" y="373.8" width="1" height="3" fill="#5050ff" opacity="0.054"/><rect x="1130.0" y="309.3" width="1" height="3" fill="#5050ff" opacity="0.029"/><rect x="1101.6" y="314.8" width="1" height="1" fill="#5050ff" opacity="0.037"/><rect x="911.9" y="350.3" width="1" height="3" fill="#5050ff" opacity="0.043"/><rect x="1179.3" y="290.7" width="1" height="2" fill="#5050ff" opacity="0.063"/><rect x="1065.9" y="332.0" width="1" height="2" fill="#5050ff" opacity="0.064"/><rect x="841.5" y="343.3" width="1" height="2" fill="#5050ff" opacity="0.064"/><rect x="966.2" y="334.1" width="1" height="2" fill="#5050ff" opacity="0.047"/><rect x="920.0" y="365.6" width="1" height="1" fill="#5050ff" opacity="0.061"/><rect x="1113.6" y="314.8" width="1" height="3" fill="#5050ff" opacity="0.043"/><rect x="1085.1" y="321.4" width="1" height="2" fill="#5050ff" opacity="0.051"/><rect x="1027.8" y="328.0" width="1" height="2" fill="#5050ff" opacity="0.056"/><rect x="751.3" y="406.0" width="1" height="1" fill="#5050ff" opacity="0.027"/><rect x="993.3" y="343.6" width="1" height="2" fill="#5050ff" opacity="0.063"/><rect x="1097.9" y="326.2" width="1" height="1" fill="#5050ff" opacity="0.067"/><rect x="703.1" y="399.7" width="1" height="1" fill="#5050ff" opacity="0.037"/><rect x="1109.0" y="324.2" width="1" height="1" fill="#5050ff" opacity="0.033"/><rect x="799.4" y="379.2" width="1" height="2" fill="#5050ff" opacity="0.037"/><rect x="923.9" y="357.3" width="1" height="3" fill="#5050ff" opacity="0.025"/><rect x="768.0" y="402.9" width="1" height="2" fill="#5050ff" opacity="0.021"/><rect x="813.8" y="362.7" width="1" height="2" fill="#5050ff" opacity="0.057"/><rect x="1051.6" y="308.1" width="1" height="2" fill="#5050ff" opacity="0.048"/><rect x="1067.2" y="319.2" width="1" height="2" fill="#5050ff" opacity="0.054"/><rect x="775.3" y="412.3" width="1" height="1" fill="#5050ff" opacity="0.048"/><rect x="819.1" y="373.9" width="1" height="1" fill="#5050ff" opacity="0.026"/><rect x="979.6" y="333.7" width="1" height="1" fill="#5050ff" opacity="0.032"/><rect x="741.4" y="399.2" width="1" height="2" fill="#5050ff" opacity="0.058"/><rect x="785.4" y="381.7" width="1" height="1" fill="#5050ff" opacity="0.064"/><rect x="1101.3" y="327.9" width="1" height="2" fill="#5050ff" opacity="0.050"/><rect x="999.5" y="310.0" width="1" height="2" fill="#5050ff" opacity="0.049"/><rect x="741.5" y="391.0" width="1" height="3" fill="#5050ff" opacity="0.069"/><rect x="1118.8" y="302.6" width="1" height="2" fill="#5050ff" opacity="0.056"/><rect x="1020.5" y="331.8" width="1" height="2" fill="#5050ff" opacity="0.027"/><rect x="947.9" y="354.4" width="1" height="1" fill="#5050ff" opacity="0.050"/><rect x="1027.0" y="316.9" width="1" height="1" fill="#5050ff" opacity="0.032"/><rect x="976.3" y="337.1" width="1" height="1" fill="#5050ff" opacity="0.036"/><rect x="1159.7" y="294.4" width="1" height="3" fill="#5050ff" opacity="0.046"/><rect x="924.8" y="368.3" width="1" height="1" fill="#5050ff" opacity="0.068"/><rect x="1034.8" y="319.6" width="1" height="1" fill="#5050ff" opacity="0.020"/><rect x="780.5" y="370.1" width="1" height="3" fill="#5050ff" opacity="0.056"/><rect x="924.8" y="362.7" width="1" height="2" fill="#5050ff" opacity="0.046"/><rect x="828.4" y="387.5" width="1" height="2" fill="#5050ff" opacity="0.025"/><rect x="996.4" y="319.3" width="1" height="2" fill="#5050ff" opacity="0.034"/><rect x="1068.8" y="314.3" width="1" height="2" fill="#5050ff" opacity="0.045"/><rect x="867.9" y="375.9" width="1" height="2" fill="#5050ff" opacity="0.046"/><rect x="998.9" y="347.1" width="1" height="1" fill="#5050ff" opacity="0.039"/><rect x="751.0" y="388.4" width="1" height="2" fill="#5050ff" opacity="0.063"/><rect x="1078.7" y="334.4" width="1" height="3" fill="#5050ff" opacity="0.042"/><rect x="990.3" y="329.5" width="1" height="2" fill="#5050ff" opacity="0.053"/><rect x="736.7" y="389.0" width="1" height="1" fill="#5050ff" opacity="0.054"/><rect x="903.4" y="371.9" width="1" height="2" fill="#5050ff" opacity="0.028"/><rect x="839.3" y="372.5" width="1" height="2" fill="#5050ff" opacity="0.021"/><rect x="779.5" y="387.5" width="1" height="2" fill="#5050ff" opacity="0.046"/><rect x="735.8" y="393.0" width="1" height="1" fill="#5050ff" opacity="0.063"/><rect x="963.2" y="352.7" width="1" height="3" fill="#5050ff" opacity="0.024"/><rect x="1172.1" y="318.2" width="1" height="2" fill="#5050ff" opacity="0.063"/><rect x="909.9" y="361.6" width="1" height="3" fill="#5050ff" opacity="0.047"/><rect x="1095.9" y="309.6" width="1" height="3" fill="#5050ff" opacity="0.020"/><rect x="851.7" y="386.1" width="1" height="1" fill="#5050ff" opacity="0.034"/><rect x="1146.2" y="297.3" width="1" height="2" fill="#5050ff" opacity="0.032"/><rect x="834.3" y="380.3" width="1" height="3" fill="#5050ff" opacity="0.042"/><rect x="864.9" y="375.4" width="1" height="3" fill="#5050ff" opacity="0.064"/><rect x="998.3" y="317.5" width="1" height="2" fill="#5050ff" opacity="0.060"/><rect x="998.0" y="340.2" width="1" height="2" fill="#5050ff" opacity="0.054"/><rect x="870.2" y="337.7" width="1" height="2" fill="#5050ff" opacity="0.045"/><rect x="992.2" y="351.3" width="1" height="3" fill="#5050ff" opacity="0.051"/><rect x="1121.8" y="297.0" width="1" height="3" fill="#5050ff" opacity="0.049"/><rect x="968.9" y="348.0" width="1" height="2" fill="#5050ff" opacity="0.067"/><rect x="737.6" y="401.0" width="1" height="2" fill="#5050ff" opacity="0.023"/><rect x="1170.9" y="295.5" width="1" height="3" fill="#5050ff" opacity="0.059"/><rect x="744.0" y="370.3" width="1" height="1" fill="#5050ff" opacity="0.036"/><rect x="885.3" y="370.6" width="1" height="2" fill="#5050ff" opacity="0.044"/><rect x="983.8" y="354.2" width="1" height="2" fill="#5050ff" opacity="0.032"/><rect x="870.6" y="358.6" width="1" height="3" fill="#5050ff" opacity="0.056"/><rect x="1148.5" y="293.6" width="1" height="3" fill="#5050ff" opacity="0.045"/><rect x="827.1" y="378.5" width="1" height="1" fill="#5050ff" opacity="0.049"/><rect x="995.1" y="346.9" width="1" height="1" fill="#5050ff" opacity="0.040"/><rect x="804.3" y="386.5" width="1" height="2" fill="#5050ff" opacity="0.054"/><rect x="1062.9" y="331.3" width="1" height="3" fill="#5050ff" opacity="0.070"/><rect x="788.9" y="386.6" width="1" height="2" fill="#5050ff" opacity="0.051"/><rect x="733.9" y="396.8" width="1" height="1" fill="#5050ff" opacity="0.022"/><rect x="713.5" y="400.8" width="1" height="2" fill="#5050ff" opacity="0.021"/><rect x="1084.7" y="307.9" width="1" height="2" fill="#5050ff" opacity="0.043"/><rect x="911.9" y="352.3" width="1" height="3" fill="#5050ff" opacity="0.047"/><rect x="1080.1" y="317.5" width="1" height="2" fill="#5050ff" opacity="0.025"/><rect x="802.1" y="377.7" width="1" height="2" fill="#5050ff" opacity="0.020"/><rect x="906.0" y="353.0" width="1" height="3" fill="#5050ff" opacity="0.061"/><rect x="819.7" y="410.8" width="1" height="3" fill="#5050ff" opacity="0.033"/><rect x="1017.3" y="334.2" width="1" height="3" fill="#5050ff" opacity="0.066"/><rect x="848.6" y="362.4" width="1" height="2" fill="#5050ff" opacity="0.040"/><rect x="695.3" y="407.6" width="1" height="2" fill="#5050ff" opacity="0.044"/><rect x="918.4" y="336.3" width="1" height="2" fill="#5050ff" opacity="0.021"/><rect x="987.1" y="328.2" width="1" height="3" fill="#5050ff" opacity="0.042"/><rect x="949.0" y="336.8" width="1" height="2" fill="#5050ff" opacity="0.045"/><rect x="1065.2" y="333.6" width="1" height="3" fill="#5050ff" opacity="0.041"/><rect x="730.8" y="391.9" width="1" height="3" fill="#5050ff" opacity="0.065"/><rect x="801.5" y="395.2" width="1" height="1" fill="#5050ff" opacity="0.026"/><rect x="759.5" y="385.1" width="1" height="3" fill="#5050ff" opacity="0.056"/><rect x="1019.4" y="328.5" width="1" height="3" fill="#5050ff" opacity="0.022"/><rect x="725.3" y="404.1" width="1" height="2" fill="#5050ff" opacity="0.058"/><rect x="922.3" y="374.0" width="1" height="2" fill="#5050ff" opacity="0.021"/><rect x="951.4" y="349.7" width="1" height="3" fill="#5050ff" opacity="0.029"/><rect x="919.4" y="359.5" width="1" height="3" fill="#5050ff" opacity="0.052"/><rect x="895.0" y="368.9" width="1" height="1" fill="#5050ff" opacity="0.064"/><rect x="1100.9" y="301.0" width="1" height="2" fill="#5050ff" opacity="0.059"/><rect x="981.3" y="349.1" width="1" height="2" fill="#5050ff" opacity="0.052"/><rect x="963.4" y="349.0" width="1" height="3" fill="#5050ff" opacity="0.050"/><rect x="1136.9" y="314.9" width="1" height="2" fill="#5050ff" opacity="0.020"/><rect x="849.5" y="393.3" width="1" height="3" fill="#5050ff" opacity="0.036"/><rect x="724.9" y="381.1" width="1" height="3" fill="#5050ff" opacity="0.021"/><rect x="913.6" y="346.4" width="1" height="2" fill="#5050ff" opacity="0.042"/><rect x="847.1" y="378.4" width="1" height="3" fill="#5050ff" opacity="0.048"/><rect x="871.9" y="357.0" width="1" height="2" fill="#5050ff" opacity="0.021"/><rect x="1014.3" y="314.3" width="1" height="1" fill="#5050ff" opacity="0.024"/><rect x="1082.8" y="312.0" width="1" height="1" fill="#5050ff" opacity="0.034"/><rect x="1015.3" y="347.6" width="1" height="2" fill="#5050ff" opacity="0.037"/><rect x="1137.3" y="325.4" width="1" height="3" fill="#5050ff" opacity="0.065"/><rect x="803.2" y="374.4" width="1" height="2" fill="#5050ff" opacity="0.053"/><rect x="915.3" y="372.3" width="1" height="3" fill="#5050ff" opacity="0.058"/><rect x="928.9" y="350.4" width="1" height="2" fill="#5050ff" opacity="0.049"/><rect x="949.7" y="351.3" width="1" height="1" fill="#5050ff" opacity="0.057"/><rect x="988.1" y="355.2" width="1" height="2" fill="#5050ff" opacity="0.022"/><rect x="922.9" y="350.3" width="1" height="2" fill="#5050ff" opacity="0.030"/><rect x="1114.2" y="301.1" width="1" height="3" fill="#5050ff" opacity="0.044"/><rect x="713.3" y="402.2" width="1" height="3" fill="#5050ff" opacity="0.048"/><rect x="765.7" y="392.3" width="1" height="3" fill="#5050ff" opacity="0.021"/><rect x="1056.3" y="328.5" width="1" height="2" fill="#5050ff" opacity="0.040"/><rect x="992.6" y="333.3" width="1" height="2" fill="#5050ff" opacity="0.065"/><rect x="1059.5" y="314.6" width="1" height="2" fill="#5050ff" opacity="0.055"/><rect x="1162.3" y="294.9" width="1" height="2" fill="#5050ff" opacity="0.057"/><rect x="840.8" y="368.2" width="1" height="2" fill="#5050ff" opacity="0.038"/><rect x="857.4" y="366.3" width="1" height="1" fill="#5050ff" opacity="0.040"/><rect x="835.4" y="380.7" width="1" height="2" fill="#5050ff" opacity="0.059"/><rect x="1043.8" y="299.2" width="1" height="3" fill="#5050ff" opacity="0.064"/><rect x="1107.4" y="323.8" width="1" height="3" fill="#5050ff" opacity="0.066"/><rect x="896.1" y="357.8" width="1" height="2" fill="#5050ff" opacity="0.038"/><rect x="889.6" y="360.5" width="1" height="3" fill="#5050ff" opacity="0.038"/><rect x="728.8" y="390.0" width="1" height="1" fill="#5050ff" opacity="0.062"/><rect x="765.0" y="398.5" width="1" height="2" fill="#5050ff" opacity="0.053"/><rect x="1031.5" y="337.0" width="1" height="2" fill="#5050ff" opacity="0.057"/><rect x="826.2" y="389.9" width="1" height="2" fill="#5050ff" opacity="0.036"/><rect x="864.1" y="369.5" width="1" height="1" fill="#5050ff" opacity="0.054"/><rect x="1099.0" y="326.4" width="1" height="3" fill="#5050ff" opacity="0.052"/><rect x="1098.3" y="308.1" width="1" height="2" fill="#5050ff" opacity="0.051"/><rect x="878.0" y="344.9" width="1" height="3" fill="#5050ff" opacity="0.032"/><rect x="833.7" y="378.1" width="1" height="2" fill="#5050ff" opacity="0.046"/><rect x="1024.6" y="332.2" width="1" height="3" fill="#5050ff" opacity="0.066"/><rect x="731.2" y="408.8" width="1" height="2" fill="#5050ff" opacity="0.035"/><rect x="876.8" y="375.7" width="1" height="1" fill="#5050ff" opacity="0.021"/><rect x="884.4" y="366.5" width="1" height="2" fill="#5050ff" opacity="0.042"/><rect x="1043.4" y="321.4" width="1" height="2" fill="#5050ff" opacity="0.043"/><rect x="1186.0" y="274.8" width="1" height="3" fill="#5050ff" opacity="0.050"/><rect x="743.5" y="392.8" width="1" height="3" fill="#5050ff" opacity="0.067"/><rect x="910.9" y="356.3" width="1" height="1" fill="#5050ff" opacity="0.035"/><rect x="1085.3" y="313.1" width="1" height="2" fill="#5050ff" opacity="0.040"/><rect x="833.4" y="378.8" width="1" height="3" fill="#5050ff" opacity="0.035"/><rect x="922.9" y="341.8" width="1" height="1" fill="#5050ff" opacity="0.038"/><rect x="882.6" y="366.3" width="1" height="1" fill="#5050ff" opacity="0.070"/><rect x="958.5" y="337.2" width="1" height="1" fill="#5050ff" opacity="0.054"/><rect x="977.5" y="346.2" width="1" height="2" fill="#5050ff" opacity="0.025"/><rect x="914.0" y="342.1" width="1" height="3" fill="#5050ff" opacity="0.054"/><rect x="933.8" y="354.5" width="1" height="2" fill="#5050ff" opacity="0.055"/><rect x="1173.8" y="315.8" width="1" height="2" fill="#5050ff" opacity="0.068"/><rect x="1054.6" y="327.2" width="1" height="3" fill="#5050ff" opacity="0.039"/><rect x="1065.0" y="292.3" width="1" height="3" fill="#5050ff" opacity="0.043"/><rect x="775.5" y="403.9" width="1" height="1" fill="#5050ff" opacity="0.027"/><rect x="942.4" y="340.1" width="1" height="1" fill="#5050ff" opacity="0.055"/><rect x="1127.2" y="325.3" width="1" height="2" fill="#5050ff" opacity="0.059"/><rect x="944.4" y="355.3" width="1" height="2" fill="#5050ff" opacity="0.041"/><rect x="848.2" y="383.7" width="1" height="3" fill="#5050ff" opacity="0.068"/><rect x="1013.7" y="326.4" width="1" height="1" fill="#5050ff" opacity="0.029"/><rect x="781.9" y="376.3" width="1" height="2" fill="#5050ff" opacity="0.028"/><rect x="935.9" y="351.1" width="1" height="2" fill="#5050ff" opacity="0.064"/><rect x="712.3" y="395.2" width="1" height="3" fill="#5050ff" opacity="0.033"/><rect x="1150.2" y="287.6" width="1" height="1" fill="#5050ff" opacity="0.027"/><rect x="1012.6" y="315.6" width="1" height="2" fill="#5050ff" opacity="0.057"/><rect x="1164.9" y="300.9" width="1" height="1" fill="#5050ff" opacity="0.034"/><rect x="1061.5" y="317.3" width="1" height="2" fill="#5050ff" opacity="0.057"/><rect x="708.9" y="402.7" width="1" height="2" fill="#5050ff" opacity="0.054"/><rect x="1006.5" y="344.2" width="1" height="1" fill="#5050ff" opacity="0.057"/><rect x="1002.9" y="340.5" width="1" height="1" fill="#5050ff" opacity="0.039"/><rect x="1113.2" y="303.9" width="1" height="3" fill="#5050ff" opacity="0.024"/><rect x="1038.4" y="321.5" width="1" height="3" fill="#5050ff" opacity="0.030"/><rect x="696.8" y="413.4" width="1" height="1" fill="#5050ff" opacity="0.068"/><rect x="1057.2" y="331.3" width="1" height="2" fill="#5050ff" opacity="0.039"/><rect x="1068.6" y="319.6" width="1" height="2" fill="#5050ff" opacity="0.063"/><rect x="1140.9" y="307.1" width="1" height="1" fill="#5050ff" opacity="0.048"/><rect x="976.1" y="342.1" width="1" height="3" fill="#5050ff" opacity="0.062"/><rect x="940.4" y="336.5" width="1" height="3" fill="#5050ff" opacity="0.069"/><rect x="895.4" y="374.4" width="1" height="3" fill="#5050ff" opacity="0.037"/><rect x="1156.8" y="326.3" width="1" height="3" fill="#5050ff" opacity="0.034"/><rect x="1125.9" y="304.9" width="1" height="2" fill="#5050ff" opacity="0.050"/><rect x="775.3" y="392.3" width="1" height="3" fill="#5050ff" opacity="0.053"/><rect x="1164.7" y="314.7" width="1" height="2" fill="#5050ff" opacity="0.066"/><rect x="964.7" y="321.4" width="1" height="1" fill="#5050ff" opacity="0.036"/><rect x="1149.8" y="288.0" width="1" height="1" fill="#5050ff" opacity="0.027"/><rect x="1012.2" y="311.4" width="1" height="1" fill="#5050ff" opacity="0.068"/><rect x="838.7" y="378.3" width="1" height="3" fill="#5050ff" opacity="0.021"/><rect x="907.4" y="351.9" width="1" height="1" fill="#5050ff" opacity="0.031"/><rect x="934.0" y="347.9" width="1" height="2" fill="#5050ff" opacity="0.026"/><rect x="973.9" y="344.4" width="1" height="3" fill="#5050ff" opacity="0.033"/><rect x="981.2" y="336.9" width="1" height="2" fill="#5050ff" opacity="0.050"/><rect x="877.1" y="357.9" width="1" height="3" fill="#5050ff" opacity="0.069"/><rect x="1086.9" y="291.9" width="1" height="2" fill="#5050ff" opacity="0.069"/><rect x="869.2" y="363.0" width="1" height="2" fill="#5050ff" opacity="0.033"/><rect x="755.4" y="397.0" width="1" height="3" fill="#5050ff" opacity="0.053"/><rect x="1067.9" y="324.6" width="1" height="3" fill="#5050ff" opacity="0.047"/><rect x="860.2" y="368.3" width="1" height="2" fill="#5050ff" opacity="0.026"/><rect x="839.3" y="378.1" width="1" height="2" fill="#5050ff" opacity="0.020"/><rect x="879.8" y="367.0" width="1" height="1" fill="#5050ff" opacity="0.068"/><rect x="839.3" y="362.9" width="1" height="2" fill="#5050ff" opacity="0.023"/><rect x="704.1" y="415.8" width="1" height="1" fill="#5050ff" opacity="0.054"/><rect x="1002.7" y="330.8" width="1" height="3" fill="#5050ff" opacity="0.057"/><rect x="1081.6" y="339.8" width="1" height="1" fill="#5050ff" opacity="0.047"/><rect x="836.2" y="366.9" width="1" height="1" fill="#5050ff" opacity="0.026"/><rect x="1078.5" y="308.2" width="1" height="2" fill="#5050ff" opacity="0.029"/><rect x="981.4" y="330.2" width="1" height="3" fill="#5050ff" opacity="0.040"/><rect x="834.7" y="379.2" width="1" height="1" fill="#5050ff" opacity="0.058"/><rect x="727.5" y="400.5" width="1" height="3" fill="#5050ff" opacity="0.044"/><rect x="800.5" y="372.0" width="1" height="2" fill="#5050ff" opacity="0.040"/><rect x="1081.1" y="308.9" width="1" height="2" fill="#5050ff" opacity="0.048"/><rect x="698.1" y="390.5" width="1" height="2" fill="#5050ff" opacity="0.024"/><rect x="720.7" y="405.5" width="1" height="3" fill="#5050ff" opacity="0.049"/><rect x="789.3" y="384.9" width="1" height="1" fill="#5050ff" opacity="0.046"/><rect x="848.1" y="373.2" width="1" height="2" fill="#5050ff" opacity="0.040"/><rect x="936.1" y="353.5" width="1" height="3" fill="#5050ff" opacity="0.065"/><rect x="1107.6" y="299.9" width="1" height="2" fill="#5050ff" opacity="0.042"/><rect x="889.4" y="365.8" width="1" height="3" fill="#5050ff" opacity="0.052"/><rect x="801.2" y="383.2" width="1" height="1" fill="#5050ff" opacity="0.041"/><rect x="1006.7" y="341.1" width="1" height="2" fill="#5050ff" opacity="0.044"/><rect x="1008.2" y="348.2" width="1" height="2" fill="#5050ff" opacity="0.027"/><rect x="692.8" y="415.1" width="1" height="2" fill="#5050ff" opacity="0.047"/><rect x="1121.0" y="321.4" width="1" height="2" fill="#5050ff" opacity="0.060"/><rect x="1082.3" y="310.8" width="1" height="2" fill="#5050ff" opacity="0.045"/><rect x="965.2" y="331.9" width="1" height="2" fill="#5050ff" opacity="0.032"/><rect x="931.8" y="352.5" width="1" height="2" fill="#5050ff" opacity="0.043"/><rect x="1165.7" y="305.8" width="1" height="1" fill="#5050ff" opacity="0.027"/><rect x="901.2" y="353.8" width="1" height="2" fill="#5050ff" opacity="0.058"/><rect x="929.3" y="356.4" width="1" height="3" fill="#5050ff" opacity="0.020"/><rect x="849.5" y="371.1" width="1" height="3" fill="#5050ff" opacity="0.030"/><rect x="866.6" y="356.0" width="1" height="1" fill="#5050ff" opacity="0.058"/><rect x="865.9" y="367.8" width="1" height="3" fill="#5050ff" opacity="0.029"/><rect x="903.1" y="349.4" width="1" height="1" fill="#5050ff" opacity="0.035"/><rect x="816.4" y="360.3" width="1" height="1" fill="#5050ff" opacity="0.050"/><rect x="1050.5" y="324.7" width="1" height="1" fill="#5050ff" opacity="0.055"/><rect x="1033.2" y="341.4" width="1" height="3" fill="#5050ff" opacity="0.053"/><rect x="955.8" y="339.8" width="1" height="2" fill="#5050ff" opacity="0.067"/><rect x="809.2" y="395.3" width="1" height="2" fill="#5050ff" opacity="0.031"/><rect x="1006.2" y="340.4" width="1" height="2" fill="#5050ff" opacity="0.020"/><rect x="779.5" y="393.1" width="1" height="2" fill="#5050ff" opacity="0.056"/><rect x="747.0" y="384.6" width="1" height="2" fill="#5050ff" opacity="0.054"/><rect x="737.4" y="387.9" width="1" height="2" fill="#5050ff" opacity="0.051"/><rect x="1180.7" y="283.2" width="1" height="3" fill="#5050ff" opacity="0.064"/><rect x="820.4" y="386.7" width="1" height="1" fill="#5050ff" opacity="0.067"/><rect x="1179.7" y="283.5" width="1" height="3" fill="#5050ff" opacity="0.022"/><rect x="1096.4" y="320.4" width="1" height="2" fill="#5050ff" opacity="0.044"/><rect x="1048.9" y="321.1" width="1" height="1" fill="#5050ff" opacity="0.049"/><rect x="724.8" y="407.6" width="1" height="3" fill="#5050ff" opacity="0.021"/><rect x="837.1" y="377.4" width="1" height="2" fill="#5050ff" opacity="0.035"/><rect x="1082.9" y="321.4" width="1" height="2" fill="#5050ff" opacity="0.051"/><rect x="1164.5" y="296.4" width="1" height="2" fill="#5050ff" opacity="0.056"/><rect x="840.4" y="383.2" width="1" height="2" fill="#5050ff" opacity="0.054"/><rect x="874.7" y="363.7" width="1" height="3" fill="#5050ff" opacity="0.023"/><rect x="1030.7" y="331.3" width="1" height="2" fill="#5050ff" opacity="0.046"/><rect x="870.3" y="362.2" width="1" height="1" fill="#5050ff" opacity="0.047"/><rect x="1055.7" y="309.5" width="1" height="3" fill="#5050ff" opacity="0.037"/><rect x="1141.5" y="289.6" width="1" height="2" fill="#5050ff" opacity="0.060"/><rect x="961.3" y="345.1" width="1" height="1" fill="#5050ff" opacity="0.070"/><rect x="1081.8" y="302.0" width="1" height="2" fill="#5050ff" opacity="0.023"/><rect x="731.4" y="394.3" width="1" height="1" fill="#5050ff" opacity="0.036"/><rect x="1125.6" y="312.9" width="1" height="2" fill="#5050ff" opacity="0.066"/><rect x="981.2" y="343.6" width="1" height="1" fill="#5050ff" opacity="0.020"/><rect x="1163.1" y="281.1" width="1" height="2" fill="#5050ff" opacity="0.026"/><rect x="785.0" y="369.4" width="1" height="2" fill="#5050ff" opacity="0.058"/><rect x="1164.1" y="304.9" width="1" height="2" fill="#5050ff" opacity="0.024"/><rect x="1109.8" y="303.3" width="1" height="1" fill="#5050ff" opacity="0.049"/><rect x="824.6" y="369.2" width="1" height="1" fill="#5050ff" opacity="0.046"/><rect x="746.1" y="386.7" width="1" height="3" fill="#5050ff" opacity="0.070"/><rect x="755.5" y="362.6" width="1" height="1" fill="#5050ff" opacity="0.047"/><rect x="719.5" y="414.3" width="1" height="3" fill="#5050ff" opacity="0.042"/><rect x="857.6" y="362.5" width="1" height="2" fill="#5050ff" opacity="0.038"/><rect x="810.4" y="382.5" width="1" height="2" fill="#5050ff" opacity="0.021"/><rect x="899.8" y="357.2" width="1" height="3" fill="#5050ff" opacity="0.062"/><rect x="996.4" y="338.7" width="1" height="3" fill="#5050ff" opacity="0.063"/><rect x="912.7" y="364.8" width="1" height="3" fill="#5050ff" opacity="0.033"/><rect x="795.9" y="387.2" width="1" height="2" fill="#5050ff" opacity="0.021"/><rect x="976.7" y="343.6" width="1" height="2" fill="#5050ff" opacity="0.022"/><rect x="1114.6" y="301.1" width="1" height="1" fill="#5050ff" opacity="0.028"/><rect x="757.6" y="377.6" width="1" height="2" fill="#5050ff" opacity="0.029"/><rect x="972.1" y="338.1" width="1" height="1" fill="#5050ff" opacity="0.064"/><rect x="700.6" y="412.7" width="1" height="2" fill="#5050ff" opacity="0.021"/><rect x="782.6" y="383.9" width="1" height="1" fill="#5050ff" opacity="0.051"/><rect x="1123.6" y="315.5" width="1" height="2" fill="#5050ff" opacity="0.031"/><rect x="721.4" y="395.2" width="1" height="2" fill="#5050ff" opacity="0.035"/><rect x="800.9" y="377.7" width="1" height="2" fill="#5050ff" opacity="0.032"/><rect x="1044.8" y="324.8" width="1" height="2" fill="#5050ff" opacity="0.069"/><rect x="952.8" y="337.4" width="1" height="1" fill="#5050ff" opacity="0.040"/><rect x="932.3" y="378.2" width="1" height="2" fill="#5050ff" opacity="0.061"/><rect x="711.4" y="375.5" width="1" height="1" fill="#5050ff" opacity="0.021"/><rect x="710.8" y="412.8" width="1" height="2" fill="#5050ff" opacity="0.060"/><rect x="1019.0" y="358.7" width="1" height="2" fill="#5050ff" opacity="0.021"/><rect x="847.6" y="372.6" width="1" height="1" fill="#5050ff" opacity="0.024"/><rect x="886.8" y="350.5" width="1" height="2" fill="#5050ff" opacity="0.063"/><rect x="1145.6" y="299.2" width="1" height="1" fill="#5050ff" opacity="0.059"/><rect x="1049.7" y="306.9" width="1" height="3" fill="#5050ff" opacity="0.041"/><rect x="757.3" y="412.9" width="1" height="1" fill="#5050ff" opacity="0.063"/><rect x="892.9" y="358.9" width="1" height="2" fill="#5050ff" opacity="0.068"/><rect x="940.1" y="355.3" width="1" height="3" fill="#5050ff" opacity="0.060"/><rect x="1181.7" y="284.1" width="1" height="1" fill="#5050ff" opacity="0.033"/><rect x="1085.0" y="313.4" width="1" height="2" fill="#5050ff" opacity="0.038"/><rect x="1127.9" y="315.9" width="1" height="3" fill="#5050ff" opacity="0.060"/><rect x="1031.9" y="326.2" width="1" height="2" fill="#5050ff" opacity="0.039"/><rect x="1078.6" y="321.5" width="1" height="2" fill="#5050ff" opacity="0.049"/><rect x="799.5" y="382.9" width="1" height="2" fill="#5050ff" opacity="0.021"/><rect x="1077.7" y="315.6" width="1" height="1" fill="#5050ff" opacity="0.042"/><rect x="751.5" y="386.2" width="1" height="3" fill="#5050ff" opacity="0.042"/><rect x="920.7" y="370.2" width="1" height="2" fill="#5050ff" opacity="0.064"/><rect x="760.8" y="389.0" width="1" height="3" fill="#5050ff" opacity="0.023"/><rect x="1037.2" y="315.1" width="1" height="2" fill="#5050ff" opacity="0.031"/><rect x="1054.4" y="316.2" width="1" height="1" fill="#5050ff" opacity="0.057"/><rect x="1049.6" y="341.6" width="1" height="2" fill="#5050ff" opacity="0.066"/><rect x="876.1" y="372.9" width="1" height="1" fill="#5050ff" opacity="0.032"/><rect x="715.0" y="407.3" width="1" height="2" fill="#5050ff" opacity="0.024"/><rect x="904.4" y="369.2" width="1" height="1" fill="#5050ff" opacity="0.028"/><rect x="731.2" y="390.5" width="1" height="2" fill="#5050ff" opacity="0.029"/><rect x="894.8" y="378.5" width="1" height="1" fill="#5050ff" opacity="0.065"/><rect x="1042.9" y="307.4" width="1" height="1" fill="#5050ff" opacity="0.060"/><rect x="905.5" y="364.3" width="1" height="1" fill="#5050ff" opacity="0.035"/><rect x="829.8" y="400.0" width="1" height="2" fill="#5050ff" opacity="0.054"/><rect x="867.4" y="376.0" width="1" height="1" fill="#5050ff" opacity="0.051"/><rect x="806.0" y="388.2" width="1" height="1" fill="#5050ff" opacity="0.057"/><rect x="884.0" y="373.4" width="1" height="2" fill="#5050ff" opacity="0.069"/><rect x="1101.9" y="281.9" width="1" height="1" fill="#5050ff" opacity="0.069"/><rect x="728.7" y="390.8" width="1" height="3" fill="#5050ff" opacity="0.051"/><rect x="1073.1" y="300.0" width="1" height="2" fill="#5050ff" opacity="0.062"/><rect x="996.4" y="325.3" width="1" height="3" fill="#5050ff" opacity="0.024"/><rect x="1157.6" y="289.0" width="1" height="1" fill="#5050ff" opacity="0.037"/><rect x="1165.9" y="284.8" width="1" height="2" fill="#5050ff" opacity="0.023"/><rect x="1003.1" y="336.0" width="1" height="1" fill="#5050ff" opacity="0.030"/><rect x="773.5" y="390.3" width="1" height="3" fill="#5050ff" opacity="0.028"/><rect x="1013.4" y="323.2" width="1" height="2" fill="#5050ff" opacity="0.027"/><rect x="809.3" y="359.3" width="1" height="1" fill="#5050ff" opacity="0.038"/><rect x="706.4" y="386.3" width="1" height="2" fill="#5050ff" opacity="0.039"/><rect x="967.5" y="368.7" width="1" height="1" fill="#5050ff" opacity="0.056"/><rect x="931.0" y="345.1" width="1" height="2" fill="#5050ff" opacity="0.034"/><rect x="1144.8" y="294.2" width="1" height="2" fill="#5050ff" opacity="0.063"/><rect x="735.3" y="409.3" width="1" height="2" fill="#5050ff" opacity="0.069"/><rect x="1058.4" y="331.3" width="1" height="1" fill="#5050ff" opacity="0.030"/><rect x="700.7" y="405.1" width="1" height="1" fill="#5050ff" opacity="0.026"/><rect x="713.2" y="404.6" width="1" height="1" fill="#5050ff" opacity="0.057"/><rect x="799.8" y="389.2" width="1" height="2" fill="#5050ff" opacity="0.067"/><rect x="964.8" y="347.5" width="1" height="2" fill="#5050ff" opacity="0.020"/><rect x="1168.4" y="309.0" width="1" height="2" fill="#5050ff" opacity="0.066"/><rect x="732.0" y="391.3" width="1" height="1" fill="#5050ff" opacity="0.022"/><rect x="900.9" y="356.5" width="1" height="3" fill="#5050ff" opacity="0.049"/><rect x="974.5" y="354.4" width="1" height="2" fill="#5050ff" opacity="0.064"/><rect x="930.4" y="355.0" width="1" height="2" fill="#5050ff" opacity="0.067"/><rect x="1069.7" y="341.8" width="1" height="1" fill="#5050ff" opacity="0.042"/><rect x="905.3" y="352.4" width="1" height="1" fill="#5050ff" opacity="0.062"/><rect x="747.5" y="392.0" width="1" height="2" fill="#5050ff" opacity="0.051"/><rect x="1085.2" y="310.3" width="1" height="1" fill="#5050ff" opacity="0.052"/><rect x="1085.3" y="325.1" width="1" height="3" fill="#5050ff" opacity="0.057"/><rect x="1181.5" y="282.5" width="1" height="3" fill="#5050ff" opacity="0.064"/><rect x="1057.3" y="328.3" width="1" height="2" fill="#5050ff" opacity="0.054"/><rect x="769.7" y="379.3" width="1" height="2" fill="#5050ff" opacity="0.021"/><rect x="785.6" y="398.6" width="1" height="2" fill="#5050ff" opacity="0.028"/><rect x="1183.2" y="277.8" width="1" height="2" fill="#5050ff" opacity="0.039"/><rect x="928.4" y="366.2" width="1" height="1" fill="#5050ff" opacity="0.052"/><rect x="751.7" y="393.4" width="1" height="3" fill="#5050ff" opacity="0.055"/><rect x="1144.2" y="291.4" width="1" height="1" fill="#5050ff" opacity="0.032"/><rect x="850.2" y="376.1" width="1" height="1" fill="#5050ff" opacity="0.066"/><rect x="1101.9" y="320.6" width="1" height="1" fill="#5050ff" opacity="0.054"/><rect x="850.8" y="375.3" width="1" height="3" fill="#5050ff" opacity="0.050"/><rect x="1136.5" y="292.1" width="1" height="2" fill="#5050ff" opacity="0.061"/><rect x="709.6" y="401.4" width="1" height="2" fill="#5050ff" opacity="0.028"/><rect x="706.3" y="412.0" width="1" height="1" fill="#5050ff" opacity="0.044"/><rect x="883.0" y="372.9" width="1" height="2" fill="#5050ff" opacity="0.062"/><rect x="810.4" y="381.2" width="1" height="1" fill="#5050ff" opacity="0.058"/><rect x="739.2" y="388.4" width="1" height="3" fill="#5050ff" opacity="0.051"/><rect x="820.1" y="370.0" width="1" height="3" fill="#5050ff" opacity="0.069"/><rect x="1100.7" y="314.5" width="1" height="2" fill="#5050ff" opacity="0.054"/><rect x="908.6" y="365.6" width="1" height="3" fill="#5050ff" opacity="0.063"/><rect x="1168.6" y="296.9" width="1" height="2" fill="#5050ff" opacity="0.055"/><rect x="771.0" y="377.3" width="1" height="2" fill="#5050ff" opacity="0.048"/><rect x="1116.8" y="320.0" width="1" height="2" fill="#5050ff" opacity="0.030"/><rect x="1080.5" y="331.1" width="1" height="2" fill="#5050ff" opacity="0.068"/><rect x="914.3" y="359.4" width="1" height="2" fill="#5050ff" opacity="0.068"/><rect x="1116.3" y="302.9" width="1" height="1" fill="#5050ff" opacity="0.039"/><rect x="933.5" y="352.2" width="1" height="3" fill="#5050ff" opacity="0.021"/><rect x="890.1" y="360.2" width="1" height="3" fill="#5050ff" opacity="0.037"/><rect x="1104.4" y="315.6" width="1" height="2" fill="#5050ff" opacity="0.066"/><rect x="984.8" y="352.3" width="1" height="2" fill="#5050ff" opacity="0.033"/><rect x="920.7" y="359.2" width="1" height="2" fill="#5050ff" opacity="0.058"/><rect x="942.7" y="363.6" width="1" height="3" fill="#5050ff" opacity="0.030"/><rect x="896.1" y="372.9" width="1" height="1" fill="#5050ff" opacity="0.020"/><rect x="1118.4" y="279.9" width="1" height="3" fill="#5050ff" opacity="0.021"/><rect x="935.5" y="343.4" width="1" height="2" fill="#5050ff" opacity="0.047"/><rect x="1012.2" y="311.6" width="1" height="2" fill="#5050ff" opacity="0.042"/><rect x="964.1" y="330.9" width="1" height="2" fill="#5050ff" opacity="0.051"/><rect x="1019.4" y="341.8" width="1" height="1" fill="#5050ff" opacity="0.041"/><rect x="1114.2" y="308.3" width="1" height="2" fill="#5050ff" opacity="0.061"/><rect x="1142.4" y="311.1" width="1" height="2" fill="#5050ff" opacity="0.036"/><rect x="1176.8" y="298.7" width="1" height="2" fill="#5050ff" opacity="0.060"/><rect x="984.0" y="319.4" width="1" height="2" fill="#5050ff" opacity="0.062"/><rect x="1073.5" y="330.7" width="1" height="3" fill="#5050ff" opacity="0.063"/><rect x="869.9" y="367.1" width="1" height="3" fill="#5050ff" opacity="0.055"/><rect x="1146.9" y="289.8" width="1" height="3" fill="#5050ff" opacity="0.065"/><rect x="911.0" y="374.9" width="1" height="2" fill="#5050ff" opacity="0.025"/><rect x="898.2" y="368.8" width="1" height="2" fill="#5050ff" opacity="0.025"/><rect x="1086.1" y="323.1" width="1" height="2" fill="#5050ff" opacity="0.058"/><rect x="1008.7" y="344.0" width="1" height="2" fill="#5050ff" opacity="0.052"/><rect x="885.1" y="349.5" width="1" height="1" fill="#5050ff" opacity="0.030"/><rect x="1127.1" y="313.1" width="1" height="2" fill="#5050ff" opacity="0.023"/><rect x="1037.1" y="322.3" width="1" height="1" fill="#5050ff" opacity="0.035"/><rect x="992.4" y="327.7" width="1" height="2" fill="#5050ff" opacity="0.047"/><rect x="996.7" y="340.2" width="1" height="3" fill="#5050ff" opacity="0.055"/><rect x="841.1" y="357.1" width="1" height="3" fill="#5050ff" opacity="0.034"/><rect x="732.3" y="384.5" width="1" height="2" fill="#5050ff" opacity="0.032"/><rect x="962.9" y="350.2" width="1" height="2" fill="#5050ff" opacity="0.069"/><rect x="767.9" y="391.7" width="1" height="2" fill="#5050ff" opacity="0.038"/><rect x="923.6" y="370.3" width="1" height="3" fill="#5050ff" opacity="0.061"/><rect x="825.4" y="393.5" width="1" height="1" fill="#5050ff" opacity="0.035"/><rect x="719.2" y="408.0" width="1" height="2" fill="#5050ff" opacity="0.032"/><rect x="1161.7" y="278.3" width="1" height="2" fill="#5050ff" opacity="0.021"/><rect x="933.0" y="360.3" width="1" height="2" fill="#5050ff" opacity="0.039"/><rect x="710.9" y="404.9" width="1" height="3" fill="#5050ff" opacity="0.046"/><rect x="792.5" y="396.4" width="1" height="3" fill="#5050ff" opacity="0.021"/><rect x="716.6" y="400.9" width="1" height="2" fill="#5050ff" opacity="0.066"/><rect x="1057.6" y="327.2" width="1" height="2" fill="#5050ff" opacity="0.043"/><rect x="1011.4" y="343.8" width="1" height="3" fill="#5050ff" opacity="0.061"/><rect x="777.8" y="385.6" width="1" height="2" fill="#5050ff" opacity="0.053"/><rect x="1171.5" y="336.7" width="1" height="2" fill="#5050ff" opacity="0.023"/><rect x="757.6" y="410.5" width="1" height="3" fill="#5050ff" opacity="0.047"/><ellipse cx="792.3" cy="373.5" rx="1.4" ry="3" fill="#1010ff"/><ellipse cx="792" cy="386" rx="0.8" ry="2.5" fill="#4040ff" opacity="0.5"/><ellipse cx="805.2" cy="376.5" rx="2.3" ry="5.2" fill="#3a3aff" opacity="0.85"/><ellipse cx="805.2" cy="376.5" rx="1.4" ry="2.8" fill="#f0506a"/><ellipse cx="805" cy="364" rx="1" ry="1.3" fill="#6060ff" opacity="0.5"/><ellipse cx="805" cy="384" rx="1.2" ry="2" fill="#6060ff" opacity="0.5"/><ellipse cx="826" cy="374.8" rx="1.5" ry="2.3" fill="#1010ff"/><rect x="818" y="369.5" width="4" height="1" fill="#8080ff" opacity="0.4"/><rect x="820.5" y="362" width="1" height="18" fill="#8080ff" opacity="0.2"/><rect x="847" y="367" width="1.5" height="3" fill="#6060ff" opacity="0.45"/><rect x="832" y="364" width="1" height="6" fill="#8080ff" opacity="0.3"/><path d="M1031.3 311.8A3.8 5 0 0 1 1031.3 321.8Z" fill="#1a1aff"/><path d="M1031.3 313.6A2.2 3.2 0 0 1 1031.3 320Z" fill="#f01830"/><rect x="1053.4" y="310" width="1.3" height="24" fill="#3a3aff" opacity="0.65"/><rect x="1074.5" y="322" width="2" height="2.5" fill="#3030ff" opacity="0.8"/><rect x="1046.5" y="311" width="1" height="8" fill="#6060ff" opacity="0.35"/><rect x="922" y="339" width="1.5" height="3" fill="#5050ff" opacity="0.4"/><rect x="1022" y="316" width="1" height="5" fill="#5050ff" opacity="0.3"/><rect x="1002" y="320" width="1" height="4" fill="#5050ff" opacity="0.3"/><path d="M689.8 273V418.6H1187.2V273" fill="none" stroke="#5a5a5a" stroke-width="1.4"/><path d="M689 272.8H1187.5" stroke="#5a5a5a" stroke-width="1.2"/><defs><linearGradient id="cb" x1="0" y1="0" x2="0" y2="1"><stop offset="0" stop-color="#ff0000"/><stop offset="0.2" stop-color="#f80030"/><stop offset="0.45" stop-color="#d800d8"/><stop offset="0.62" stop-color="#6000f0"/><stop offset="0.76" stop-color="#0000ff"/><stop offset="0.82" stop-color="#2020ff"/><stop offset="1" stop-color="#ffffff"/></linearGradient></defs><rect x="1235.5" y="283" width="33.5" height="100.5" fill="url(#cb)" stroke="#444" stroke-width="1"/><path d="M1231.5 288.4H1235.5" stroke="#333" stroke-width="1.1"/><path d="M1231.5 299.3H1235.5" stroke="#333" stroke-width="1.1"/><path d="M1231.5 310.2H1235.5" stroke="#333" stroke-width="1.1"/><path d="M1230.5 321.1H1235.5" stroke="#333" stroke-width="1.1"/><path d="M1231.5 332.0H1235.5" stroke="#333" stroke-width="1.1"/><path d="M1230.5 342.9H1235.5" stroke="#333" stroke-width="1.1"/><path d="M1231.5 353.8H1235.5" stroke="#333" stroke-width="1.1"/><path d="M1230.5 364.7H1235.5" stroke="#333" stroke-width="1.1"/><path d="M1231.5 375.6H1235.5" stroke="#333" stroke-width="1.1"/><text x="1227" y="283" text-anchor="end" font-family="Liberation Sans" font-size="11" fill="#222" stroke="#222" stroke-width="0.15">Int.</text><text x="1223" y="302" text-anchor="end" font-family="Liberation Sans" font-size="11" fill="#222" stroke="#222" stroke-width="0.15">x10</text><text x="1223.5" y="295" font-family="Liberation Sans" font-size="9" fill="#222">4</text><text x="1225" y="325" text-anchor="end" font-family="Liberation Sans" font-size="11" fill="#222" stroke="#222" stroke-width="0.15">0.75</text><text x="1225" y="347" text-anchor="end" font-family="Liberation Sans" font-size="11" fill="#222" stroke="#222" stroke-width="0.15">0.5</text><text x="1225" y="368.5" text-anchor="end" font-family="Liberation Sans" font-size="11" fill="#222" stroke="#222" stroke-width="0.15">0.25</text><text x="1225" y="390" text-anchor="end" font-family="Liberation Sans" font-size="11" fill="#222" stroke="#222" stroke-width="0.15">0.0</text><rect x="1197.5" y="397" width="13" height="12" fill="#cce4f7" stroke="#99ccf5"/><path d="M1204 398.5L1201.5 402.5H1206.5ZM1204 407.5L1201.5 403.5H1206.5Z" fill="#333"/><rect x="1230.5" y="390" width="38" height="19" fill="#e1e1e1" stroke="#c0c0c0"/><defs><linearGradient id="cb2" x1="0" y1="0" x2="0" y2="1"><stop offset="0" stop-color="#ff0000"/><stop offset="0.45" stop-color="#ff0040"/><stop offset="0.7" stop-color="#b000e0"/><stop offset="1" stop-color="#2020ff"/></linearGradient></defs><rect x="1236" y="393" width="14.5" height="14" fill="url(#cb2)"/><path d="M1254 395H1265L1259.5 404Z" fill="#111"/><rect x="689.5" y="422" width="497.5" height="95" fill="#fff"/><polygon points="691.1,514.3 691.05,513.49 691.53,513.39 692.01,513.35 692.50,513.24 692.98,513.40 693.46,513.26 693.94,513.95 694.42,513.61 694.90,513.24 695.38,513.47 695.86,513.27 696.34,513.88 696.83,513.61 697.31,513.78 697.79,513.55 698.27,513.52 698.75,513.96 699.23,513.80 699.71,513.75 700.19,513.26 700.67,513.38 701.16,513.85 701.64,513.35 702.12,513.86 702.60,513.49 703.08,513.87 703.56,513.97 704.04,513.29 704.52,513.81 705.00,513.80 705.49,513.21 705.97,513.29 706.45,513.74 706.93,513.22 707.41,513.55 707.89,513.44 708.37,513.81 708.85,513.24 709.34,513.43 709.82,513.22 710.30,513.28 710.78,513.74 711.26,513.69 711.74,513.84 712.22,513.86 712.70,513.92 713.18,513.74 713.67,513.50 714.15,513.97 714.63,513.44 715.11,513.71 715.59,513.73 716.07,513.34 716.55,513.60 717.03,513.72 717.51,513.60 718.00,513.42 718.48,513.92 718.96,513.21 719.44,513.95 719.92,513.39 720.40,513.31 720.88,513.95 721.36,513.36 721.85,513.69 722.33,513.52 722.81,513.96 723.29,513.93 723.77,513.83 724.25,513.23 724.73,513.82 725.21,513.38 725.69,513.25 726.18,513.24 726.66,513.70 727.14,513.69 727.62,513.56 728.10,513.37 728.58,513.88 729.06,513.39 729.54,513.35 730.02,513.30 730.51,513.94 730.99,513.24 731.47,513.90 731.95,513.70 732.43,513.50 732.91,513.26 733.39,513.71 733.87,513.25 734.36,513.55 734.84,513.73 735.32,513.72 735.80,513.83 736.28,513.91 736.76,513.85 737.24,513.44 737.72,513.20 738.20,513.84 738.69,513.93 739.17,513.21 739.65,513.56 740.13,513.65 740.61,513.78 741.09,513.51 741.57,513.33 742.05,513.62 742.53,513.64 743.02,513.93 743.50,513.26 743.98,513.94 744.46,513.59 744.94,513.32 745.42,513.87 745.90,513.40 746.38,513.23 746.87,513.48 747.35,513.36 747.83,513.89 748.31,513.63 748.79,513.85 749.27,513.32 749.75,513.74 750.23,513.62 750.71,513.20 751.20,513.31 751.68,513.21 752.16,513.62 752.64,513.59 753.12,513.40 753.60,513.60 754.08,513.74 754.56,513.66 755.04,513.86 755.53,513.68 756.01,513.20 756.49,513.23 756.97,513.48 757.45,513.58 757.93,513.71 758.41,513.90 758.89,513.76 759.37,513.36 759.86,513.30 760.34,513.69 760.82,513.36 761.30,513.37 761.78,513.43 762.26,513.45 762.74,513.38 763.22,513.69 763.71,513.42 764.19,513.75 764.67,513.59 765.15,513.37 765.63,513.43 766.11,513.74 766.59,513.24 767.07,513.47 767.55,513.52 768.04,513.96 768.52,513.55 769.00,513.77 769.48,513.45 769.96,513.61 770.44,513.34 770.92,513.47 771.40,513.35 771.88,513.70 772.37,513.47 772.85,513.40 773.33,513.33 773.81,513.70 774.29,513.32 774.77,513.30 775.25,513.44 775.73,513.21 776.22,513.23 776.70,513.57 777.18,513.56 777.66,513.84 778.14,513.32 778.62,513.24 779.10,513.60 779.58,513.43 780.06,513.41 780.55,513.40 781.03,513.84 781.51,513.36 781.99,513.52 782.47,513.45 782.95,513.64 783.43,513.49 783.91,513.37 784.39,513.48 784.88,513.41 785.36,513.95 785.84,513.84 786.32,513.63 786.80,513.47 787.28,513.80 787.76,513.44 788.24,513.48 788.73,513.94 789.21,513.60 789.69,513.79 790.17,513.93 790.65,513.68 791.13,508.87 791.61,499.46 791.61,499.45 792.09,508.61 792.57,506.26 792.67,505.86 793.06,511.24 793.54,513.50 794.02,513.78 794.50,513.27 794.98,513.97 795.46,513.65 795.94,513.75 796.42,513.65 796.90,513.88 797.39,513.33 797.87,513.68 798.35,513.94 798.83,513.49 799.31,513.90 799.79,513.55 800.27,513.71 800.75,513.52 801.23,513.23 801.72,513.34 802.20,513.64 802.68,513.34 803.16,513.47 803.64,513.68 804.12,513.78 804.60,503.31 805.08,439.40 805.18,434.77 805.57,480.69 806.05,485.11 806.24,476.02 806.53,493.69 807.01,501.42 807.10,500.55 807.49,509.67 807.97,513.47 808.45,513.86 808.93,513.48 809.41,513.28 809.90,513.68 810.38,513.63 810.86,513.79 811.34,513.74 811.82,513.22 812.30,513.67 812.78,513.22 813.26,513.23 813.74,513.19 814.23,512.40 814.71,511.00 814.71,511.37 815.19,512.28 815.67,513.40 816.15,513.18 816.63,513.59 817.11,513.75 817.59,513.60 818.08,513.87 818.56,513.49 819.04,513.63 819.52,513.74 820.00,513.34 820.48,513.16 820.96,513.19 821.44,511.61 821.92,511.10 821.92,510.59 822.41,511.42 822.89,513.01 823.37,513.60 823.85,513.83 824.33,513.20 824.81,513.74 825.29,513.50 825.77,513.60 826.25,513.47 826.74,513.50 827.22,512.90 827.70,508.49 827.99,505.42 828.18,507.02 828.66,510.40 828.95,509.18 829.14,510.48 829.62,513.46 830.10,513.61 830.59,513.69 831.07,513.39 831.55,513.51 832.03,513.94 832.51,513.77 832.99,513.62 833.47,513.26 833.95,513.28 834.43,513.55 834.92,513.96 835.40,513.36 835.88,513.56 836.36,513.14 836.84,512.45 837.32,512.15 837.32,512.27 837.80,512.29 838.28,513.28 838.76,513.58 839.25,513.30 839.73,513.82 840.21,513.74 840.69,513.33 841.17,513.91 841.65,513.24 842.13,513.05 842.61,512.66 843.10,512.42 843.10,512.04 843.58,512.29 844.06,513.47 844.54,513.52 845.02,513.53 845.50,513.57 845.98,513.63 846.46,513.57 846.94,512.85 847.43,512.23 847.91,512.59 847.91,512.46 848.39,512.22 848.87,512.69 849.35,513.18 849.83,513.87 850.31,513.39 850.79,513.21 851.27,513.20 851.76,513.43 852.24,513.93 852.72,513.32 853.20,513.80 853.68,513.47 854.16,513.23 854.64,513.42 855.12,513.86 855.60,513.74 856.09,513.26 856.57,513.85 857.05,513.50 857.53,513.65 858.01,513.84 858.49,513.49 858.97,513.93 859.45,513.88 859.94,513.68 860.42,513.91 860.90,513.92 861.38,513.52 861.86,513.39 862.34,513.29 862.82,513.86 863.30,513.63 863.78,513.73 864.27,513.50 864.75,513.59 865.23,513.24 865.71,513.68 866.19,513.93 866.67,513.43 867.15,513.85 867.63,513.48 868.11,513.58 868.60,513.26 869.08,513.54 869.56,513.49 870.04,513.76 870.52,513.54 871.00,513.77 871.48,513.39 871.96,513.57 872.45,513.87 872.93,513.79 873.41,513.68 873.89,513.40 874.37,513.83 874.85,513.42 875.33,513.46 875.81,513.90 876.29,513.45 876.78,513.90 877.26,513.87 877.74,513.51 878.22,513.78 878.70,513.29 879.18,513.60 879.66,513.72 880.14,513.35 880.62,513.95 881.11,513.41 881.59,513.93 882.07,513.85 882.55,513.23 883.03,513.44 883.51,513.80 883.99,513.88 884.47,513.22 884.96,513.45 885.44,513.33 885.92,513.86 886.40,513.49 886.88,513.69 887.36,513.79 887.84,513.71 888.32,513.49 888.80,513.70 889.29,513.67 889.77,513.86 890.25,513.33 890.73,513.47 891.21,513.35 891.69,513.63 892.17,513.31 892.65,513.57 893.13,513.51 893.62,513.53 894.10,513.40 894.58,513.66 895.06,513.89 895.54,513.94 896.02,513.81 896.50,513.94 896.98,513.28 897.46,513.60 897.95,513.38 898.43,513.97 898.91,513.60 899.39,513.28 899.87,513.49 900.35,513.64 900.83,513.61 901.31,513.89 901.80,513.85 902.28,513.85 902.76,513.68 903.24,513.67 903.72,513.29 904.20,513.85 904.68,513.77 905.16,513.75 905.64,513.84 906.13,513.75 906.61,513.79 907.09,513.60 907.57,513.94 908.05,513.25 908.53,513.68 909.01,513.24 909.49,513.44 909.97,513.45 910.46,513.60 910.94,513.24 911.42,513.88 911.90,513.45 912.38,513.74 912.86,513.45 913.34,513.40 913.82,513.84 914.31,513.81 914.79,513.95 915.27,513.79 915.75,513.91 916.23,513.66 916.71,513.22 917.19,513.69 917.67,513.73 918.15,513.61 918.64,513.75 919.12,513.40 919.60,513.41 920.08,513.84 920.56,513.78 921.04,513.45 921.52,513.24 922.00,513.47 922.48,513.64 922.97,513.21 923.45,513.96 923.93,513.92 924.41,513.37 924.89,513.65 925.37,513.93 925.85,513.54 926.33,513.20 926.82,513.57 927.30,513.70 927.78,513.90 928.26,513.91 928.74,513.27 929.22,513.59 929.70,513.24 930.18,513.93 930.66,513.78 931.15,513.93 931.63,513.66 932.11,513.92 932.59,513.77 933.07,513.65 933.55,513.73 934.03,513.93 934.51,513.94 934.99,513.22 935.48,513.83 935.96,513.58 936.44,513.66 936.92,513.56 937.40,513.90 937.88,513.73 938.36,513.88 938.84,513.55 939.33,513.26 939.81,513.51 940.29,513.31 940.77,513.80 941.25,513.96 941.73,513.55 942.21,513.59 942.69,513.53 943.17,513.68 943.66,513.48 944.14,513.41 944.62,513.26 945.10,513.73 945.58,513.62 946.06,513.33 946.54,513.80 947.02,513.88 947.50,513.73 947.99,513.90 948.47,513.37 948.95,513.33 949.43,513.73 949.91,513.87 950.39,513.91 950.87,513.78 951.35,513.90 951.83,513.64 952.32,513.52 952.80,513.78 953.28,513.92 953.76,513.43 954.24,513.93 954.72,513.81 955.20,513.75 955.68,513.68 956.17,513.89 956.65,513.64 957.13,513.73 957.61,513.39 958.09,513.54 958.57,513.28 959.05,513.46 959.53,513.38 960.01,513.52 960.50,513.63 960.98,513.34 961.46,513.46 961.94,513.23 962.42,513.41 962.90,513.43 963.38,513.76 963.86,513.34 964.34,513.67 964.83,513.87 965.31,513.92 965.79,513.84 966.27,513.77 966.75,513.45 967.23,513.75 967.71,513.92 968.19,513.38 968.68,513.54 969.16,513.95 969.64,513.93 970.12,513.87 970.60,513.69 971.08,513.30 971.56,513.23 972.04,513.50 972.52,513.79 973.01,513.64 973.49,513.69 973.97,513.71 974.45,513.96 974.93,513.52 975.41,513.33 975.89,513.41 976.37,513.89 976.85,513.56 977.34,513.84 977.82,513.42 978.30,513.62 978.78,513.24 979.26,513.35 979.74,513.88 980.22,513.72 980.70,513.26 981.19,513.61 981.67,513.63 982.15,513.63 982.63,513.37 983.11,513.24 983.59,513.56 984.07,513.22 984.55,513.51 985.03,513.89 985.52,513.33 986.00,513.58 986.48,513.61 986.96,512.40 987.44,512.84 987.44,512.42 987.92,512.78 988.40,512.96 988.88,513.60 989.36,513.79 989.85,513.75 990.33,513.81 990.81,513.53 991.29,513.69 991.77,513.39 992.25,513.78 992.73,513.70 993.21,513.78 993.69,513.21 994.18,513.32 994.66,513.31 995.14,513.49 995.62,513.66 996.10,513.86 996.58,513.33 997.06,513.59 997.54,513.94 998.03,513.84 998.51,513.89 998.99,513.41 999.47,513.27 999.95,513.81 1000.43,513.35 1000.91,513.72 1001.39,513.44 1001.87,513.30 1002.36,513.49 1002.84,513.35 1003.32,513.68 1003.80,513.96 1004.28,513.57 1004.76,513.51 1005.24,513.83 1005.72,513.67 1006.20,513.72 1006.69,513.95 1007.17,513.73 1007.65,513.67 1008.13,513.60 1008.61,513.42 1009.09,513.66 1009.57,513.21 1010.05,513.34 1010.54,513.25 1011.02,513.43 1011.50,513.45 1011.98,513.55 1012.46,513.35 1012.94,513.69 1013.42,513.51 1013.90,513.44 1014.38,513.56 1014.87,513.75 1015.35,513.91 1015.83,513.90 1016.31,513.69 1016.79,513.52 1017.27,513.38 1017.75,513.42 1018.23,513.73 1018.71,513.25 1019.20,513.76 1019.68,513.41 1020.16,513.91 1020.64,513.39 1021.12,513.45 1021.60,513.23 1022.08,513.27 1022.56,513.44 1023.05,513.32 1023.53,513.40 1024.01,513.50 1024.49,513.81 1024.97,513.57 1025.45,513.28 1025.93,513.78 1026.41,513.21 1026.89,513.55 1027.38,513.66 1027.86,513.97 1028.34,513.67 1028.82,513.83 1029.30,513.46 1029.78,513.27 1030.26,513.26 1030.74,513.49 1031.22,513.65 1031.71,509.56 1032.19,457.94 1032.38,443.90 1032.67,470.51 1033.15,476.12 1033.34,464.37 1033.63,488.56 1034.11,501.05 1034.30,498.26 1034.59,503.86 1035.07,507.75 1035.17,508.16 1035.56,511.87 1036.04,513.36 1036.52,513.79 1037.00,513.92 1037.48,513.53 1037.96,513.33 1038.44,513.29 1038.92,513.41 1039.40,513.65 1039.89,513.64 1040.37,513.56 1040.85,513.27 1041.33,513.73 1041.81,513.75 1042.29,513.50 1042.77,513.22 1043.25,513.82 1043.73,513.94 1044.22,513.88 1044.70,513.53 1045.18,513.48 1045.66,513.66 1046.14,513.05 1046.62,511.56 1047.10,510.82 1047.10,510.78 1047.58,511.46 1048.06,513.15 1048.55,513.43 1049.03,513.30 1049.51,513.23 1049.99,513.72 1050.47,513.31 1050.95,513.47 1051.43,513.25 1051.91,513.79 1052.40,513.43 1052.88,513.32 1053.36,513.56 1053.84,511.21 1054.32,502.77 1054.32,502.80 1054.80,510.81 1055.28,507.68 1055.38,506.85 1055.76,511.96 1056.24,513.37 1056.73,513.40 1057.21,513.34 1057.69,513.35 1058.17,513.42 1058.65,513.25 1059.13,513.23 1059.61,513.48 1060.09,513.22 1060.57,513.89 1061.06,513.89 1061.54,513.92 1062.02,513.81 1062.50,513.68 1062.98,513.61 1063.46,513.44 1063.94,513.39 1064.42,513.90 1064.91,513.66 1065.39,513.55 1065.87,513.68 1066.35,513.88 1066.83,513.51 1067.31,513.68 1067.79,513.44 1068.27,513.59 1068.75,513.22 1069.24,513.24 1069.72,513.91 1070.20,513.38 1070.68,513.41 1071.16,513.74 1071.64,513.88 1072.12,513.60 1072.60,513.66 1073.08,513.01 1073.57,511.62 1074.05,511.02 1074.05,511.09 1074.53,511.95 1075.01,513.04 1075.49,513.32 1075.97,513.52 1076.45,513.74 1076.93,513.71 1077.42,513.31 1077.90,513.57 1078.38,513.93 1078.86,513.64 1079.34,513.78 1079.82,513.45 1080.30,513.91 1080.78,513.76 1081.26,513.89 1081.75,513.60 1082.23,513.21 1082.71,513.55 1083.19,513.67 1083.67,513.25 1084.15,513.90 1084.63,513.69 1085.11,513.34 1085.59,513.96 1086.08,513.38 1086.56,513.69 1087.04,513.96 1087.52,513.77 1088.00,513.61 1088.48,513.67 1088.96,513.57 1089.44,513.93 1089.92,513.80 1090.41,513.21 1090.89,513.63 1091.37,513.60 1091.85,513.90 1092.33,513.75 1092.81,513.23 1093.29,513.44 1093.77,513.58 1094.26,513.93 1094.74,513.66 1095.22,513.37 1095.70,513.63 1096.18,513.51 1096.66,513.27 1097.14,513.47 1097.62,513.48 1098.10,513.94 1098.59,513.95 1099.07,513.37 1099.55,513.65 1100.03,513.29 1100.51,513.33 1100.99,513.26 1101.47,513.68 1101.95,513.20 1102.43,513.38 1102.92,513.28 1103.40,513.85 1103.88,513.36 1104.36,513.64 1104.84,513.22 1105.32,513.20 1105.80,513.80 1106.28,513.64 1106.77,513.76 1107.25,513.61 1107.73,513.75 1108.21,513.45 1108.69,513.87 1109.17,513.84 1109.65,513.61 1110.13,513.91 1110.61,513.67 1111.10,513.27 1111.58,513.28 1112.06,513.82 1112.54,513.95 1113.02,513.33 1113.50,513.23 1113.98,513.51 1114.46,513.86 1114.94,513.79 1115.43,513.26 1115.91,513.24 1116.39,513.94 1116.87,513.83 1117.35,513.64 1117.83,513.76 1118.31,513.39 1118.79,513.68 1119.28,513.37 1119.76,513.85 1120.24,513.57 1120.72,513.21 1121.20,513.43 1121.68,513.90 1122.16,513.88 1122.64,513.47 1123.12,513.68 1123.61,513.68 1124.09,513.60 1124.57,513.52 1125.05,513.22 1125.53,513.78 1126.01,513.53 1126.49,513.77 1126.97,513.55 1127.45,513.40 1127.94,513.87 1128.42,513.60 1128.90,513.42 1129.38,513.96 1129.86,513.37 1130.34,513.64 1130.82,513.58 1131.30,513.50 1131.79,513.36 1132.27,513.93 1132.75,513.58 1133.23,513.94 1133.71,513.67 1134.19,513.70 1134.67,513.95 1135.15,513.74 1135.63,513.62 1136.12,513.46 1136.60,513.25 1137.08,513.68 1137.56,513.56 1138.04,513.42 1138.52,513.24 1139.00,513.23 1139.48,513.20 1139.96,513.74 1140.45,513.84 1140.93,513.25 1141.41,513.91 1141.89,513.62 1142.37,513.40 1142.85,513.56 1143.33,513.67 1143.81,513.25 1144.29,513.74 1144.78,513.54 1145.26,513.33 1145.74,513.86 1146.22,513.70 1146.70,513.59 1147.18,513.53 1147.66,513.81 1148.14,513.62 1148.63,513.92 1149.11,513.90 1149.59,513.70 1150.07,513.86 1150.55,513.22 1151.03,513.76 1151.51,513.76 1151.99,513.36 1152.47,513.40 1152.96,513.77 1153.44,513.33 1153.92,513.48 1154.40,513.67 1154.88,513.48 1155.36,513.78 1155.84,513.76 1156.32,513.29 1156.80,513.63 1157.29,513.27 1157.77,513.83 1158.25,513.86 1158.73,513.93 1159.21,513.40 1159.69,513.53 1160.17,513.96 1160.65,513.94 1161.14,513.33 1161.62,513.59 1162.10,513.29 1162.58,513.94 1163.06,513.51 1163.54,513.88 1164.02,513.41 1164.50,513.50 1164.98,513.50 1165.47,513.80 1165.95,513.23 1166.43,513.88 1166.91,513.92 1167.39,513.44 1167.87,513.90 1168.35,513.92 1168.83,513.61 1169.31,513.47 1169.80,513.28 1170.28,513.41 1170.76,513.91 1171.24,513.47 1171.72,513.32 1172.20,513.88 1172.68,513.38 1173.16,513.77 1173.65,513.74 1174.13,513.97 1174.61,513.38 1175.09,513.57 1175.57,513.27 1176.05,513.61 1176.53,513.85 1177.01,513.80 1177.49,513.76 1177.98,513.24 1178.46,513.81 1178.94,513.90 1179.42,513.70 1179.90,513.91 1180.38,513.64 1180.86,513.49 1181.34,513.47 1181.82,513.83 1182.31,513.86 1182.79,513.59 1183.27,513.44 1183.75,513.62 1184.23,513.53 1184.71,513.26 1185.19,513.86 1185.67,513.76 1186.15,513.59 1186.64,513.55 1186.6,514.3" fill="#0f4880" stroke="#0f4880" stroke-width="0.6"/><rect x="689.5" y="512.7" width="497.5" height="2.1" fill="#5d8cba"/><path d="M689.8 422.5V517.2H1187V422.5" fill="none" stroke="#5a5a5a" stroke-width="1.4"/><path d="M689 422H1187.5" stroke="#5a5a5a" stroke-width="1.2"/><path d="M686.5 513.0H689.5" stroke="#333" stroke-width="1.2"/><path d="M684.5 501.8H689.5" stroke="#333" stroke-width="1.2"/><path d="M686.5 490.6H689.5" stroke="#333" stroke-width="1.2"/><path d="M684.5 479.4H689.5" stroke="#333" stroke-width="1.2"/><path d="M686.5 468.2H689.5" stroke="#333" stroke-width="1.2"/><path d="M684.5 457.0H689.5" stroke="#333" stroke-width="1.2"/><path d="M686.5 445.8H689.5" stroke="#333" stroke-width="1.2"/><path d="M684.5 434.6H689.5" stroke="#333" stroke-width="1.2"/><text x="679.5" y="506" text-anchor="end" font-family="Liberation Sans" font-size="11" fill="#222" stroke="#222" stroke-width="0.15">0.5</text><text x="679.5" y="483.5" text-anchor="end" font-family="Liberation Sans" font-size="11" fill="#222" stroke="#222" stroke-width="0.15">1.5</text><text x="679.5" y="461.5" text-anchor="end" font-family="Liberation Sans" font-size="11" fill="#222" stroke="#222" stroke-width="0.15">2.5</text><text x="675" y="441.5" text-anchor="end" font-family="Liberation Sans" font-size="11" fill="#222" stroke="#222" stroke-width="0.15" textLength="20" lengthAdjust="spacingAndGlyphs">x10</text><text x="675.5" y="433.5" font-family="Liberation Sans" font-size="10" fill="#222">4</text><text transform="translate(663.5,468) rotate(-90)" text-anchor="middle" font-family="Liberation Sans" font-size="11" fill="#222" stroke="#222" stroke-width="0.15">Intensity</text><path d="M698.8 517V522.5" stroke="#333" stroke-width="1.3"/><text x="698.8" y="536" text-anchor="middle" font-family="Liberation Sans" font-size="11" fill="#222" stroke="#222" stroke-width="0.15">950</text><path d="M708.4 517V520" stroke="#333" stroke-width="1.3"/><path d="M718.0 517V520" stroke="#333" stroke-width="1.3"/><path d="M727.6 517V520" stroke="#333" stroke-width="1.3"/><path d="M737.2 517V520" stroke="#333" stroke-width="1.3"/><path d="M746.9 517V522.5" stroke="#333" stroke-width="1.3"/><text x="746.9" y="536" text-anchor="middle" font-family="Liberation Sans" font-size="11" fill="#222" stroke="#222" stroke-width="0.15">1000</text><path d="M756.5 517V520" stroke="#333" stroke-width="1.3"/><path d="M766.1 517V520" stroke="#333" stroke-width="1.3"/><path d="M775.7 517V520" stroke="#333" stroke-width="1.3"/><path d="M785.4 517V520" stroke="#333" stroke-width="1.3"/><path d="M795.0 517V522.5" stroke="#333" stroke-width="1.3"/><text x="795.0" y="536" text-anchor="middle" font-family="Liberation Sans" font-size="11" fill="#222" stroke="#222" stroke-width="0.15">1050</text><path d="M804.6 517V520" stroke="#333" stroke-width="1.3"/><path d="M814.2 517V520" stroke="#333" stroke-width="1.3"/><path d="M823.8 517V520" stroke="#333" stroke-width="1.3"/><path d="M833.5 517V520" stroke="#333" stroke-width="1.3"/><path d="M843.1 517V522.5" stroke="#333" stroke-width="1.3"/><text x="843.1" y="536" text-anchor="middle" font-family="Liberation Sans" font-size="11" fill="#222" stroke="#222" stroke-width="0.15">1100</text><path d="M852.7 517V520" stroke="#333" stroke-width="1.3"/><path d="M862.3 517V520" stroke="#333" stroke-width="1.3"/><path d="M872.0 517V520" stroke="#333" stroke-width="1.3"/><path d="M881.6 517V520" stroke="#333" stroke-width="1.3"/><path d="M891.2 517V522.5" stroke="#333" stroke-width="1.3"/><text x="891.2" y="536" text-anchor="middle" font-family="Liberation Sans" font-size="11" fill="#222" stroke="#222" stroke-width="0.15">1150</text><path d="M900.8 517V520" stroke="#333" stroke-width="1.3"/><path d="M910.5 517V520" stroke="#333" stroke-width="1.3"/><path d="M920.1 517V520" stroke="#333" stroke-width="1.3"/><path d="M929.7 517V520" stroke="#333" stroke-width="1.3"/><path d="M939.3 517V522.5" stroke="#333" stroke-width="1.3"/><text x="939.3" y="536" text-anchor="middle" font-family="Liberation Sans" font-size="11" fill="#222" stroke="#222" stroke-width="0.15">1200</text><path d="M948.9 517V520" stroke="#333" stroke-width="1.3"/><path d="M958.6 517V520" stroke="#333" stroke-width="1.3"/><path d="M968.2 517V520" stroke="#333" stroke-width="1.3"/><path d="M977.8 517V520" stroke="#333" stroke-width="1.3"/><path d="M987.4 517V522.5" stroke="#333" stroke-width="1.3"/><text x="987.4" y="536" text-anchor="middle" font-family="Liberation Sans" font-size="11" fill="#222" stroke="#222" stroke-width="0.15">1250</text><path d="M997.1 517V520" stroke="#333" stroke-width="1.3"/><path d="M1006.7 517V520" stroke="#333" stroke-width="1.3"/><path d="M1016.3 517V520" stroke="#333" stroke-width="1.3"/><path d="M1025.9 517V520" stroke="#333" stroke-width="1.3"/><path d="M1035.6 517V522.5" stroke="#333" stroke-width="1.3"/><text x="1035.6" y="536" text-anchor="middle" font-family="Liberation Sans" font-size="11" fill="#222" stroke="#222" stroke-width="0.15">1300</text><path d="M1045.2 517V520" stroke="#333" stroke-width="1.3"/><path d="M1054.8 517V520" stroke="#333" stroke-width="1.3"/><path d="M1064.4 517V520" stroke="#333" stroke-width="1.3"/><path d="M1074.0 517V520" stroke="#333" stroke-width="1.3"/><path d="M1083.7 517V522.5" stroke="#333" stroke-width="1.3"/><text x="1083.7" y="536" text-anchor="middle" font-family="Liberation Sans" font-size="11" fill="#222" stroke="#222" stroke-width="0.15">1350</text><path d="M1093.3 517V520" stroke="#333" stroke-width="1.3"/><path d="M1102.9 517V520" stroke="#333" stroke-width="1.3"/><path d="M1112.5 517V520" stroke="#333" stroke-width="1.3"/><path d="M1122.2 517V520" stroke="#333" stroke-width="1.3"/><path d="M1131.8 517V522.5" stroke="#333" stroke-width="1.3"/><text x="1131.8" y="536" text-anchor="middle" font-family="Liberation Sans" font-size="11" fill="#222" stroke="#222" stroke-width="0.15">1400</text><path d="M1141.4 517V520" stroke="#333" stroke-width="1.3"/><path d="M1151.0 517V520" stroke="#333" stroke-width="1.3"/><path d="M1160.7 517V520" stroke="#333" stroke-width="1.3"/><path d="M1170.3 517V520" stroke="#333" stroke-width="1.3"/><text x="1175" y="536" text-anchor="middle" font-family="Liberation Sans" font-size="11" fill="#222" stroke="#222" stroke-width="0.15">m/z</text><path d="M657 532L654.5 535H659.5ZM657 539.5L654.5 536.5H659.5Z" fill="#333"/><ellipse cx="671.5" cy="536" rx="3.5" ry="2.2" fill="#333"/><circle cx="671.5" cy="536" r="0.9" fill="#f0f0f0"/></svg><div class="panel" style="left:3px;top:553px;width:1272px;height:233px"></div><div class="tab" style="left:4px;top:555px;width:40px;height:20px"></div><div class="t" style="left:7px;top:560px;color:#222">Results</div><div class="a" style="left:44px;top:574px;width:1230px;height:2px;background:#cfcfcf"></div><svg class="a" style="left:1236px;top:557px" width="32" height="11"><rect x="0.8" y="0.8" width="9.5" height="3.6" rx="1.6" fill="#fafafa" stroke="#8a8a8a" stroke-width="1.2"/><rect x="21.8" y="0.8" width="9" height="9" rx="1" fill="#fafafa" stroke="#7a7a7a" stroke-width="1.3"/><rect x="22" y="1" width="8.6" height="1.8" fill="#8a8a8a"/></svg><div class="t" style="left:10px;top:588px">Show Plate in Table</div><div class="a" style="left:124px;top:583px;width:1070px;height:21px;background:#e5e5e5;border:1px solid #c4c4c4"></div><div class="t" style="left:128px;top:588px">G_76cf54d3-612b-4843-93da-9629b4c7cbaf</div><svg class="a" style="left:1180px;top:590px" width="10" height="6"><path d="M1 1L5 5 9 1" fill="none" stroke="#444" stroke-width="1.2"/></svg><div class="btn" style="left:1199px;top:583px;width:66px;height:21px"></div><div class="t" style="left:1212px;top:588px">Export...</div><div class="t" style="left:10px;top:614px">Filter</div><div class="a" style="left:124px;top:609px;width:1070px;height:20px;background:#fff;border:1px solid #8a8a8a"></div><div class="a" style="left:10.5px;top:653px;width:1243.5px;height:18px;background:#bfcfdb"></div><div class="a" style="left:10.5px;top:671px;width:1243.5px;height:91px;background:#fff"></div><div class="a" style="left:10.5px;top:671px;width:1243.5px;height:18px;background:#0a6cc2"></div><div class="a" style="left:10.5px;top:689px;width:1243.5px;height:18px;background:#ffffff"></div><div class="a" style="left:10.5px;top:689px;width:1243.5px;height:1px;background:#d3dde6"></div><div class="a" style="left:10.5px;top:707px;width:1243.5px;height:18px;background:#eaeff3"></div><div class="a" style="left:10.5px;top:707px;width:1243.5px;height:1px;background:#d3dde6"></div><div class="a" style="left:10.5px;top:725px;width:1243.5px;height:18px;background:#ffffff"></div><div class="a" style="left:10.5px;top:725px;width:1243.5px;height:1px;background:#d3dde6"></div><div class="a" style="left:10.5px;top:743px;width:1243.5px;height:18px;background:#eaeff3"></div><div class="a" style="left:10.5px;top:743px;width:1243.5px;height:1px;background:#d3dde6"></div><div class="a" style="left:10.5px;top:761px;width:1243.5px;height:1px;background:#d3dde6"></div><div class="a" style="left:256px;top:671px;width:1px;height:91px;background:#d3dde6"></div><div class="a" style="left:306px;top:671px;width:1px;height:91px;background:#d3dde6"></div><div class="a" style="left:370px;top:671px;width:1px;height:91px;background:#d3dde6"></div><div class="a" style="left:435px;top:671px;width:1px;height:91px;background:#d3dde6"></div><div class="a" style="left:525.5px;top:671px;width:1px;height:91px;background:#d3dde6"></div><div class="a" style="left:662.3px;top:671px;width:1px;height:91px;background:#d3dde6"></div><div class="a" style="left:785.4px;top:671px;width:1px;height:91px;background:#d3dde6"></div><div class="a" style="left:903.6px;top:671px;width:1px;height:91px;background:#d3dde6"></div><div class="a" style="left:1013.6px;top:671px;width:1px;height:91px;background:#d3dde6"></div><div class="a" style="left:1122.6px;top:671px;width:1px;height:91px;background:#d3dde6"></div><div class="a" style="left:1245.6px;top:671px;width:1px;height:91px;background:#d3dde6"></div><div class="a" style="left:256px;top:671px;width:1px;height:18px;background:#4a8fd0"></div><div class="a" style="left:306px;top:671px;width:1px;height:18px;background:#4a8fd0"></div><div class="a" style="left:370px;top:671px;width:1px;height:18px;background:#4a8fd0"></div><div class="a" style="left:435px;top:671px;width:1px;height:18px;background:#4a8fd0"></div><div class="a" style="left:525.5px;top:671px;width:1px;height:18px;background:#4a8fd0"></div><div class="a" style="left:662.3px;top:671px;width:1px;height:18px;background:#4a8fd0"></div><div class="a" style="left:785.4px;top:671px;width:1px;height:18px;background:#4a8fd0"></div><div class="a" style="left:903.6px;top:671px;width:1px;height:18px;background:#4a8fd0"></div><div class="a" style="left:1013.6px;top:671px;width:1px;height:18px;background:#4a8fd0"></div><div class="a" style="left:1122.6px;top:671px;width:1px;height:18px;background:#4a8fd0"></div><div class="a" style="left:1245.6px;top:671px;width:1px;height:18px;background:#4a8fd0"></div><div class="t" style="left:63.2px;width:140px;text-align:center;top:657px;letter-spacing:-0.2px">Plate ID</div><div class="t" style="left:211.0px;width:140px;text-align:center;top:657px;letter-spacing:-0.2px">Order</div><div class="t" style="left:268.0px;width:140px;text-align:center;top:657px;letter-spacing:-0.2px">Position</div><div class="t" style="left:332.5px;width:140px;text-align:center;top:657px;letter-spacing:-0.2px">Monitor</div><div class="t" style="left:410.2px;width:140px;text-align:center;top:657px;letter-spacing:-0.2px">% Conversion</div><div class="t" style="left:523.9px;width:140px;text-align:center;top:657px;letter-spacing:-0.2px">Time stamp</div><div class="t" style="left:653.8px;width:140px;text-align:center;top:657px;letter-spacing:-0.2px">Mass 1046.5418</div><div class="t" style="left:774.5px;width:140px;text-align:center;top:657px;letter-spacing:-0.2px">Area 1046.5418</div><div class="t" style="left:888.6px;width:140px;text-align:center;top:657px;letter-spacing:-0.2px">Mass 1060.5687</div><div class="t" style="left:998.1px;width:140px;text-align:center;top:657px;letter-spacing:-0.2px">Area 1060.5687</div><div class="t" style="left:1114.1px;width:140px;text-align:center;top:657px;letter-spacing:-0.2px">Mass 1296.6848</div><div class="t" style="left:1179.8px;width:140px;text-align:center;top:657px;letter-spacing:-0.2px"></div><div class="t" style="left:-16.8px;width:300px;text-align:center;top:675px;color:#fff;letter-spacing:-0.3px">G_76cf54d3-612b-4843-93da-9629b4c7cbaf</div><div class="t" style="left:131.0px;width:300px;text-align:center;top:675px;color:#fff;letter-spacing:-0.3px">1</div><div class="t" style="left:188.0px;width:300px;text-align:center;top:675px;color:#fff;letter-spacing:-0.3px">G11</div><div class="t" style="left:252.5px;width:300px;text-align:center;top:675px;color:#fff;letter-spacing:-0.3px">OK</div><div class="t" style="left:330.2px;width:300px;text-align:center;top:675px;color:#fff;letter-spacing:-0.3px">25.5</div><div class="t" style="left:443.9px;width:300px;text-align:center;top:675px;color:#fff;letter-spacing:-0.3px">2021-11-01 12:06:06</div><div class="t" style="left:573.8px;width:300px;text-align:center;top:675px;color:#fff;letter-spacing:-0.3px">1046.5443</div><div class="t" style="left:694.5px;width:300px;text-align:center;top:675px;color:#fff;letter-spacing:-0.3px">26642</div><div class="t" style="left:808.6px;width:300px;text-align:center;top:675px;color:#fff;letter-spacing:-0.3px">1060.5694</div><div class="t" style="left:918.1px;width:300px;text-align:center;top:675px;color:#fff;letter-spacing:-0.3px">86181</div><div class="t" style="left:1034.1px;width:300px;text-align:center;top:675px;color:#fff;letter-spacing:-0.3px">1296.6846</div><div class="t" style="left:1099.8px;width:300px;text-align:center;top:675px;color:#fff;letter-spacing:-0.3px"></div><div class="t" style="left:-16.8px;width:300px;text-align:center;top:693px;color:#1a1a1a;letter-spacing:-0.3px">G_76cf54d3-612b-4843-93da-9629b4c7cbaf</div><div class="t" style="left:131.0px;width:300px;text-align:center;top:693px;color:#1a1a1a;letter-spacing:-0.3px">1</div><div class="t" style="left:188.0px;width:300px;text-align:center;top:693px;color:#1a1a1a;letter-spacing:-0.3px">G12</div><div class="t" style="left:252.5px;width:300px;text-align:center;top:693px;color:#1a1a1a;letter-spacing:-0.3px">OK</div><div class="t" style="left:330.2px;width:300px;text-align:center;top:693px;color:#1a1a1a;letter-spacing:-0.3px">21.3</div><div class="t" style="left:443.9px;width:300px;text-align:center;top:693px;color:#1a1a1a;letter-spacing:-0.3px">2021-11-01 12:06:07</div><div class="t" style="left:573.8px;width:300px;text-align:center;top:693px;color:#1a1a1a;letter-spacing:-0.3px">1046.5436</div><div class="t" style="left:694.5px;width:300px;text-align:center;top:693px;color:#1a1a1a;letter-spacing:-0.3px">36499</div><div class="t" style="left:808.6px;width:300px;text-align:center;top:693px;color:#1a1a1a;letter-spacing:-0.3px">1060.5692</div><div class="t" style="left:918.1px;width:300px;text-align:center;top:693px;color:#1a1a1a;letter-spacing:-0.3px">120874</div><div class="t" style="left:1034.1px;width:300px;text-align:center;top:693px;color:#1a1a1a;letter-spacing:-0.3px">1296.6849</div><div class="t" style="left:1099.8px;width:300px;text-align:center;top:693px;color:#1a1a1a;letter-spacing:-0.3px"></div><div class="t" style="left:-16.8px;width:300px;text-align:center;top:711px;color:#1a1a1a;letter-spacing:-0.3px">G_76cf54d3-612b-4843-93da-9629b4c7cbaf</div><div class="t" style="left:131.0px;width:300px;text-align:center;top:711px;color:#1a1a1a;letter-spacing:-0.3px">1</div><div class="t" style="left:188.0px;width:300px;text-align:center;top:711px;color:#1a1a1a;letter-spacing:-0.3px">G13</div><div class="t" style="left:252.5px;width:300px;text-align:center;top:711px;color:#1a1a1a;letter-spacing:-0.3px">OK</div><div class="t" style="left:330.2px;width:300px;text-align:center;top:711px;color:#1a1a1a;letter-spacing:-0.3px">45.2</div><div class="t" style="left:443.9px;width:300px;text-align:center;top:711px;color:#1a1a1a;letter-spacing:-0.3px">2021-11-01 12:06:09</div><div class="t" style="left:573.8px;width:300px;text-align:center;top:711px;color:#1a1a1a;letter-spacing:-0.3px">1046.5440</div><div class="t" style="left:694.5px;width:300px;text-align:center;top:711px;color:#1a1a1a;letter-spacing:-0.3px">48380</div><div class="t" style="left:808.6px;width:300px;text-align:center;top:711px;color:#1a1a1a;letter-spacing:-0.3px">1060.5691</div><div class="t" style="left:918.1px;width:300px;text-align:center;top:711px;color:#1a1a1a;letter-spacing:-0.3px">92607</div><div class="t" style="left:1034.1px;width:300px;text-align:center;top:711px;color:#1a1a1a;letter-spacing:-0.3px">1296.6846</div><div class="t" style="left:1099.8px;width:300px;text-align:center;top:711px;color:#1a1a1a;letter-spacing:-0.3px"></div><div class="t" style="left:-16.8px;width:300px;text-align:center;top:729px;color:#1a1a1a;letter-spacing:-0.3px">G_76cf54d3-612b-4843-93da-9629b4c7cbaf</div><div class="t" style="left:131.0px;width:300px;text-align:center;top:729px;color:#1a1a1a;letter-spacing:-0.3px">1</div><div class="t" style="left:188.0px;width:300px;text-align:center;top:729px;color:#1a1a1a;letter-spacing:-0.3px">G14</div><div class="t" style="left:252.5px;width:300px;text-align:center;top:729px;color:#1a1a1a;letter-spacing:-0.3px">OK</div><div class="t" style="left:330.2px;width:300px;text-align:center;top:729px;color:#1a1a1a;letter-spacing:-0.3px">44.8</div><div class="t" style="left:443.9px;width:300px;text-align:center;top:729px;color:#1a1a1a;letter-spacing:-0.3px">2021-11-01 12:06:10</div><div class="t" style="left:573.8px;width:300px;text-align:center;top:729px;color:#1a1a1a;letter-spacing:-0.3px">1046.5418</div><div class="t" style="left:694.5px;width:300px;text-align:center;top:729px;color:#1a1a1a;letter-spacing:-0.3px">38567</div><div class="t" style="left:808.6px;width:300px;text-align:center;top:729px;color:#1a1a1a;letter-spacing:-0.3px">1060.5690</div><div class="t" style="left:918.1px;width:300px;text-align:center;top:729px;color:#1a1a1a;letter-spacing:-0.3px">76795</div><div class="t" style="left:1034.1px;width:300px;text-align:center;top:729px;color:#1a1a1a;letter-spacing:-0.3px">1296.6862</div><div class="t" style="left:1099.8px;width:300px;text-align:center;top:729px;color:#1a1a1a;letter-spacing:-0.3px"></div><div class="t" style="left:-16.8px;width:300px;text-align:center;top:747px;color:#1a1a1a;letter-spacing:-0.3px">G_76cf54d3-612b-4843-93da-9629b4c7cbaf</div><div class="t" style="left:131.0px;width:300px;text-align:center;top:747px;color:#1a1a1a;letter-spacing:-0.3px">1</div><div class="t" style="left:188.0px;width:300px;text-align:center;top:747px;color:#1a1a1a;letter-spacing:-0.3px">G15</div><div class="t" style="left:252.5px;width:300px;text-align:center;top:747px;color:#1a1a1a;letter-spacing:-0.3px">OK</div><div class="t" style="left:330.2px;width:300px;text-align:center;top:747px;color:#1a1a1a;letter-spacing:-0.3px">50.9</div><div class="t" style="left:443.9px;width:300px;text-align:center;top:747px;color:#1a1a1a;letter-spacing:-0.3px">2021-11-01 12:06:11</div><div class="t" style="left:573.8px;width:300px;text-align:center;top:747px;color:#1a1a1a;letter-spacing:-0.3px">1046.5420</div><div class="t" style="left:694.5px;width:300px;text-align:center;top:747px;color:#1a1a1a;letter-spacing:-0.3px">76166</div><div class="t" style="left:808.6px;width:300px;text-align:center;top:747px;color:#1a1a1a;letter-spacing:-0.3px">1060.5691</div><div class="t" style="left:918.1px;width:300px;text-align:center;top:747px;color:#1a1a1a;letter-spacing:-0.3px">157239</div><div class="t" style="left:1034.1px;width:300px;text-align:center;top:747px;color:#1a1a1a;letter-spacing:-0.3px">1296.6855</div><div class="t" style="left:1099.8px;width:300px;text-align:center;top:747px;color:#1a1a1a;letter-spacing:-0.3px"></div><svg class="a" style="left:1256px;top:657px" width="11" height="8"><path d="M1.5 6L5.5 2 9.5 6" fill="none" stroke="#333" stroke-width="1.6"/></svg><div class="thumb" style="left:1255px;top:696px;width:13px;height:14px"></div><svg class="a" style="left:1256px;top:752px" width="11" height="8"><path d="M1.5 2L5.5 6 9.5 2" fill="none" stroke="#333" stroke-width="1.6"/></svg><div class="thumb" style="left:27px;top:765px;width:1102px;height:13px"></div><svg class="a" style="left:14px;top:767px" width="8" height="9"><path d="M5.5 1L2 4.5 5.5 8" fill="none" stroke="#333" stroke-width="1.6"/></svg><svg class="a" style="left:1242px;top:767px" width="8" height="9"><path d="M2.5 1L6 4.5 2.5 8" fill="none" stroke="#333" stroke-width="1.6"/></svg></body></html>
